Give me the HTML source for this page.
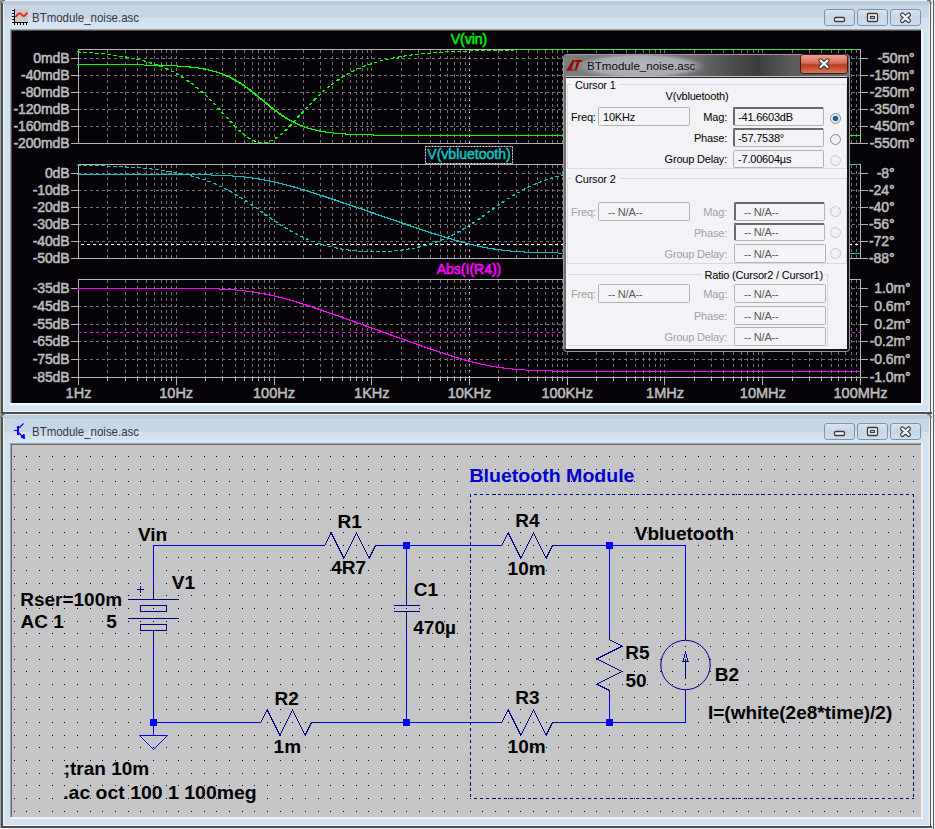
<!DOCTYPE html><html><head><meta charset="utf-8"><style>html,body{margin:0;padding:0;background:#dcdcdc;overflow:hidden}svg{display:block}text{font-family:"Liberation Sans", sans-serif}</style></head><body>
<svg width="935" height="829" viewBox="0 0 935 829">
<defs><linearGradient id="tb" x1="0" y1="0" x2="0" y2="1"><stop offset="0" stop-color="#c3d4e6"/><stop offset="0.62" stop-color="#cbdbeb"/><stop offset="0.66" stop-color="#d9e4ee"/><stop offset="0.8" stop-color="#d4e3f2"/><stop offset="1" stop-color="#d4e3f2"/></linearGradient><linearGradient id="btn" x1="0" y1="0" x2="0" y2="1"><stop offset="0" stop-color="#d8e4f0"/><stop offset="0.5" stop-color="#c6d6e6"/><stop offset="1" stop-color="#d0dff0"/></linearGradient><linearGradient id="redbtn" x1="0" y1="0" x2="0" y2="1"><stop offset="0" stop-color="#e9a898"/><stop offset="0.45" stop-color="#d86c58"/><stop offset="0.55" stop-color="#c0381c"/><stop offset="1" stop-color="#d77d65"/></linearGradient><linearGradient id="dlgtb" x1="0" y1="0" x2="0" y2="1"><stop offset="0" stop-color="#8a8a8a"/><stop offset="1" stop-color="#6e6e6e"/></linearGradient><radialGradient id="glow" cx="0.5" cy="0.5" r="0.5"><stop offset="0" stop-color="#a8a8a8"/><stop offset="0.7" stop-color="#9a9a9a"/><stop offset="1" stop-color="#7a7a7a" stop-opacity="0"/></radialGradient><pattern id="dots" x="14" y="456" width="38" height="38" patternUnits="userSpaceOnUse"><rect x="0" y="0" width="1" height="1" fill="#000"/><rect x="12" y="0" width="1" height="1" fill="#000"/><rect x="25" y="0" width="1" height="1" fill="#000"/><rect x="0" y="13" width="1" height="1" fill="#000"/><rect x="12" y="13" width="1" height="1" fill="#000"/><rect x="25" y="13" width="1" height="1" fill="#000"/><rect x="0" y="25" width="1" height="1" fill="#000"/><rect x="12" y="25" width="1" height="1" fill="#000"/><rect x="25" y="25" width="1" height="1" fill="#000"/></pattern></defs>
<rect x="0" y="0" width="935" height="829" fill="#f0eef2"/>
<rect x="933" y="0" width="1" height="829" fill="#5e5e5e"/>
<rect x="934" y="0" width="1" height="829" fill="#e4e8ee"/>
<rect x="0" y="0" width="931" height="414" fill="#d4e3f1"/>
<rect x="0" y="0" width="931" height="1" fill="#eceaee"/>
<rect x="0" y="1" width="931" height="4" fill="#bacddc"/>
<rect x="0" y="5" width="931" height="13" fill="#c7d6e4"/>
<rect x="0" y="18" width="931" height="4" fill="#d5dfe9"/>
<rect x="0" y="0" width="1" height="414" fill="#a2a2a2"/>
<rect x="1" y="3" width="2" height="411" fill="#4e4e4e"/>
<rect x="3" y="4" width="1" height="408" fill="#eef3f8"/>
<rect x="929" y="4" width="1" height="408" fill="#e8f0f8"/>
<rect x="930" y="3" width="1" height="411" fill="#5a5a5a"/>
<rect x="4" y="411" width="925" height="1" fill="#f2f6fa"/>
<rect x="1" y="412" width="931" height="2" fill="#4e4e4e"/>
<path d="M1,4 Q1,0 5,0" stroke="#6a6a6a" stroke-width="1.5" fill="none"/>
<path d="M927,0 Q931,0 931,4" stroke="#6a6a6a" stroke-width="1.5" fill="none"/>
<rect x="10" y="29" width="913" height="376" fill="#f4f8fc"/>
<rect x="10" y="29" width="911" height="374" fill="#a0a0a0"/>
<rect x="11" y="30" width="910" height="373" fill="#505050"/>
<rect x="12" y="31" width="909" height="372" fill="#050307"/>
<path d="M107.5,50V143 M125.5,50V143 M137.5,50V143 M146.5,50V143 M154.5,50V143 M161.5,50V143 M166.5,50V143 M171.5,50V143 M176.5,50V143 M205.5,50V143 M222.5,50V143 M235.5,50V143 M244.5,50V143 M252.5,50V143 M258.5,50V143 M264.5,50V143 M269.5,50V143 M274.5,50V143 M303.5,50V143 M320.5,50V143 M332.5,50V143 M342.5,50V143 M350.5,50V143 M356.5,50V143 M362.5,50V143 M367.5,50V143 M371.5,50V143 M401.5,50V143 M418.5,50V143 M430.5,50V143 M440.5,50V143 M447.5,50V143 M454.5,50V143 M460.5,50V143 M465.5,50V143 M469.5,50V143 M498.5,50V143 M516.5,50V143 M528.5,50V143 M537.5,50V143 M545.5,50V143 M552.5,50V143 M557.5,50V143 M562.5,50V143 M567.5,50V143 M596.5,50V143 M613.5,50V143 M626.5,50V143 M635.5,50V143 M643.5,50V143 M649.5,50V143 M655.5,50V143 M660.5,50V143 M664.5,50V143 M694.5,50V143 M711.5,50V143 M723.5,50V143 M733.5,50V143 M741.5,50V143 M747.5,50V143 M753.5,50V143 M758.5,50V143 M762.5,50V143 M792.5,50V143 M809.5,50V143 M821.5,50V143 M831.5,50V143 M838.5,50V143 M845.5,50V143 M851.5,50V143 M856.5,50V143 M78,58.5H860 M78,75.5H860 M78,92.5H860 M78,109.5H860 M78,126.5H860 M107.5,165V258 M125.5,165V258 M137.5,165V258 M146.5,165V258 M154.5,165V258 M161.5,165V258 M166.5,165V258 M171.5,165V258 M176.5,165V258 M205.5,165V258 M222.5,165V258 M235.5,165V258 M244.5,165V258 M252.5,165V258 M258.5,165V258 M264.5,165V258 M269.5,165V258 M274.5,165V258 M303.5,165V258 M320.5,165V258 M332.5,165V258 M342.5,165V258 M350.5,165V258 M356.5,165V258 M362.5,165V258 M367.5,165V258 M371.5,165V258 M401.5,165V258 M418.5,165V258 M430.5,165V258 M440.5,165V258 M447.5,165V258 M454.5,165V258 M460.5,165V258 M465.5,165V258 M469.5,165V258 M498.5,165V258 M516.5,165V258 M528.5,165V258 M537.5,165V258 M545.5,165V258 M552.5,165V258 M557.5,165V258 M562.5,165V258 M567.5,165V258 M596.5,165V258 M613.5,165V258 M626.5,165V258 M635.5,165V258 M643.5,165V258 M649.5,165V258 M655.5,165V258 M660.5,165V258 M664.5,165V258 M694.5,165V258 M711.5,165V258 M723.5,165V258 M733.5,165V258 M741.5,165V258 M747.5,165V258 M753.5,165V258 M758.5,165V258 M762.5,165V258 M792.5,165V258 M809.5,165V258 M821.5,165V258 M831.5,165V258 M838.5,165V258 M845.5,165V258 M851.5,165V258 M856.5,165V258 M78,173.5H860 M78,190.5H860 M78,207.5H860 M78,224.5H860 M78,241.5H860 M107.5,280V377 M125.5,280V377 M137.5,280V377 M146.5,280V377 M154.5,280V377 M161.5,280V377 M166.5,280V377 M171.5,280V377 M176.5,280V377 M205.5,280V377 M222.5,280V377 M235.5,280V377 M244.5,280V377 M252.5,280V377 M258.5,280V377 M264.5,280V377 M269.5,280V377 M274.5,280V377 M303.5,280V377 M320.5,280V377 M332.5,280V377 M342.5,280V377 M350.5,280V377 M356.5,280V377 M362.5,280V377 M367.5,280V377 M371.5,280V377 M401.5,280V377 M418.5,280V377 M430.5,280V377 M440.5,280V377 M447.5,280V377 M454.5,280V377 M460.5,280V377 M465.5,280V377 M469.5,280V377 M498.5,280V377 M516.5,280V377 M528.5,280V377 M537.5,280V377 M545.5,280V377 M552.5,280V377 M557.5,280V377 M562.5,280V377 M567.5,280V377 M596.5,280V377 M613.5,280V377 M626.5,280V377 M635.5,280V377 M643.5,280V377 M649.5,280V377 M655.5,280V377 M660.5,280V377 M664.5,280V377 M694.5,280V377 M711.5,280V377 M723.5,280V377 M733.5,280V377 M741.5,280V377 M747.5,280V377 M753.5,280V377 M758.5,280V377 M762.5,280V377 M792.5,280V377 M809.5,280V377 M821.5,280V377 M831.5,280V377 M838.5,280V377 M845.5,280V377 M851.5,280V377 M856.5,280V377 M78,288.5H860 M78,306.5H860 M78,324.5H860 M78,341.5H860 M78,359.5H860" stroke="#727272" stroke-width="1" stroke-dasharray="3,3" fill="none" shape-rendering="crispEdges"/>
<path d="M78.5,49.5H860.5V143.5H78.5Z M71,58.5H78 M861,58.5H868 M71,75.5H78 M861,75.5H868 M71,92.5H78 M861,92.5H868 M71,109.5H78 M861,109.5H868 M71,126.5H78 M861,126.5H868 M71,143.5H78 M861,143.5H868 M78.5,164.5H860.5V258.5H78.5Z M71,173.5H78 M861,173.5H868 M71,190.5H78 M861,190.5H868 M71,207.5H78 M861,207.5H868 M71,224.5H78 M861,224.5H868 M71,241.5H78 M861,241.5H868 M71,258.5H78 M861,258.5H868 M78.5,279.5H860.5V377.5H78.5Z M71,288.5H78 M861,288.5H868 M71,306.5H78 M861,306.5H868 M71,324.5H78 M861,324.5H868 M71,341.5H78 M861,341.5H868 M71,359.5H78 M861,359.5H868 M71,377.5H78 M861,377.5H868" stroke="#b4b4b4" stroke-width="1" fill="none" shape-rendering="crispEdges"/>
<path d="M78.5,377V385 M107.5,377V381 M125.5,377V381 M137.5,377V381 M146.5,377V381 M154.5,377V381 M161.5,377V381 M166.5,377V381 M171.5,377V381 M176.5,377V385 M205.5,377V381 M222.5,377V381 M235.5,377V381 M244.5,377V381 M252.5,377V381 M258.5,377V381 M264.5,377V381 M269.5,377V381 M274.5,377V385 M303.5,377V381 M320.5,377V381 M332.5,377V381 M342.5,377V381 M350.5,377V381 M356.5,377V381 M362.5,377V381 M367.5,377V381 M371.5,377V385 M401.5,377V381 M418.5,377V381 M430.5,377V381 M440.5,377V381 M447.5,377V381 M454.5,377V381 M460.5,377V381 M465.5,377V381 M469.5,377V385 M498.5,377V381 M516.5,377V381 M528.5,377V381 M537.5,377V381 M545.5,377V381 M552.5,377V381 M557.5,377V381 M562.5,377V381 M567.5,377V385 M596.5,377V381 M613.5,377V381 M626.5,377V381 M635.5,377V381 M643.5,377V381 M649.5,377V381 M655.5,377V381 M660.5,377V381 M664.5,377V385 M694.5,377V381 M711.5,377V381 M723.5,377V381 M733.5,377V381 M741.5,377V381 M747.5,377V381 M753.5,377V381 M758.5,377V381 M762.5,377V385 M792.5,377V381 M809.5,377V381 M821.5,377V381 M831.5,377V381 M838.5,377V381 M845.5,377V381 M851.5,377V381 M856.5,377V381 M860.5,377V385" stroke="#b4b4b4" stroke-width="1" fill="none" shape-rendering="crispEdges"/>
<g font-size="14" font-weight="normal" fill="#bcbcbc" stroke="#bcbcbc" stroke-width="0.55"><text x="69.5" y="63" text-anchor="end" style="letter-spacing:-0.1px">0mdB</text><text x="914.5" y="63" text-anchor="end" style="letter-spacing:-0.1px">-50m°</text><text x="69.5" y="80" text-anchor="end" style="letter-spacing:-0.1px">-40mdB</text><text x="914.5" y="80" text-anchor="end" style="letter-spacing:-0.1px">-150m°</text><text x="69.5" y="97" text-anchor="end" style="letter-spacing:-0.1px">-80mdB</text><text x="914.5" y="97" text-anchor="end" style="letter-spacing:-0.1px">-250m°</text><text x="69.5" y="114" text-anchor="end" style="letter-spacing:-0.1px">-120mdB</text><text x="914.5" y="114" text-anchor="end" style="letter-spacing:-0.1px">-350m°</text><text x="69.5" y="131" text-anchor="end" style="letter-spacing:-0.1px">-160mdB</text><text x="914.5" y="131" text-anchor="end" style="letter-spacing:-0.1px">-450m°</text><text x="69.5" y="148" text-anchor="end" style="letter-spacing:-0.1px">-200mdB</text><text x="914.5" y="148" text-anchor="end" style="letter-spacing:-0.1px">-550m°</text><text x="69.5" y="178" text-anchor="end" style="letter-spacing:-0.1px">0dB</text><text x="894.5" y="178" text-anchor="end" style="letter-spacing:-0.1px">-8°</text><text x="69.5" y="195" text-anchor="end" style="letter-spacing:-0.1px">-10dB</text><text x="894.5" y="195" text-anchor="end" style="letter-spacing:-0.1px">-24°</text><text x="69.5" y="212" text-anchor="end" style="letter-spacing:-0.1px">-20dB</text><text x="894.5" y="212" text-anchor="end" style="letter-spacing:-0.1px">-40°</text><text x="69.5" y="229" text-anchor="end" style="letter-spacing:-0.1px">-30dB</text><text x="894.5" y="229" text-anchor="end" style="letter-spacing:-0.1px">-56°</text><text x="69.5" y="246" text-anchor="end" style="letter-spacing:-0.1px">-40dB</text><text x="894.5" y="246" text-anchor="end" style="letter-spacing:-0.1px">-72°</text><text x="69.5" y="263" text-anchor="end" style="letter-spacing:-0.1px">-50dB</text><text x="894.5" y="263" text-anchor="end" style="letter-spacing:-0.1px">-88°</text><text x="69.5" y="293" text-anchor="end" style="letter-spacing:-0.1px">-35dB</text><text x="910.5" y="293" text-anchor="end" style="letter-spacing:-0.1px">1.0m°</text><text x="69.5" y="311" text-anchor="end" style="letter-spacing:-0.1px">-45dB</text><text x="910.5" y="311" text-anchor="end" style="letter-spacing:-0.1px">0.6m°</text><text x="69.5" y="329" text-anchor="end" style="letter-spacing:-0.1px">-55dB</text><text x="910.5" y="329" text-anchor="end" style="letter-spacing:-0.1px">0.2m°</text><text x="69.5" y="346" text-anchor="end" style="letter-spacing:-0.1px">-65dB</text><text x="910.5" y="346" text-anchor="end" style="letter-spacing:-0.1px">-0.2m°</text><text x="69.5" y="364" text-anchor="end" style="letter-spacing:-0.1px">-75dB</text><text x="910.5" y="364" text-anchor="end" style="letter-spacing:-0.1px">-0.6m°</text><text x="69.5" y="382" text-anchor="end" style="letter-spacing:-0.1px">-85dB</text><text x="910.5" y="382" text-anchor="end" style="letter-spacing:-0.1px">-1.0m°</text><text x="78.5" y="398" text-anchor="middle" font-size="14.5">1Hz</text><text x="176.2" y="398" text-anchor="middle" font-size="14.5">10Hz</text><text x="274.0" y="398" text-anchor="middle" font-size="14.5">100Hz</text><text x="371.8" y="398" text-anchor="middle" font-size="14.5">1KHz</text><text x="469.5" y="398" text-anchor="middle" font-size="14.5">10KHz</text><text x="567.2" y="398" text-anchor="middle" font-size="14.5">100KHz</text><text x="665.0" y="398" text-anchor="middle" font-size="14.5">1MHz</text><text x="762.8" y="398" text-anchor="middle" font-size="14.5">10MHz</text><text x="860.5" y="398" text-anchor="middle" font-size="14.5">100MHz</text></g>
<text x="469" y="44" text-anchor="middle" font-size="14" fill="#00ee00" stroke="#00ee00" stroke-width="0.55">V(vin)</text>
<rect x="425.5" y="146.5" width="87" height="17" fill="#050307" stroke="#e0e0e0" stroke-width="1" stroke-dasharray="2,1"/>
<text x="469" y="159" text-anchor="middle" font-size="14" fill="#10c0c0" stroke="#10c0c0" stroke-width="0.55">V(vbluetooth)</text>
<text x="469" y="274" text-anchor="middle" font-size="14" fill="#ff00ff" stroke="#ff00ff" stroke-width="0.55">Abs(I(R4))</text>
<path d="M469.5,52V143 M469.5,166V258 M469.5,280V377" stroke="#ffffff" stroke-width="1" stroke-dasharray="1,5" fill="none" shape-rendering="crispEdges"/>
<path d="M81,244.5H860" stroke="#ffffff" stroke-width="1" stroke-dasharray="3,3" fill="none" shape-rendering="crispEdges"/>
<path d="M78.00,64.75 78.65,64.75 79.30,64.75 79.96,64.75 80.61,64.75 81.26,64.75 81.91,64.75 82.57,64.75 83.22,64.75 83.87,64.76 84.52,64.76 85.17,64.76 85.83,64.76 86.48,64.76 87.13,64.76 87.78,64.76 88.44,64.76 89.09,64.76 89.74,64.76 90.39,64.76 91.04,64.76 91.70,64.76 92.35,64.76 93.00,64.76 93.65,64.76 94.31,64.77 94.96,64.77 95.61,64.77 96.26,64.77 96.91,64.77 97.57,64.77 98.22,64.77 98.87,64.77 99.52,64.77 100.18,64.77 100.83,64.77 101.48,64.78 102.13,64.78 102.78,64.78 103.44,64.78 104.09,64.78 104.74,64.78 105.39,64.78 106.05,64.78 106.70,64.79 107.35,64.79 108.00,64.79 108.65,64.79 109.31,64.79 109.96,64.79 110.61,64.79 111.26,64.80 111.91,64.80 112.57,64.80 113.22,64.80 113.87,64.80 114.52,64.81 115.18,64.81 115.83,64.81 116.48,64.81 117.13,64.81 117.78,64.82 118.44,64.82 119.09,64.82 119.74,64.82 120.39,64.83 121.05,64.83 121.70,64.83 122.35,64.83 123.00,64.84 123.65,64.84 124.31,64.84 124.96,64.85 125.61,64.85 126.26,64.85 126.92,64.86 127.57,64.86 128.22,64.86 128.87,64.87 129.52,64.87 130.18,64.88 130.83,64.88 131.48,64.88 132.13,64.89 132.79,64.89 133.44,64.90 134.09,64.90 134.74,64.91 135.39,64.91 136.05,64.92 136.70,64.93 137.35,64.93 138.00,64.94 138.66,64.94 139.31,64.95 139.96,64.96 140.61,64.96 141.26,64.97 141.92,64.98 142.57,64.98 143.22,64.99 143.87,65.00 144.53,65.01 145.18,65.02 145.83,65.02 146.48,65.03 147.13,65.04 147.79,65.05 148.44,65.06 149.09,65.07 149.74,65.08 150.40,65.09 151.05,65.10 151.70,65.11 152.35,65.13 153.00,65.14 153.66,65.15 154.31,65.16 154.96,65.18 155.61,65.19 156.27,65.20 156.92,65.22 157.57,65.23 158.22,65.25 158.87,65.26 159.53,65.28 160.18,65.30 160.83,65.31 161.48,65.33 162.14,65.35 162.79,65.37 163.44,65.39 164.09,65.41 164.74,65.43 165.40,65.45 166.05,65.47 166.70,65.50 167.35,65.52 168.01,65.54 168.66,65.57 169.31,65.59 169.96,65.62 170.61,65.65 171.27,65.67 171.92,65.70 172.57,65.73 173.22,65.76 173.87,65.80 174.53,65.83 175.18,65.86 175.83,65.90 176.48,65.93 177.14,65.97 177.79,66.01 178.44,66.04 179.09,66.08 179.74,66.12 180.40,66.17 181.05,66.21 181.70,66.26 182.35,66.30 183.01,66.35 183.66,66.40 184.31,66.45 184.96,66.50 185.61,66.55 186.27,66.61 186.92,66.67 187.57,66.73 188.22,66.79 188.88,66.85 189.53,66.91 190.18,66.98 190.83,67.04 191.48,67.11 192.14,67.18 192.79,67.26 193.44,67.33 194.09,67.41 194.75,67.49 195.40,67.57 196.05,67.66 196.70,67.75 197.35,67.84 198.01,67.93 198.66,68.02 199.31,68.12 199.96,68.22 200.62,68.32 201.27,68.43 201.92,68.54 202.57,68.65 203.22,68.77 203.88,68.88 204.53,69.01 205.18,69.13 205.83,69.26 206.49,69.39 207.14,69.53 207.79,69.67 208.44,69.81 209.09,69.95 209.75,70.11 210.40,70.26 211.05,70.42 211.70,70.58 212.36,70.75 213.01,70.92 213.66,71.09 214.31,71.27 214.96,71.46 215.62,71.65 216.27,71.84 216.92,72.04 217.57,72.24 218.23,72.45 218.88,72.67 219.53,72.88 220.18,73.11 220.83,73.34 221.49,73.57 222.14,73.81 222.79,74.06 223.44,74.31 224.10,74.57 224.75,74.83 225.40,75.10 226.05,75.37 226.70,75.65 227.36,75.94 228.01,76.23 228.66,76.53 229.31,76.84 229.96,77.15 230.62,77.46 231.27,77.79 231.92,78.12 232.57,78.45 233.23,78.80 233.88,79.15 234.53,79.50 235.18,79.86 235.83,80.23 236.49,80.61 237.14,80.99 237.79,81.38 238.44,81.77 239.10,82.17 239.75,82.58 240.40,82.99 241.05,83.41 241.70,83.83 242.36,84.27 243.01,84.70 243.66,85.15 244.31,85.59 244.97,86.05 245.62,86.51 246.27,86.97 246.92,87.44 247.57,87.92 248.23,88.40 248.88,88.89 249.53,89.38 250.18,89.87 250.84,90.37 251.49,90.88 252.14,91.38 252.79,91.90 253.44,92.41 254.10,92.93 254.75,93.45 255.40,93.98 256.05,94.51 256.71,95.04 257.36,95.57 258.01,96.10 258.66,96.64 259.31,97.18 259.97,97.72 260.62,98.26 261.27,98.80 261.92,99.34 262.58,99.89 263.23,100.43 263.88,100.97 264.53,101.51 265.18,102.05 265.84,102.59 266.49,103.13 267.14,103.67 267.79,104.21 268.45,104.74 269.10,105.27 269.75,105.80 270.40,106.33 271.05,106.85 271.71,107.37 272.36,107.89 273.01,108.41 273.66,108.92 274.32,109.42 274.97,109.92 275.62,110.42 276.27,110.92 276.92,111.41 277.58,111.89 278.23,112.37 278.88,112.84 279.53,113.31 280.19,113.78 280.84,114.23 281.49,114.69 282.14,115.13 282.79,115.57 283.45,116.01 284.10,116.44 284.75,116.86 285.40,117.28 286.06,117.69 286.71,118.09 287.36,118.49 288.01,118.88 288.66,119.27 289.32,119.65 289.97,120.02 290.62,120.38 291.27,120.74 291.92,121.10 292.58,121.44 293.23,121.78 293.88,122.12 294.53,122.45 295.19,122.77 295.84,123.08 296.49,123.39 297.14,123.69 297.79,123.99 298.45,124.28 299.10,124.57 299.75,124.84 300.40,125.12 301.06,125.38 301.71,125.64 302.36,125.90 303.01,126.15 303.66,126.39 304.32,126.63 304.97,126.86 305.62,127.09 306.27,127.31 306.93,127.53 307.58,127.74 308.23,127.95 308.88,128.15 309.53,128.35 310.19,128.54 310.84,128.73 311.49,128.91 312.14,129.09 312.80,129.26 313.45,129.43 314.10,129.60 314.75,129.76 315.40,129.91 316.06,130.07 316.71,130.22 317.36,130.36 318.01,130.50 318.67,130.64 319.32,130.77 319.97,130.90 320.62,131.03 321.27,131.15 321.93,131.27 322.58,131.39 323.23,131.51 323.88,131.62 324.54,131.72 325.19,131.83 325.84,131.93 326.49,132.03 327.14,132.13 327.80,132.22 328.45,132.31 329.10,132.40 329.75,132.49 330.41,132.57 331.06,132.65 331.71,132.73 332.36,132.81 333.01,132.88 333.67,132.96 334.32,133.03 334.97,133.10 335.62,133.16 336.28,133.23 336.93,133.29 337.58,133.35 338.23,133.41 338.88,133.47 339.54,133.53 340.19,133.58 340.84,133.63 341.49,133.69 342.15,133.74 342.80,133.78 343.45,133.83 344.10,133.88 344.75,133.92 345.41,133.96 346.06,134.01 346.71,134.05 347.36,134.09 348.02,134.13 348.67,134.16 349.32,134.20 349.97,134.23 350.62,134.27 351.28,134.30 351.93,134.33 352.58,134.36 353.23,134.39 353.88,134.42 354.54,134.45 355.19,134.48 355.84,134.51 356.49,134.53 357.15,134.56 357.80,134.58 358.45,134.61 359.10,134.63 359.75,134.65 360.41,134.67 361.06,134.69 361.71,134.71 362.36,134.73 363.02,134.75 363.67,134.77 364.32,134.79 364.97,134.81 365.62,134.83 366.28,134.84 366.93,134.86 367.58,134.87 368.23,134.89 368.89,134.90 369.54,134.92 370.19,134.93 370.84,134.94 371.49,134.96 372.15,134.97 372.80,134.98 373.45,134.99 374.10,135.01 374.76,135.02 375.41,135.03 376.06,135.04 376.71,135.05 377.36,135.06 378.02,135.07 378.67,135.08 379.32,135.09 379.97,135.10 380.63,135.10 381.28,135.11 381.93,135.12 382.58,135.13 383.23,135.14 383.89,135.14 384.54,135.15 385.19,135.16 385.84,135.16 386.50,135.17 387.15,135.18 387.80,135.18 388.45,135.19 389.10,135.19 389.76,135.20 390.41,135.20 391.06,135.21 391.71,135.21 392.37,135.22 393.02,135.22 393.67,135.23 394.32,135.23 394.97,135.24 395.63,135.24 396.28,135.25 396.93,135.25 397.58,135.25 398.24,135.26 398.89,135.26 399.54,135.26 400.19,135.27 400.84,135.27 401.50,135.27 402.15,135.28 402.80,135.28 403.45,135.28 404.11,135.29 404.76,135.29 405.41,135.29 406.06,135.29 406.71,135.30 407.37,135.30 408.02,135.30 408.67,135.30 409.32,135.31 409.97,135.31 410.63,135.31 411.28,135.31 411.93,135.31 412.58,135.32 413.24,135.32 413.89,135.32 414.54,135.32 415.19,135.32 415.84,135.32 416.50,135.33 417.15,135.33 417.80,135.33 418.45,135.33 419.11,135.33 419.76,135.33 420.41,135.33 421.06,135.34 421.71,135.34 422.37,135.34 423.02,135.34 423.67,135.34 424.32,135.34 424.98,135.34 425.63,135.34 426.28,135.34 426.93,135.35 427.58,135.35 428.24,135.35 428.89,135.35 429.54,135.35 430.19,135.35 430.85,135.35 431.50,135.35 432.15,135.35 432.80,135.35 433.45,135.35 434.11,135.35 434.76,135.36 435.41,135.36 436.06,135.36 436.72,135.36 437.37,135.36 438.02,135.36 438.67,135.36 439.32,135.36 439.98,135.36 440.63,135.36 441.28,135.36 441.93,135.36 442.59,135.36 443.24,135.36 443.89,135.36 444.54,135.36 445.19,135.36 445.85,135.36 446.50,135.36 447.15,135.36 447.80,135.37 448.46,135.37 449.11,135.37 449.76,135.37 450.41,135.37 451.06,135.37 451.72,135.37 452.37,135.37 453.02,135.37 453.67,135.37 454.33,135.37 454.98,135.37 455.63,135.37 456.28,135.37 456.93,135.37 457.59,135.37 458.24,135.37 458.89,135.37 459.54,135.37 460.20,135.37 460.85,135.37 461.50,135.37 462.15,135.37 462.80,135.37 463.46,135.37 464.11,135.37 464.76,135.37 465.41,135.37 466.07,135.37 466.72,135.37 467.37,135.37 468.02,135.37 468.67,135.37 469.33,135.37 469.98,135.37 470.63,135.37 471.28,135.37 471.93,135.37 472.59,135.37 473.24,135.37 473.89,135.37 474.54,135.37 475.20,135.37 475.85,135.37 476.50,135.37 477.15,135.37 477.80,135.37 478.46,135.37 479.11,135.37 479.76,135.37 480.41,135.37 481.07,135.37 481.72,135.37 482.37,135.37 483.02,135.37 483.67,135.37 484.33,135.37 484.98,135.37 485.63,135.37 486.28,135.37 486.94,135.37 487.59,135.37 488.24,135.38 488.89,135.38 489.54,135.38 490.20,135.38 490.85,135.38 491.50,135.38 492.15,135.38 492.81,135.38 493.46,135.38 494.11,135.38 494.76,135.38 495.41,135.38 496.07,135.38 496.72,135.38 497.37,135.38 498.02,135.38 498.68,135.38 499.33,135.38 499.98,135.38 500.63,135.38 501.28,135.38 501.94,135.38 502.59,135.38 503.24,135.38 503.89,135.38 504.55,135.38 505.20,135.38 505.85,135.38 506.50,135.38 507.15,135.38 507.81,135.38 508.46,135.38 509.11,135.38 509.76,135.38 510.42,135.38 511.07,135.38 511.72,135.38 512.37,135.38 513.02,135.38 513.68,135.38 514.33,135.38 514.98,135.38 515.63,135.38 516.29,135.38 516.94,135.38 517.59,135.38 518.24,135.38 518.89,135.38 519.55,135.38 520.20,135.38 520.85,135.38 521.50,135.38 522.16,135.38 522.81,135.38 523.46,135.38 524.11,135.38 524.76,135.38 525.42,135.38 526.07,135.38 526.72,135.38 527.37,135.38 528.03,135.38 528.68,135.38 529.33,135.38 529.98,135.38 530.63,135.38 531.29,135.38 531.94,135.38 532.59,135.38 533.24,135.38 533.89,135.38 534.55,135.38 535.20,135.38 535.85,135.38 536.50,135.38 537.16,135.38 537.81,135.38 538.46,135.38 539.11,135.38 539.76,135.38 540.42,135.38 541.07,135.38 541.72,135.38 542.37,135.38 543.03,135.38 543.68,135.38 544.33,135.38 544.98,135.38 545.63,135.38 546.29,135.38 546.94,135.38 547.59,135.38 548.24,135.38 548.90,135.38 549.55,135.38 550.20,135.38 550.85,135.38 551.50,135.38 552.16,135.38 552.81,135.38 553.46,135.38 554.11,135.38 554.77,135.38 555.42,135.38 556.07,135.38 556.72,135.38 557.37,135.38 558.03,135.38 558.68,135.38 559.33,135.38 559.98,135.38 560.64,135.38 561.29,135.38 561.94,135.38 562.59,135.38 563.24,135.38 563.90,135.38 564.55,135.38 565.20,135.38 565.85,135.38 566.51,135.38 567.16,135.38 567.81,135.38 568.46,135.38 569.11,135.38 569.77,135.38 570.42,135.38 571.07,135.38 571.72,135.38 572.38,135.38 573.03,135.38 573.68,135.38 574.33,135.38 574.98,135.38 575.64,135.38 576.29,135.38 576.94,135.38 577.59,135.38 578.25,135.38 578.90,135.38 579.55,135.38 580.20,135.38 580.85,135.38 581.51,135.38 582.16,135.38 582.81,135.38 583.46,135.38 584.12,135.38 584.77,135.38 585.42,135.38 586.07,135.38 586.72,135.38 587.38,135.38 588.03,135.38 588.68,135.38 589.33,135.38 589.98,135.38 590.64,135.38 591.29,135.38 591.94,135.38 592.59,135.38 593.25,135.38 593.90,135.38 594.55,135.38 595.20,135.38 595.85,135.38 596.51,135.38 597.16,135.38 597.81,135.38 598.46,135.38 599.12,135.38 599.77,135.38 600.42,135.38 601.07,135.38 601.72,135.38 602.38,135.38 603.03,135.38 603.68,135.38 604.33,135.38 604.99,135.38 605.64,135.38 606.29,135.38 606.94,135.38 607.59,135.38 608.25,135.38 608.90,135.38 609.55,135.38 610.20,135.38 610.86,135.38 611.51,135.38 612.16,135.38 612.81,135.38 613.46,135.38 614.12,135.38 614.77,135.38 615.42,135.38 616.07,135.38 616.73,135.38 617.38,135.38 618.03,135.38 618.68,135.38 619.33,135.38 619.99,135.38 620.64,135.38 621.29,135.38 621.94,135.38 622.60,135.38 623.25,135.38 623.90,135.38 624.55,135.38 625.20,135.38 625.86,135.38 626.51,135.38 627.16,135.38 627.81,135.38 628.47,135.38 629.12,135.38 629.77,135.38 630.42,135.38 631.07,135.38 631.73,135.38 632.38,135.38 633.03,135.38 633.68,135.38 634.34,135.38 634.99,135.38 635.64,135.38 636.29,135.38 636.94,135.38 637.60,135.38 638.25,135.38 638.90,135.38 639.55,135.38 640.21,135.38 640.86,135.38 641.51,135.38 642.16,135.38 642.81,135.38 643.47,135.38 644.12,135.38 644.77,135.38 645.42,135.38 646.08,135.38 646.73,135.38 647.38,135.38 648.03,135.38 648.68,135.38 649.34,135.38 649.99,135.38 650.64,135.38 651.29,135.38 651.94,135.38 652.60,135.38 653.25,135.38 653.90,135.38 654.55,135.38 655.21,135.38 655.86,135.38 656.51,135.38 657.16,135.38 657.81,135.38 658.47,135.38 659.12,135.38 659.77,135.38 660.42,135.38 661.08,135.38 661.73,135.38 662.38,135.38 663.03,135.38 663.68,135.38 664.34,135.38 664.99,135.38 665.64,135.38 666.29,135.38 666.95,135.38 667.60,135.38 668.25,135.38 668.90,135.38 669.55,135.38 670.21,135.38 670.86,135.38 671.51,135.38 672.16,135.38 672.82,135.38 673.47,135.38 674.12,135.38 674.77,135.38 675.42,135.38 676.08,135.38 676.73,135.38 677.38,135.38 678.03,135.38 678.69,135.38 679.34,135.38 679.99,135.38 680.64,135.38 681.29,135.38 681.95,135.38 682.60,135.38 683.25,135.38 683.90,135.38 684.56,135.38 685.21,135.38 685.86,135.38 686.51,135.38 687.16,135.38 687.82,135.38 688.47,135.38 689.12,135.38 689.77,135.38 690.43,135.38 691.08,135.38 691.73,135.38 692.38,135.38 693.03,135.38 693.69,135.38 694.34,135.38 694.99,135.38 695.64,135.38 696.30,135.38 696.95,135.38 697.60,135.38 698.25,135.38 698.90,135.38 699.56,135.38 700.21,135.38 700.86,135.38 701.51,135.38 702.17,135.38 702.82,135.38 703.47,135.38 704.12,135.38 704.77,135.38 705.43,135.38 706.08,135.38 706.73,135.38 707.38,135.38 708.04,135.38 708.69,135.38 709.34,135.38 709.99,135.38 710.64,135.38 711.30,135.38 711.95,135.38 712.60,135.38 713.25,135.38 713.90,135.38 714.56,135.38 715.21,135.38 715.86,135.38 716.51,135.38 717.17,135.38 717.82,135.38 718.47,135.38 719.12,135.38 719.77,135.38 720.43,135.38 721.08,135.38 721.73,135.38 722.38,135.38 723.04,135.38 723.69,135.38 724.34,135.38 724.99,135.38 725.64,135.38 726.30,135.38 726.95,135.38 727.60,135.38 728.25,135.38 728.91,135.38 729.56,135.38 730.21,135.38 730.86,135.38 731.51,135.38 732.17,135.38 732.82,135.38 733.47,135.38 734.12,135.38 734.78,135.38 735.43,135.38 736.08,135.38 736.73,135.38 737.38,135.38 738.04,135.38 738.69,135.38 739.34,135.38 739.99,135.38 740.65,135.38 741.30,135.38 741.95,135.38 742.60,135.38 743.25,135.38 743.91,135.38 744.56,135.38 745.21,135.38 745.86,135.38 746.52,135.38 747.17,135.38 747.82,135.38 748.47,135.38 749.12,135.38 749.78,135.38 750.43,135.38 751.08,135.38 751.73,135.38 752.39,135.38 753.04,135.38 753.69,135.38 754.34,135.38 754.99,135.38 755.65,135.38 756.30,135.38 756.95,135.38 757.60,135.38 758.26,135.38 758.91,135.38 759.56,135.38 760.21,135.38 760.86,135.38 761.52,135.38 762.17,135.38 762.82,135.38 763.47,135.38 764.13,135.38 764.78,135.38 765.43,135.38 766.08,135.38 766.73,135.38 767.39,135.38 768.04,135.38 768.69,135.38 769.34,135.38 769.99,135.38 770.65,135.38 771.30,135.38 771.95,135.38 772.60,135.38 773.26,135.38 773.91,135.38 774.56,135.38 775.21,135.38 775.86,135.38 776.52,135.38 777.17,135.38 777.82,135.38 778.47,135.38 779.13,135.38 779.78,135.38 780.43,135.38 781.08,135.38 781.73,135.38 782.39,135.38 783.04,135.38 783.69,135.38 784.34,135.38 785.00,135.38 785.65,135.38 786.30,135.38 786.95,135.38 787.60,135.38 788.26,135.38 788.91,135.38 789.56,135.38 790.21,135.38 790.87,135.38 791.52,135.38 792.17,135.38 792.82,135.38 793.47,135.38 794.13,135.38 794.78,135.38 795.43,135.38 796.08,135.38 796.74,135.38 797.39,135.38 798.04,135.38 798.69,135.38 799.34,135.38 800.00,135.38 800.65,135.38 801.30,135.38 801.95,135.38 802.61,135.38 803.26,135.38 803.91,135.38 804.56,135.38 805.21,135.38 805.87,135.38 806.52,135.38 807.17,135.38 807.82,135.38 808.48,135.38 809.13,135.38 809.78,135.38 810.43,135.38 811.08,135.38 811.74,135.38 812.39,135.38 813.04,135.38 813.69,135.38 814.35,135.38 815.00,135.38 815.65,135.38 816.30,135.38 816.95,135.38 817.61,135.38 818.26,135.38 818.91,135.38 819.56,135.38 820.22,135.38 820.87,135.38 821.52,135.38 822.17,135.38 822.82,135.38 823.48,135.38 824.13,135.38 824.78,135.38 825.43,135.38 826.09,135.38 826.74,135.38 827.39,135.38 828.04,135.38 828.69,135.38 829.35,135.38 830.00,135.38 830.65,135.38 831.30,135.38 831.95,135.38 832.61,135.38 833.26,135.38 833.91,135.38 834.56,135.38 835.22,135.38 835.87,135.38 836.52,135.38 837.17,135.38 837.82,135.38 838.48,135.38 839.13,135.38 839.78,135.38 840.43,135.38 841.09,135.38 841.74,135.38 842.39,135.38 843.04,135.38 843.69,135.38 844.35,135.38 845.00,135.38 845.65,135.38 846.30,135.38 846.96,135.38 847.61,135.38 848.26,135.38 848.91,135.38 849.56,135.38 850.22,135.38 850.87,135.38 851.52,135.38 852.17,135.38 852.83,135.38 853.48,135.38 854.13,135.38 854.78,135.38 855.43,135.38 856.09,135.38 856.74,135.38 857.39,135.38 858.04,135.38 858.70,135.38 859.35,135.38 860.00,135.38" stroke="#00ff00" stroke-width="1" fill="none" shape-rendering="crispEdges"/>
<path d="M78.00,64.75 78.65,64.75 79.30,64.75 79.96,64.75 80.61,64.75 81.26,64.75 81.91,64.75 82.57,64.75 83.22,64.75 83.87,64.76 84.52,64.76 85.17,64.76 85.83,64.76 86.48,64.76 87.13,64.76 87.78,64.76 88.44,64.76 89.09,64.76 89.74,64.76 90.39,64.76 91.04,64.76 91.70,64.76 92.35,64.76 93.00,64.76 93.65,64.76 94.31,64.77 94.96,64.77 95.61,64.77 96.26,64.77 96.91,64.77 97.57,64.77 98.22,64.77 98.87,64.77 99.52,64.77 100.18,64.77 100.83,64.77 101.48,64.78 102.13,64.78 102.78,64.78 103.44,64.78 104.09,64.78 104.74,64.78 105.39,64.78 106.05,64.78 106.70,64.79 107.35,64.79 108.00,64.79 108.65,64.79 109.31,64.79 109.96,64.79 110.61,64.79 111.26,64.80 111.91,64.80 112.57,64.80 113.22,64.80 113.87,64.80 114.52,64.81 115.18,64.81 115.83,64.81 116.48,64.81 117.13,64.81 117.78,64.82 118.44,64.82 119.09,64.82 119.74,64.82 120.39,64.83 121.05,64.83 121.70,64.83 122.35,64.83 123.00,64.84 123.65,64.84 124.31,64.84 124.96,64.85 125.61,64.85 126.26,64.85 126.92,64.86 127.57,64.86 128.22,64.86 128.87,64.87 129.52,64.87 130.18,64.88 130.83,64.88 131.48,64.88 132.13,64.89 132.79,64.89 133.44,64.90 134.09,64.90 134.74,64.91 135.39,64.91 136.05,64.92 136.70,64.93 137.35,64.93 138.00,64.94 138.66,64.94 139.31,64.95 139.96,64.96 140.61,64.96 141.26,64.97 141.92,64.98 142.57,64.98 143.22,64.99 143.87,65.00 144.53,65.01 145.18,65.02 145.83,65.02 146.48,65.03 147.13,65.04 147.79,65.05 148.44,65.06 149.09,65.07 149.74,65.08 150.40,65.09 151.05,65.10 151.70,65.11 152.35,65.13 153.00,65.14 153.66,65.15 154.31,65.16 154.96,65.18 155.61,65.19 156.27,65.20 156.92,65.22 157.57,65.23 158.22,65.25 158.87,65.26 159.53,65.28 160.18,65.30 160.83,65.31 161.48,65.33 162.14,65.35 162.79,65.37 163.44,65.39 164.09,65.41 164.74,65.43 165.40,65.45 166.05,65.47 166.70,65.50 167.35,65.52 168.01,65.54 168.66,65.57 169.31,65.59 169.96,65.62 170.61,65.65 171.27,65.67 171.92,65.70 172.57,65.73 173.22,65.76 173.87,65.80 174.53,65.83 175.18,65.86 175.83,65.90 176.48,65.93 177.14,65.97 177.79,66.01 178.44,66.04 179.09,66.08 179.74,66.12 180.40,66.17 181.05,66.21 181.70,66.26 182.35,66.30 183.01,66.35 183.66,66.40 184.31,66.45 184.96,66.50 185.61,66.55 186.27,66.61 186.92,66.67 187.57,66.73 188.22,66.79 188.88,66.85 189.53,66.91 190.18,66.98 190.83,67.04 191.48,67.11 192.14,67.18 192.79,67.26 193.44,67.33 194.09,67.41 194.75,67.49 195.40,67.57 196.05,67.66 196.70,67.75 197.35,67.84 198.01,67.93 198.66,68.02 199.31,68.12 199.96,68.22 200.62,68.32 201.27,68.43 201.92,68.54 202.57,68.65 203.22,68.77 203.88,68.88 204.53,69.01 205.18,69.13 205.83,69.26 206.49,69.39 207.14,69.53 207.79,69.67 208.44,69.81 209.09,69.95 209.75,70.11 210.40,70.26 211.05,70.42 211.70,70.58 212.36,70.75 213.01,70.92 213.66,71.09 214.31,71.27 214.96,71.46 215.62,71.65 216.27,71.84 216.92,72.04 217.57,72.24 218.23,72.45 218.88,72.67 219.53,72.88 220.18,73.11 220.83,73.34 221.49,73.57 222.14,73.81 222.79,74.06 223.44,74.31 224.10,74.57 224.75,74.83 225.40,75.10 226.05,75.37 226.70,75.65 227.36,75.94 228.01,76.23 228.66,76.53 229.31,76.84 229.96,77.15 230.62,77.46 231.27,77.79 231.92,78.12 232.57,78.45 233.23,78.80 233.88,79.15 234.53,79.50 235.18,79.86 235.83,80.23 236.49,80.61 237.14,80.99 237.79,81.38 238.44,81.77 239.10,82.17 239.75,82.58 240.40,82.99 241.05,83.41 241.70,83.83 242.36,84.27 243.01,84.70 243.66,85.15 244.31,85.59 244.97,86.05 245.62,86.51 246.27,86.97 246.92,87.44 247.57,87.92 248.23,88.40 248.88,88.89 249.53,89.38 250.18,89.87 250.84,90.37 251.49,90.88 252.14,91.38 252.79,91.90 253.44,92.41 254.10,92.93 254.75,93.45 255.40,93.98 256.05,94.51 256.71,95.04 257.36,95.57 258.01,96.10 258.66,96.64 259.31,97.18 259.97,97.72 260.62,98.26 261.27,98.80 261.92,99.34 262.58,99.89 263.23,100.43 263.88,100.97 264.53,101.51 265.18,102.05 265.84,102.59 266.49,103.13 267.14,103.67 267.79,104.21 268.45,104.74 269.10,105.27 269.75,105.80 270.40,106.33 271.05,106.85 271.71,107.37 272.36,107.89 273.01,108.41 273.66,108.92 274.32,109.42 274.97,109.92 275.62,110.42 276.27,110.92 276.92,111.41 277.58,111.89 278.23,112.37 278.88,112.84 279.53,113.31 280.19,113.78 280.84,114.23 281.49,114.69 282.14,115.13 282.79,115.57 283.45,116.01 284.10,116.44 284.75,116.86 285.40,117.28 286.06,117.69 286.71,118.09 287.36,118.49 288.01,118.88 288.66,119.27 289.32,119.65 289.97,120.02 290.62,120.38 291.27,120.74 291.92,121.10 292.58,121.44 293.23,121.78 293.88,122.12 294.53,122.45 295.19,122.77 295.84,123.08 296.49,123.39 297.14,123.69 297.79,123.99 298.45,124.28 299.10,124.57 299.75,124.84 300.40,125.12 301.06,125.38 301.71,125.64 302.36,125.90 303.01,126.15 303.66,126.39 304.32,126.63 304.97,126.86 305.62,127.09 306.27,127.31 306.93,127.53 307.58,127.74 308.23,127.95 308.88,128.15 309.53,128.35 310.19,128.54 310.84,128.73 311.49,128.91 312.14,129.09 312.80,129.26 313.45,129.43 314.10,129.60 314.75,129.76 315.40,129.91 316.06,130.07 316.71,130.22 317.36,130.36 318.01,130.50 318.67,130.64 319.32,130.77 319.97,130.90 320.62,131.03 321.27,131.15 321.93,131.27 322.58,131.39 323.23,131.51 323.88,131.62 324.54,131.72 325.19,131.83 325.84,131.93 326.49,132.03 327.14,132.13 327.80,132.22 328.45,132.31 329.10,132.40 329.75,132.49 330.41,132.57 331.06,132.65 331.71,132.73 332.36,132.81 333.01,132.88 333.67,132.96 334.32,133.03 334.97,133.10 335.62,133.16 336.28,133.23 336.93,133.29 337.58,133.35 338.23,133.41 338.88,133.47 339.54,133.53 340.19,133.58 340.84,133.63 341.49,133.69 342.15,133.74 342.80,133.78 343.45,133.83 344.10,133.88 344.75,133.92 345.41,133.96 346.06,134.01 346.71,134.05 347.36,134.09 348.02,134.13 348.67,134.16 349.32,134.20 349.97,134.23 350.62,134.27 351.28,134.30 351.93,134.33 352.58,134.36 353.23,134.39 353.88,134.42 354.54,134.45 355.19,134.48 355.84,134.51 356.49,134.53 357.15,134.56 357.80,134.58 358.45,134.61 359.10,134.63 359.75,134.65 360.41,134.67 361.06,134.69 361.71,134.71 362.36,134.73 363.02,134.75 363.67,134.77 364.32,134.79 364.97,134.81 365.62,134.83 366.28,134.84 366.93,134.86 367.58,134.87 368.23,134.89 368.89,134.90 369.54,134.92 370.19,134.93 370.84,134.94 371.49,134.96 372.15,134.97 372.80,134.98 373.45,134.99 374.10,135.01 374.76,135.02 375.41,135.03 376.06,135.04 376.71,135.05 377.36,135.06 378.02,135.07 378.67,135.08 379.32,135.09 379.97,135.10 380.63,135.10 381.28,135.11 381.93,135.12 382.58,135.13 383.23,135.14 383.89,135.14 384.54,135.15 385.19,135.16 385.84,135.16 386.50,135.17 387.15,135.18 387.80,135.18 388.45,135.19 389.10,135.19 389.76,135.20 390.41,135.20 391.06,135.21 391.71,135.21 392.37,135.22 393.02,135.22 393.67,135.23 394.32,135.23 394.97,135.24 395.63,135.24 396.28,135.25 396.93,135.25 397.58,135.25 398.24,135.26 398.89,135.26 399.54,135.26 400.19,135.27 400.84,135.27 401.50,135.27 402.15,135.28 402.80,135.28 403.45,135.28 404.11,135.29 404.76,135.29 405.41,135.29 406.06,135.29 406.71,135.30 407.37,135.30 408.02,135.30 408.67,135.30 409.32,135.31 409.97,135.31 410.63,135.31 411.28,135.31 411.93,135.31 412.58,135.32 413.24,135.32 413.89,135.32 414.54,135.32 415.19,135.32 415.84,135.32 416.50,135.33 417.15,135.33 417.80,135.33 418.45,135.33 419.11,135.33 419.76,135.33 420.41,135.33 421.06,135.34 421.71,135.34 422.37,135.34 423.02,135.34 423.67,135.34 424.32,135.34 424.98,135.34 425.63,135.34 426.28,135.34 426.93,135.35 427.58,135.35 428.24,135.35 428.89,135.35 429.54,135.35 430.19,135.35 430.85,135.35 431.50,135.35 432.15,135.35 432.80,135.35 433.45,135.35 434.11,135.35 434.76,135.36 435.41,135.36 436.06,135.36 436.72,135.36 437.37,135.36 438.02,135.36 438.67,135.36 439.32,135.36 439.98,135.36 440.63,135.36 441.28,135.36 441.93,135.36 442.59,135.36 443.24,135.36 443.89,135.36 444.54,135.36 445.19,135.36 445.85,135.36 446.50,135.36 447.15,135.36 447.80,135.37 448.46,135.37 449.11,135.37 449.76,135.37 450.41,135.37 451.06,135.37 451.72,135.37 452.37,135.37 453.02,135.37 453.67,135.37 454.33,135.37 454.98,135.37 455.63,135.37 456.28,135.37 456.93,135.37 457.59,135.37 458.24,135.37 458.89,135.37 459.54,135.37 460.20,135.37 460.85,135.37 461.50,135.37 462.15,135.37 462.80,135.37 463.46,135.37 464.11,135.37 464.76,135.37 465.41,135.37 466.07,135.37 466.72,135.37 467.37,135.37 468.02,135.37 468.67,135.37 469.33,135.37 469.98,135.37 470.63,135.37 471.28,135.37 471.93,135.37 472.59,135.37 473.24,135.37 473.89,135.37 474.54,135.37 475.20,135.37 475.85,135.37 476.50,135.37 477.15,135.37 477.80,135.37 478.46,135.37 479.11,135.37 479.76,135.37 480.41,135.37 481.07,135.37 481.72,135.37 482.37,135.37 483.02,135.37 483.67,135.37 484.33,135.37 484.98,135.37 485.63,135.37 486.28,135.37 486.94,135.37 487.59,135.37 488.24,135.38 488.89,135.38 489.54,135.38 490.20,135.38 490.85,135.38 491.50,135.38 492.15,135.38 492.81,135.38 493.46,135.38 494.11,135.38 494.76,135.38 495.41,135.38 496.07,135.38 496.72,135.38 497.37,135.38 498.02,135.38 498.68,135.38 499.33,135.38 499.98,135.38 500.63,135.38 501.28,135.38 501.94,135.38 502.59,135.38 503.24,135.38 503.89,135.38 504.55,135.38 505.20,135.38 505.85,135.38 506.50,135.38 507.15,135.38 507.81,135.38 508.46,135.38 509.11,135.38 509.76,135.38 510.42,135.38 511.07,135.38 511.72,135.38 512.37,135.38 513.02,135.38 513.68,135.38 514.33,135.38 514.98,135.38 515.63,135.38 516.29,135.38 516.94,135.38 517.59,135.38 518.24,135.38 518.89,135.38 519.55,135.38 520.20,135.38 520.85,135.38 521.50,135.38 522.16,135.38 522.81,135.38 523.46,135.38 524.11,135.38 524.76,135.38 525.42,135.38 526.07,135.38 526.72,135.38 527.37,135.38 528.03,135.38 528.68,135.38 529.33,135.38 529.98,135.38 530.63,135.38 531.29,135.38 531.94,135.38 532.59,135.38 533.24,135.38 533.89,135.38 534.55,135.38 535.20,135.38 535.85,135.38 536.50,135.38 537.16,135.38 537.81,135.38 538.46,135.38 539.11,135.38 539.76,135.38 540.42,135.38 541.07,135.38 541.72,135.38 542.37,135.38 543.03,135.38 543.68,135.38 544.33,135.38 544.98,135.38 545.63,135.38 546.29,135.38 546.94,135.38 547.59,135.38 548.24,135.38 548.90,135.38 549.55,135.38 550.20,135.38 550.85,135.38 551.50,135.38 552.16,135.38 552.81,135.38 553.46,135.38 554.11,135.38 554.77,135.38 555.42,135.38 556.07,135.38 556.72,135.38 557.37,135.38 558.03,135.38 558.68,135.38 559.33,135.38 559.98,135.38 560.64,135.38 561.29,135.38 561.94,135.38 562.59,135.38 563.24,135.38 563.90,135.38 564.55,135.38 565.20,135.38 565.85,135.38 566.51,135.38 567.16,135.38 567.81,135.38 568.46,135.38 569.11,135.38 569.77,135.38 570.42,135.38 571.07,135.38 571.72,135.38 572.38,135.38 573.03,135.38 573.68,135.38 574.33,135.38 574.98,135.38 575.64,135.38 576.29,135.38 576.94,135.38 577.59,135.38 578.25,135.38 578.90,135.38 579.55,135.38 580.20,135.38 580.85,135.38 581.51,135.38 582.16,135.38 582.81,135.38 583.46,135.38 584.12,135.38 584.77,135.38 585.42,135.38 586.07,135.38 586.72,135.38 587.38,135.38 588.03,135.38 588.68,135.38 589.33,135.38 589.98,135.38 590.64,135.38 591.29,135.38 591.94,135.38 592.59,135.38 593.25,135.38 593.90,135.38 594.55,135.38 595.20,135.38 595.85,135.38 596.51,135.38 597.16,135.38 597.81,135.38 598.46,135.38 599.12,135.38 599.77,135.38 600.42,135.38 601.07,135.38 601.72,135.38 602.38,135.38 603.03,135.38 603.68,135.38 604.33,135.38 604.99,135.38 605.64,135.38 606.29,135.38 606.94,135.38 607.59,135.38 608.25,135.38 608.90,135.38 609.55,135.38 610.20,135.38 610.86,135.38 611.51,135.38 612.16,135.38 612.81,135.38 613.46,135.38 614.12,135.38 614.77,135.38 615.42,135.38 616.07,135.38 616.73,135.38 617.38,135.38 618.03,135.38 618.68,135.38 619.33,135.38 619.99,135.38 620.64,135.38 621.29,135.38 621.94,135.38 622.60,135.38 623.25,135.38 623.90,135.38 624.55,135.38 625.20,135.38 625.86,135.38 626.51,135.38 627.16,135.38 627.81,135.38 628.47,135.38 629.12,135.38 629.77,135.38 630.42,135.38 631.07,135.38 631.73,135.38 632.38,135.38 633.03,135.38 633.68,135.38 634.34,135.38 634.99,135.38 635.64,135.38 636.29,135.38 636.94,135.38 637.60,135.38 638.25,135.38 638.90,135.38 639.55,135.38 640.21,135.38 640.86,135.38 641.51,135.38 642.16,135.38 642.81,135.38 643.47,135.38 644.12,135.38 644.77,135.38 645.42,135.38 646.08,135.38 646.73,135.38 647.38,135.38 648.03,135.38 648.68,135.38 649.34,135.38 649.99,135.38 650.64,135.38 651.29,135.38 651.94,135.38 652.60,135.38 653.25,135.38 653.90,135.38 654.55,135.38 655.21,135.38 655.86,135.38 656.51,135.38 657.16,135.38 657.81,135.38 658.47,135.38 659.12,135.38 659.77,135.38 660.42,135.38 661.08,135.38 661.73,135.38 662.38,135.38 663.03,135.38 663.68,135.38 664.34,135.38 664.99,135.38 665.64,135.38 666.29,135.38 666.95,135.38 667.60,135.38 668.25,135.38 668.90,135.38 669.55,135.38 670.21,135.38 670.86,135.38 671.51,135.38 672.16,135.38 672.82,135.38 673.47,135.38 674.12,135.38 674.77,135.38 675.42,135.38 676.08,135.38 676.73,135.38 677.38,135.38 678.03,135.38 678.69,135.38 679.34,135.38 679.99,135.38 680.64,135.38 681.29,135.38 681.95,135.38 682.60,135.38 683.25,135.38 683.90,135.38 684.56,135.38 685.21,135.38 685.86,135.38 686.51,135.38 687.16,135.38 687.82,135.38 688.47,135.38 689.12,135.38 689.77,135.38 690.43,135.38 691.08,135.38 691.73,135.38 692.38,135.38 693.03,135.38 693.69,135.38 694.34,135.38 694.99,135.38 695.64,135.38 696.30,135.38 696.95,135.38 697.60,135.38 698.25,135.38 698.90,135.38 699.56,135.38 700.21,135.38 700.86,135.38 701.51,135.38 702.17,135.38 702.82,135.38 703.47,135.38 704.12,135.38 704.77,135.38 705.43,135.38 706.08,135.38 706.73,135.38 707.38,135.38 708.04,135.38 708.69,135.38 709.34,135.38 709.99,135.38 710.64,135.38 711.30,135.38 711.95,135.38 712.60,135.38 713.25,135.38 713.90,135.38 714.56,135.38 715.21,135.38 715.86,135.38 716.51,135.38 717.17,135.38 717.82,135.38 718.47,135.38 719.12,135.38 719.77,135.38 720.43,135.38 721.08,135.38 721.73,135.38 722.38,135.38 723.04,135.38 723.69,135.38 724.34,135.38 724.99,135.38 725.64,135.38 726.30,135.38 726.95,135.38 727.60,135.38 728.25,135.38 728.91,135.38 729.56,135.38 730.21,135.38 730.86,135.38 731.51,135.38 732.17,135.38 732.82,135.38 733.47,135.38 734.12,135.38 734.78,135.38 735.43,135.38 736.08,135.38 736.73,135.38 737.38,135.38 738.04,135.38 738.69,135.38 739.34,135.38 739.99,135.38 740.65,135.38 741.30,135.38 741.95,135.38 742.60,135.38 743.25,135.38 743.91,135.38 744.56,135.38 745.21,135.38 745.86,135.38 746.52,135.38 747.17,135.38 747.82,135.38 748.47,135.38 749.12,135.38 749.78,135.38 750.43,135.38 751.08,135.38 751.73,135.38 752.39,135.38 753.04,135.38 753.69,135.38 754.34,135.38 754.99,135.38 755.65,135.38 756.30,135.38 756.95,135.38 757.60,135.38 758.26,135.38 758.91,135.38 759.56,135.38 760.21,135.38 760.86,135.38 761.52,135.38 762.17,135.38 762.82,135.38 763.47,135.38 764.13,135.38 764.78,135.38 765.43,135.38 766.08,135.38 766.73,135.38 767.39,135.38 768.04,135.38 768.69,135.38 769.34,135.38 769.99,135.38 770.65,135.38 771.30,135.38 771.95,135.38 772.60,135.38 773.26,135.38 773.91,135.38 774.56,135.38 775.21,135.38 775.86,135.38 776.52,135.38 777.17,135.38 777.82,135.38 778.47,135.38 779.13,135.38 779.78,135.38 780.43,135.38 781.08,135.38 781.73,135.38 782.39,135.38 783.04,135.38 783.69,135.38 784.34,135.38 785.00,135.38 785.65,135.38 786.30,135.38 786.95,135.38 787.60,135.38 788.26,135.38 788.91,135.38 789.56,135.38 790.21,135.38 790.87,135.38 791.52,135.38 792.17,135.38 792.82,135.38 793.47,135.38 794.13,135.38 794.78,135.38 795.43,135.38 796.08,135.38 796.74,135.38 797.39,135.38 798.04,135.38 798.69,135.38 799.34,135.38 800.00,135.38 800.65,135.38 801.30,135.38 801.95,135.38 802.61,135.38 803.26,135.38 803.91,135.38 804.56,135.38 805.21,135.38 805.87,135.38 806.52,135.38 807.17,135.38 807.82,135.38 808.48,135.38 809.13,135.38 809.78,135.38 810.43,135.38 811.08,135.38 811.74,135.38 812.39,135.38 813.04,135.38 813.69,135.38 814.35,135.38 815.00,135.38 815.65,135.38 816.30,135.38 816.95,135.38 817.61,135.38 818.26,135.38 818.91,135.38 819.56,135.38 820.22,135.38 820.87,135.38 821.52,135.38 822.17,135.38 822.82,135.38 823.48,135.38 824.13,135.38 824.78,135.38 825.43,135.38 826.09,135.38 826.74,135.38 827.39,135.38 828.04,135.38 828.69,135.38 829.35,135.38 830.00,135.38 830.65,135.38 831.30,135.38 831.95,135.38 832.61,135.38 833.26,135.38 833.91,135.38 834.56,135.38 835.22,135.38 835.87,135.38 836.52,135.38 837.17,135.38 837.82,135.38 838.48,135.38 839.13,135.38 839.78,135.38 840.43,135.38 841.09,135.38 841.74,135.38 842.39,135.38 843.04,135.38 843.69,135.38 844.35,135.38 845.00,135.38 845.65,135.38 846.30,135.38 846.96,135.38 847.61,135.38 848.26,135.38 848.91,135.38 849.56,135.38 850.22,135.38 850.87,135.38 851.52,135.38 852.17,135.38 852.83,135.38 853.48,135.38 854.13,135.38 854.78,135.38 855.43,135.38 856.09,135.38 856.74,135.38 857.39,135.38 858.04,135.38 858.70,135.38 859.35,135.38 860.00,135.38" stroke="#00ff00" stroke-width="1" fill="none" shape-rendering="crispEdges" transform="translate(-1,0)"/>
<path d="M78.00,51.90 78.65,51.94 79.30,51.97 79.96,52.01 80.61,52.05 81.26,52.09 81.91,52.13 82.57,52.17 83.22,52.21 83.87,52.25 84.52,52.30 85.17,52.34 85.83,52.38 86.48,52.43 87.13,52.47 87.78,52.52 88.44,52.57 89.09,52.61 89.74,52.66 90.39,52.71 91.04,52.76 91.70,52.81 92.35,52.86 93.00,52.91 93.65,52.97 94.31,53.02 94.96,53.08 95.61,53.13 96.26,53.19 96.91,53.24 97.57,53.30 98.22,53.36 98.87,53.42 99.52,53.48 100.18,53.54 100.83,53.61 101.48,53.67 102.13,53.73 102.78,53.80 103.44,53.87 104.09,53.93 104.74,54.00 105.39,54.07 106.05,54.14 106.70,54.21 107.35,54.29 108.00,54.36 108.65,54.44 109.31,54.51 109.96,54.59 110.61,54.67 111.26,54.75 111.91,54.83 112.57,54.91 113.22,54.99 113.87,55.08 114.52,55.17 115.18,55.25 115.83,55.34 116.48,55.43 117.13,55.52 117.78,55.62 118.44,55.71 119.09,55.81 119.74,55.91 120.39,56.00 121.05,56.10 121.70,56.21 122.35,56.31 123.00,56.42 123.65,56.52 124.31,56.63 124.96,56.74 125.61,56.85 126.26,56.97 126.92,57.08 127.57,57.20 128.22,57.32 128.87,57.44 129.52,57.56 130.18,57.68 130.83,57.81 131.48,57.94 132.13,58.07 132.79,58.20 133.44,58.33 134.09,58.47 134.74,58.61 135.39,58.75 136.05,58.89 136.70,59.04 137.35,59.18 138.00,59.33 138.66,59.48 139.31,59.64 139.96,59.79 140.61,59.95 141.26,60.11 141.92,60.28 142.57,60.44 143.22,60.61 143.87,60.78 144.53,60.95 145.18,61.13 145.83,61.31 146.48,61.49 147.13,61.67 147.79,61.86 148.44,62.05 149.09,62.24 149.74,62.44 150.40,62.64 151.05,62.84 151.70,63.04 152.35,63.25 153.00,63.46 153.66,63.67 154.31,63.89 154.96,64.11 155.61,64.33 156.27,64.56 156.92,64.79 157.57,65.02 158.22,65.26 158.87,65.50 159.53,65.75 160.18,65.99 160.83,66.24 161.48,66.50 162.14,66.76 162.79,67.02 163.44,67.29 164.09,67.56 164.74,67.83 165.40,68.11 166.05,68.39 166.70,68.68 167.35,68.97 168.01,69.26 168.66,69.56 169.31,69.86 169.96,70.17 170.61,70.48 171.27,70.80 171.92,71.12 172.57,71.45 173.22,71.78 173.87,72.11 174.53,72.45 175.18,72.79 175.83,73.14 176.48,73.50 177.14,73.86 177.79,74.22 178.44,74.59 179.09,74.96 179.74,75.34 180.40,75.72 181.05,76.11 181.70,76.51 182.35,76.91 183.01,77.31 183.66,77.72 184.31,78.14 184.96,78.56 185.61,78.99 186.27,79.42 186.92,79.86 187.57,80.30 188.22,80.75 188.88,81.21 189.53,81.67 190.18,82.14 190.83,82.61 191.48,83.09 192.14,83.57 192.79,84.06 193.44,84.56 194.09,85.06 194.75,85.57 195.40,86.08 196.05,86.60 196.70,87.13 197.35,87.66 198.01,88.20 198.66,88.74 199.31,89.29 199.96,89.84 200.62,90.41 201.27,90.97 201.92,91.55 202.57,92.13 203.22,92.71 203.88,93.30 204.53,93.90 205.18,94.50 205.83,95.11 206.49,95.73 207.14,96.34 207.79,96.97 208.44,97.60 209.09,98.24 209.75,98.88 210.40,99.52 211.05,100.17 211.70,100.83 212.36,101.49 213.01,102.15 213.66,102.82 214.31,103.50 214.96,104.18 215.62,104.86 216.27,105.54 216.92,106.23 217.57,106.93 218.23,107.62 218.88,108.32 219.53,109.03 220.18,109.73 220.83,110.44 221.49,111.15 222.14,111.86 222.79,112.57 223.44,113.28 224.10,114.00 224.75,114.71 225.40,115.43 226.05,116.15 226.70,116.86 227.36,117.58 228.01,118.29 228.66,119.00 229.31,119.71 229.96,120.42 230.62,121.13 231.27,121.83 231.92,122.53 232.57,123.22 233.23,123.91 233.88,124.60 234.53,125.28 235.18,125.95 235.83,126.62 236.49,127.28 237.14,127.94 237.79,128.58 238.44,129.22 239.10,129.85 239.75,130.47 240.40,131.08 241.05,131.68 241.70,132.27 242.36,132.85 243.01,133.42 243.66,133.97 244.31,134.51 244.97,135.04 245.62,135.56 246.27,136.06 246.92,136.54 247.57,137.01 248.23,137.47 248.88,137.90 249.53,138.33 250.18,138.73 250.84,139.12 251.49,139.48 252.14,139.83 252.79,140.17 253.44,140.48 254.10,140.77 254.75,141.04 255.40,141.30 256.05,141.53 256.71,141.74 257.36,141.93 258.01,142.10 258.66,142.25 259.31,142.38 259.97,142.48 260.62,142.57 261.27,142.63 261.92,142.67 262.58,142.69 263.23,142.68 263.88,142.66 264.53,142.61 265.18,142.54 265.84,142.45 266.49,142.33 267.14,142.20 267.79,142.04 268.45,141.87 269.10,141.67 269.75,141.45 270.40,141.21 271.05,140.95 271.71,140.67 272.36,140.37 273.01,140.05 273.66,139.71 274.32,139.35 274.97,138.98 275.62,138.59 276.27,138.18 276.92,137.75 277.58,137.30 278.23,136.84 278.88,136.37 279.53,135.88 280.19,135.37 280.84,134.85 281.49,134.32 282.14,133.77 282.79,133.22 283.45,132.64 284.10,132.06 284.75,131.47 285.40,130.86 286.06,130.25 286.71,129.63 287.36,128.99 288.01,128.35 288.66,127.70 289.32,127.04 289.97,126.38 290.62,125.71 291.27,125.03 291.92,124.35 292.58,123.66 293.23,122.97 293.88,122.27 294.53,121.57 295.19,120.87 295.84,120.16 296.49,119.46 297.14,118.74 297.79,118.03 298.45,117.32 299.10,116.60 299.75,115.89 300.40,115.17 301.06,114.46 301.71,113.74 302.36,113.03 303.01,112.31 303.66,111.60 304.32,110.89 304.97,110.18 305.62,109.48 306.27,108.77 306.93,108.07 307.58,107.37 308.23,106.68 308.88,105.98 309.53,105.30 310.19,104.61 310.84,103.93 311.49,103.25 312.14,102.58 312.80,101.91 313.45,101.25 314.10,100.59 314.75,99.94 315.40,99.29 316.06,98.64 316.71,98.01 317.36,97.37 318.01,96.74 318.67,96.12 319.32,95.50 319.97,94.89 320.62,94.28 321.27,93.68 321.93,93.09 322.58,92.50 323.23,91.92 323.88,91.34 324.54,90.77 325.19,90.20 325.84,89.64 326.49,89.09 327.14,88.54 327.80,88.00 328.45,87.46 329.10,86.94 329.75,86.41 330.41,85.89 331.06,85.38 331.71,84.88 332.36,84.38 333.01,83.88 333.67,83.39 334.32,82.91 334.97,82.44 335.62,81.97 336.28,81.50 336.93,81.04 337.58,80.59 338.23,80.14 338.88,79.70 339.54,79.26 340.19,78.83 340.84,78.41 341.49,77.99 342.15,77.57 342.80,77.17 343.45,76.76 344.10,76.37 344.75,75.97 345.41,75.59 346.06,75.20 346.71,74.83 347.36,74.45 348.02,74.09 348.67,73.73 349.32,73.37 349.97,73.02 350.62,72.67 351.28,72.33 351.93,71.99 352.58,71.66 353.23,71.33 353.88,71.00 354.54,70.69 355.19,70.37 355.84,70.06 356.49,69.75 357.15,69.45 357.80,69.16 358.45,68.86 359.10,68.57 359.75,68.29 360.41,68.01 361.06,67.73 361.71,67.46 362.36,67.19 363.02,66.92 363.67,66.66 364.32,66.41 364.97,66.15 365.62,65.90 366.28,65.66 366.93,65.41 367.58,65.17 368.23,64.94 368.89,64.71 369.54,64.48 370.19,64.25 370.84,64.03 371.49,63.81 372.15,63.60 372.80,63.38 373.45,63.17 374.10,62.97 374.76,62.76 375.41,62.56 376.06,62.37 376.71,62.17 377.36,61.98 378.02,61.79 378.67,61.61 379.32,61.42 379.97,61.24 380.63,61.07 381.28,60.89 381.93,60.72 382.58,60.55 383.23,60.38 383.89,60.22 384.54,60.05 385.19,59.89 385.84,59.74 386.50,59.58 387.15,59.43 387.80,59.28 388.45,59.13 389.10,58.98 389.76,58.84 390.41,58.70 391.06,58.56 391.71,58.42 392.37,58.29 393.02,58.15 393.67,58.02 394.32,57.89 394.97,57.76 395.63,57.64 396.28,57.52 396.93,57.39 397.58,57.27 398.24,57.16 398.89,57.04 399.54,56.92 400.19,56.81 400.84,56.70 401.50,56.59 402.15,56.48 402.80,56.38 403.45,56.27 404.11,56.17 404.76,56.07 405.41,55.97 406.06,55.87 406.71,55.77 407.37,55.68 408.02,55.58 408.67,55.49 409.32,55.40 409.97,55.31 410.63,55.22 411.28,55.13 411.93,55.05 412.58,54.96 413.24,54.88 413.89,54.80 414.54,54.72 415.19,54.64 415.84,54.56 416.50,54.48 417.15,54.41 417.80,54.33 418.45,54.26 419.11,54.19 419.76,54.12 420.41,54.05 421.06,53.98 421.71,53.91 422.37,53.84 423.02,53.78 423.67,53.71 424.32,53.65 424.98,53.58 425.63,53.52 426.28,53.46 426.93,53.40 427.58,53.34 428.24,53.28 428.89,53.22 429.54,53.17 430.19,53.11 430.85,53.06 431.50,53.00 432.15,52.95 432.80,52.90 433.45,52.84 434.11,52.79 434.76,52.74 435.41,52.69 436.06,52.64 436.72,52.60 437.37,52.55 438.02,52.50 438.67,52.46 439.32,52.41 439.98,52.37 440.63,52.32 441.28,52.28 441.93,52.24 442.59,52.20 443.24,52.16 443.89,52.12 444.54,52.08 445.19,52.04 445.85,52.00 446.50,51.96 447.15,51.92 447.80,51.89 448.46,51.85 449.11,51.81 449.76,51.78 450.41,51.74 451.06,51.71 451.72,51.68 452.37,51.64 453.02,51.61 453.67,51.58 454.33,51.55 454.98,51.51 455.63,51.48 456.28,51.45 456.93,51.42 457.59,51.39 458.24,51.37 458.89,51.34 459.54,51.31 460.20,51.28 460.85,51.25 461.50,51.23 462.15,51.20 462.80,51.18 463.46,51.15 464.11,51.12 464.76,51.10 465.41,51.08 466.07,51.05 466.72,51.03 467.37,51.00 468.02,50.98 468.67,50.96 469.33,50.94 469.98,50.91 470.63,50.89 471.28,50.87 471.93,50.85 472.59,50.83 473.24,50.81 473.89,50.79 474.54,50.77 475.20,50.75 475.85,50.73 476.50,50.71 477.15,50.69 477.80,50.68 478.46,50.66 479.11,50.64 479.76,50.62 480.41,50.61 481.07,50.59 481.72,50.57 482.37,50.56 483.02,50.54 483.67,50.52 484.33,50.51 484.98,50.49 485.63,50.48 486.28,50.46 486.94,50.45 487.59,50.43 488.24,50.42 488.89,50.41 489.54,50.39 490.20,50.38 490.85,50.37 491.50,50.35 492.15,50.34 492.81,50.33 493.46,50.31 494.11,50.30 494.76,50.29 495.41,50.28 496.07,50.27 496.72,50.25 497.37,50.24 498.02,50.23 498.68,50.22 499.33,50.21 499.98,50.20 500.63,50.19 501.28,50.18 501.94,50.17 502.59,50.16 503.24,50.15 503.89,50.14 504.55,50.13 505.20,50.12 505.85,50.11 506.50,50.10 507.15,50.09 507.81,50.08 508.46,50.07 509.11,50.06 509.76,50.05 510.42,50.05 511.07,50.04 511.72,50.03 512.37,50.02 513.02,50.01 513.68,50.01 514.33,50.00 514.98,49.99 515.63,49.98 516.29,49.98 516.94,49.97 517.59,49.96 518.24,49.95 518.89,49.95 519.55,49.94 520.20,49.93 520.85,49.93 521.50,49.92 522.16,49.91 522.81,49.91 523.46,49.90 524.11,49.90 524.76,49.89 525.42,49.88 526.07,49.88 526.72,49.87 527.37,49.87 528.03,49.86 528.68,49.86 529.33,49.85 529.98,49.84 530.63,49.84 531.29,49.83 531.94,49.83 532.59,49.82 533.24,49.82 533.89,49.81 534.55,49.81 535.20,49.80 535.85,49.80 536.50,49.80 537.16,49.79 537.81,49.79 538.46,49.78 539.11,49.78 539.76,49.77 540.42,49.77 541.07,49.77 541.72,49.76 542.37,49.76 543.03,49.75 543.68,49.75 544.33,49.75 544.98,49.74 545.63,49.74 546.29,49.73 546.94,49.73 547.59,49.73 548.24,49.72 548.90,49.72 549.55,49.72 550.20,49.71 550.85,49.71 551.50,49.71 552.16,49.70 552.81,49.70 553.46,49.70 554.11,49.70 554.77,49.69 555.42,49.69 556.07,49.69 556.72,49.68 557.37,49.68 558.03,49.68 558.68,49.68 559.33,49.67 559.98,49.67 560.64,49.67 561.29,49.66 561.94,49.66 562.59,49.66 563.24,49.66 563.90,49.65 564.55,49.65 565.20,49.65 565.85,49.65 566.51,49.65 567.16,49.64 567.81,49.64 568.46,49.64 569.11,49.64 569.77,49.63 570.42,49.63 571.07,49.63 571.72,49.63 572.38,49.63 573.03,49.62 573.68,49.62 574.33,49.62 574.98,49.62 575.64,49.62 576.29,49.62 576.94,49.61 577.59,49.61 578.25,49.61 578.90,49.61 579.55,49.61 580.20,49.61 580.85,49.60 581.51,49.60 582.16,49.60 582.81,49.60 583.46,49.60 584.12,49.60 584.77,49.59 585.42,49.59 586.07,49.59 586.72,49.59 587.38,49.59 588.03,49.59 588.68,49.59 589.33,49.59 589.98,49.58 590.64,49.58 591.29,49.58 591.94,49.58 592.59,49.58 593.25,49.58 593.90,49.58 594.55,49.58 595.20,49.57 595.85,49.57 596.51,49.57 597.16,49.57 597.81,49.57 598.46,49.57 599.12,49.57 599.77,49.57 600.42,49.57 601.07,49.56 601.72,49.56 602.38,49.56 603.03,49.56 603.68,49.56 604.33,49.56 604.99,49.56 605.64,49.56 606.29,49.56 606.94,49.56 607.59,49.56 608.25,49.55 608.90,49.55 609.55,49.55 610.20,49.55 610.86,49.55 611.51,49.55 612.16,49.55 612.81,49.55 613.46,49.55 614.12,49.55 614.77,49.55 615.42,49.55 616.07,49.55 616.73,49.54 617.38,49.54 618.03,49.54 618.68,49.54 619.33,49.54 619.99,49.54 620.64,49.54 621.29,49.54 621.94,49.54 622.60,49.54 623.25,49.54 623.90,49.54 624.55,49.54 625.20,49.54 625.86,49.54 626.51,49.54 627.16,49.53 627.81,49.53 628.47,49.53 629.12,49.53 629.77,49.53 630.42,49.53 631.07,49.53 631.73,49.53 632.38,49.53 633.03,49.53 633.68,49.53 634.34,49.53 634.99,49.53 635.64,49.53 636.29,49.53 636.94,49.53 637.60,49.53 638.25,49.53 638.90,49.53 639.55,49.53 640.21,49.53 640.86,49.53 641.51,49.52 642.16,49.52 642.81,49.52 643.47,49.52 644.12,49.52 644.77,49.52 645.42,49.52 646.08,49.52 646.73,49.52 647.38,49.52 648.03,49.52 648.68,49.52 649.34,49.52 649.99,49.52 650.64,49.52 651.29,49.52 651.94,49.52 652.60,49.52 653.25,49.52 653.90,49.52 654.55,49.52 655.21,49.52 655.86,49.52 656.51,49.52 657.16,49.52 657.81,49.52 658.47,49.52 659.12,49.52 659.77,49.52 660.42,49.52 661.08,49.52 661.73,49.52 662.38,49.52 663.03,49.51 663.68,49.51 664.34,49.51 664.99,49.51 665.64,49.51 666.29,49.51 666.95,49.51 667.60,49.51 668.25,49.51 668.90,49.51 669.55,49.51 670.21,49.51 670.86,49.51 671.51,49.51 672.16,49.51 672.82,49.51 673.47,49.51 674.12,49.51 674.77,49.51 675.42,49.51 676.08,49.51 676.73,49.51 677.38,49.51 678.03,49.51 678.69,49.51 679.34,49.51 679.99,49.51 680.64,49.51 681.29,49.51 681.95,49.51 682.60,49.51 683.25,49.51 683.90,49.51 684.56,49.51 685.21,49.51 685.86,49.51 686.51,49.51 687.16,49.51 687.82,49.51 688.47,49.51 689.12,49.51 689.77,49.51 690.43,49.51 691.08,49.51 691.73,49.51 692.38,49.51 693.03,49.51 693.69,49.51 694.34,49.51 694.99,49.51 695.64,49.51 696.30,49.51 696.95,49.51 697.60,49.51 698.25,49.51 698.90,49.51 699.56,49.51 700.21,49.51 700.86,49.51 701.51,49.51 702.17,49.51 702.82,49.51 703.47,49.51 704.12,49.51 704.77,49.51 705.43,49.51 706.08,49.51 706.73,49.51 707.38,49.51 708.04,49.51 708.69,49.51 709.34,49.51 709.99,49.50 710.64,49.50 711.30,49.50 711.95,49.50 712.60,49.50 713.25,49.50 713.90,49.50 714.56,49.50 715.21,49.50 715.86,49.50 716.51,49.50 717.17,49.50 717.82,49.50 718.47,49.50 719.12,49.50 719.77,49.50 720.43,49.50 721.08,49.50 721.73,49.50 722.38,49.50 723.04,49.50 723.69,49.50 724.34,49.50 724.99,49.50 725.64,49.50 726.30,49.50 726.95,49.50 727.60,49.50 728.25,49.50 728.91,49.50 729.56,49.50 730.21,49.50 730.86,49.50 731.51,49.50 732.17,49.50 732.82,49.50 733.47,49.50 734.12,49.50 734.78,49.50 735.43,49.50 736.08,49.50 736.73,49.50 737.38,49.50 738.04,49.50 738.69,49.50 739.34,49.50 739.99,49.50 740.65,49.50 741.30,49.50 741.95,49.50 742.60,49.50 743.25,49.50 743.91,49.50 744.56,49.50 745.21,49.50 745.86,49.50 746.52,49.50 747.17,49.50 747.82,49.50 748.47,49.50 749.12,49.50 749.78,49.50 750.43,49.50 751.08,49.50 751.73,49.50 752.39,49.50 753.04,49.50 753.69,49.50 754.34,49.50 754.99,49.50 755.65,49.50 756.30,49.50 756.95,49.50 757.60,49.50 758.26,49.50 758.91,49.50 759.56,49.50 760.21,49.50 760.86,49.50 761.52,49.50 762.17,49.50 762.82,49.50 763.47,49.50 764.13,49.50 764.78,49.50 765.43,49.50 766.08,49.50 766.73,49.50 767.39,49.50 768.04,49.50 768.69,49.50 769.34,49.50 769.99,49.50 770.65,49.50 771.30,49.50 771.95,49.50 772.60,49.50 773.26,49.50 773.91,49.50 774.56,49.50 775.21,49.50 775.86,49.50 776.52,49.50 777.17,49.50 777.82,49.50 778.47,49.50 779.13,49.50 779.78,49.50 780.43,49.50 781.08,49.50 781.73,49.50 782.39,49.50 783.04,49.50 783.69,49.50 784.34,49.50 785.00,49.50 785.65,49.50 786.30,49.50 786.95,49.50 787.60,49.50 788.26,49.50 788.91,49.50 789.56,49.50 790.21,49.50 790.87,49.50 791.52,49.50 792.17,49.50 792.82,49.50 793.47,49.50 794.13,49.50 794.78,49.50 795.43,49.50 796.08,49.50 796.74,49.50 797.39,49.50 798.04,49.50 798.69,49.50 799.34,49.50 800.00,49.50 800.65,49.50 801.30,49.50 801.95,49.50 802.61,49.50 803.26,49.50 803.91,49.50 804.56,49.50 805.21,49.50 805.87,49.50 806.52,49.50 807.17,49.50 807.82,49.50 808.48,49.50 809.13,49.50 809.78,49.50 810.43,49.50 811.08,49.50 811.74,49.50 812.39,49.50 813.04,49.50 813.69,49.50 814.35,49.50 815.00,49.50 815.65,49.50 816.30,49.50 816.95,49.50 817.61,49.50 818.26,49.50 818.91,49.50 819.56,49.50 820.22,49.50 820.87,49.50 821.52,49.50 822.17,49.50 822.82,49.50 823.48,49.50 824.13,49.50 824.78,49.50 825.43,49.50 826.09,49.50 826.74,49.50 827.39,49.50 828.04,49.50 828.69,49.50 829.35,49.50 830.00,49.50 830.65,49.50 831.30,49.50 831.95,49.50 832.61,49.50 833.26,49.50 833.91,49.50 834.56,49.50 835.22,49.50 835.87,49.50 836.52,49.50 837.17,49.50 837.82,49.50 838.48,49.50 839.13,49.50 839.78,49.50 840.43,49.50 841.09,49.50 841.74,49.50 842.39,49.50 843.04,49.50 843.69,49.50 844.35,49.50 845.00,49.50 845.65,49.50 846.30,49.50 846.96,49.50 847.61,49.50 848.26,49.50 848.91,49.50 849.56,49.50 850.22,49.50 850.87,49.50 851.52,49.50 852.17,49.50 852.83,49.50 853.48,49.50 854.13,49.50 854.78,49.50 855.43,49.50 856.09,49.50 856.74,49.50 857.39,49.50 858.04,49.50 858.70,49.50 859.35,49.50 860.00,49.50" stroke="#00ff00" stroke-width="1" fill="none" stroke-dasharray="3,3" shape-rendering="crispEdges"/>
<path d="M78.00,51.90 78.65,51.94 79.30,51.97 79.96,52.01 80.61,52.05 81.26,52.09 81.91,52.13 82.57,52.17 83.22,52.21 83.87,52.25 84.52,52.30 85.17,52.34 85.83,52.38 86.48,52.43 87.13,52.47 87.78,52.52 88.44,52.57 89.09,52.61 89.74,52.66 90.39,52.71 91.04,52.76 91.70,52.81 92.35,52.86 93.00,52.91 93.65,52.97 94.31,53.02 94.96,53.08 95.61,53.13 96.26,53.19 96.91,53.24 97.57,53.30 98.22,53.36 98.87,53.42 99.52,53.48 100.18,53.54 100.83,53.61 101.48,53.67 102.13,53.73 102.78,53.80 103.44,53.87 104.09,53.93 104.74,54.00 105.39,54.07 106.05,54.14 106.70,54.21 107.35,54.29 108.00,54.36 108.65,54.44 109.31,54.51 109.96,54.59 110.61,54.67 111.26,54.75 111.91,54.83 112.57,54.91 113.22,54.99 113.87,55.08 114.52,55.17 115.18,55.25 115.83,55.34 116.48,55.43 117.13,55.52 117.78,55.62 118.44,55.71 119.09,55.81 119.74,55.91 120.39,56.00 121.05,56.10 121.70,56.21 122.35,56.31 123.00,56.42 123.65,56.52 124.31,56.63 124.96,56.74 125.61,56.85 126.26,56.97 126.92,57.08 127.57,57.20 128.22,57.32 128.87,57.44 129.52,57.56 130.18,57.68 130.83,57.81 131.48,57.94 132.13,58.07 132.79,58.20 133.44,58.33 134.09,58.47 134.74,58.61 135.39,58.75 136.05,58.89 136.70,59.04 137.35,59.18 138.00,59.33 138.66,59.48 139.31,59.64 139.96,59.79 140.61,59.95 141.26,60.11 141.92,60.28 142.57,60.44 143.22,60.61 143.87,60.78 144.53,60.95 145.18,61.13 145.83,61.31 146.48,61.49 147.13,61.67 147.79,61.86 148.44,62.05 149.09,62.24 149.74,62.44 150.40,62.64 151.05,62.84 151.70,63.04 152.35,63.25 153.00,63.46 153.66,63.67 154.31,63.89 154.96,64.11 155.61,64.33 156.27,64.56 156.92,64.79 157.57,65.02 158.22,65.26 158.87,65.50 159.53,65.75 160.18,65.99 160.83,66.24 161.48,66.50 162.14,66.76 162.79,67.02 163.44,67.29 164.09,67.56 164.74,67.83 165.40,68.11 166.05,68.39 166.70,68.68 167.35,68.97 168.01,69.26 168.66,69.56 169.31,69.86 169.96,70.17 170.61,70.48 171.27,70.80 171.92,71.12 172.57,71.45 173.22,71.78 173.87,72.11 174.53,72.45 175.18,72.79 175.83,73.14 176.48,73.50 177.14,73.86 177.79,74.22 178.44,74.59 179.09,74.96 179.74,75.34 180.40,75.72 181.05,76.11 181.70,76.51 182.35,76.91 183.01,77.31 183.66,77.72 184.31,78.14 184.96,78.56 185.61,78.99 186.27,79.42 186.92,79.86 187.57,80.30 188.22,80.75 188.88,81.21 189.53,81.67 190.18,82.14 190.83,82.61 191.48,83.09 192.14,83.57 192.79,84.06 193.44,84.56 194.09,85.06 194.75,85.57 195.40,86.08 196.05,86.60 196.70,87.13 197.35,87.66 198.01,88.20 198.66,88.74 199.31,89.29 199.96,89.84 200.62,90.41 201.27,90.97 201.92,91.55 202.57,92.13 203.22,92.71 203.88,93.30 204.53,93.90 205.18,94.50 205.83,95.11 206.49,95.73 207.14,96.34 207.79,96.97 208.44,97.60 209.09,98.24 209.75,98.88 210.40,99.52 211.05,100.17 211.70,100.83 212.36,101.49 213.01,102.15 213.66,102.82 214.31,103.50 214.96,104.18 215.62,104.86 216.27,105.54 216.92,106.23 217.57,106.93 218.23,107.62 218.88,108.32 219.53,109.03 220.18,109.73 220.83,110.44 221.49,111.15 222.14,111.86 222.79,112.57 223.44,113.28 224.10,114.00 224.75,114.71 225.40,115.43 226.05,116.15 226.70,116.86 227.36,117.58 228.01,118.29 228.66,119.00 229.31,119.71 229.96,120.42 230.62,121.13 231.27,121.83 231.92,122.53 232.57,123.22 233.23,123.91 233.88,124.60 234.53,125.28 235.18,125.95 235.83,126.62 236.49,127.28 237.14,127.94 237.79,128.58 238.44,129.22 239.10,129.85 239.75,130.47 240.40,131.08 241.05,131.68 241.70,132.27 242.36,132.85 243.01,133.42 243.66,133.97 244.31,134.51 244.97,135.04 245.62,135.56 246.27,136.06 246.92,136.54 247.57,137.01 248.23,137.47 248.88,137.90 249.53,138.33 250.18,138.73 250.84,139.12 251.49,139.48 252.14,139.83 252.79,140.17 253.44,140.48 254.10,140.77 254.75,141.04 255.40,141.30 256.05,141.53 256.71,141.74 257.36,141.93 258.01,142.10 258.66,142.25 259.31,142.38 259.97,142.48 260.62,142.57 261.27,142.63 261.92,142.67 262.58,142.69 263.23,142.68 263.88,142.66 264.53,142.61 265.18,142.54 265.84,142.45 266.49,142.33 267.14,142.20 267.79,142.04 268.45,141.87 269.10,141.67 269.75,141.45 270.40,141.21 271.05,140.95 271.71,140.67 272.36,140.37 273.01,140.05 273.66,139.71 274.32,139.35 274.97,138.98 275.62,138.59 276.27,138.18 276.92,137.75 277.58,137.30 278.23,136.84 278.88,136.37 279.53,135.88 280.19,135.37 280.84,134.85 281.49,134.32 282.14,133.77 282.79,133.22 283.45,132.64 284.10,132.06 284.75,131.47 285.40,130.86 286.06,130.25 286.71,129.63 287.36,128.99 288.01,128.35 288.66,127.70 289.32,127.04 289.97,126.38 290.62,125.71 291.27,125.03 291.92,124.35 292.58,123.66 293.23,122.97 293.88,122.27 294.53,121.57 295.19,120.87 295.84,120.16 296.49,119.46 297.14,118.74 297.79,118.03 298.45,117.32 299.10,116.60 299.75,115.89 300.40,115.17 301.06,114.46 301.71,113.74 302.36,113.03 303.01,112.31 303.66,111.60 304.32,110.89 304.97,110.18 305.62,109.48 306.27,108.77 306.93,108.07 307.58,107.37 308.23,106.68 308.88,105.98 309.53,105.30 310.19,104.61 310.84,103.93 311.49,103.25 312.14,102.58 312.80,101.91 313.45,101.25 314.10,100.59 314.75,99.94 315.40,99.29 316.06,98.64 316.71,98.01 317.36,97.37 318.01,96.74 318.67,96.12 319.32,95.50 319.97,94.89 320.62,94.28 321.27,93.68 321.93,93.09 322.58,92.50 323.23,91.92 323.88,91.34 324.54,90.77 325.19,90.20 325.84,89.64 326.49,89.09 327.14,88.54 327.80,88.00 328.45,87.46 329.10,86.94 329.75,86.41 330.41,85.89 331.06,85.38 331.71,84.88 332.36,84.38 333.01,83.88 333.67,83.39 334.32,82.91 334.97,82.44 335.62,81.97 336.28,81.50 336.93,81.04 337.58,80.59 338.23,80.14 338.88,79.70 339.54,79.26 340.19,78.83 340.84,78.41 341.49,77.99 342.15,77.57 342.80,77.17 343.45,76.76 344.10,76.37 344.75,75.97 345.41,75.59 346.06,75.20 346.71,74.83 347.36,74.45 348.02,74.09 348.67,73.73 349.32,73.37 349.97,73.02 350.62,72.67 351.28,72.33 351.93,71.99 352.58,71.66 353.23,71.33 353.88,71.00 354.54,70.69 355.19,70.37 355.84,70.06 356.49,69.75 357.15,69.45 357.80,69.16 358.45,68.86 359.10,68.57 359.75,68.29 360.41,68.01 361.06,67.73 361.71,67.46 362.36,67.19 363.02,66.92 363.67,66.66 364.32,66.41 364.97,66.15 365.62,65.90 366.28,65.66 366.93,65.41 367.58,65.17 368.23,64.94 368.89,64.71 369.54,64.48 370.19,64.25 370.84,64.03 371.49,63.81 372.15,63.60 372.80,63.38 373.45,63.17 374.10,62.97 374.76,62.76 375.41,62.56 376.06,62.37 376.71,62.17 377.36,61.98 378.02,61.79 378.67,61.61 379.32,61.42 379.97,61.24 380.63,61.07 381.28,60.89 381.93,60.72 382.58,60.55 383.23,60.38 383.89,60.22 384.54,60.05 385.19,59.89 385.84,59.74 386.50,59.58 387.15,59.43 387.80,59.28 388.45,59.13 389.10,58.98 389.76,58.84 390.41,58.70 391.06,58.56 391.71,58.42 392.37,58.29 393.02,58.15 393.67,58.02 394.32,57.89 394.97,57.76 395.63,57.64 396.28,57.52 396.93,57.39 397.58,57.27 398.24,57.16 398.89,57.04 399.54,56.92 400.19,56.81 400.84,56.70 401.50,56.59 402.15,56.48 402.80,56.38 403.45,56.27 404.11,56.17 404.76,56.07 405.41,55.97 406.06,55.87 406.71,55.77 407.37,55.68 408.02,55.58 408.67,55.49 409.32,55.40 409.97,55.31 410.63,55.22 411.28,55.13 411.93,55.05 412.58,54.96 413.24,54.88 413.89,54.80 414.54,54.72 415.19,54.64 415.84,54.56 416.50,54.48 417.15,54.41 417.80,54.33 418.45,54.26 419.11,54.19 419.76,54.12 420.41,54.05 421.06,53.98 421.71,53.91 422.37,53.84 423.02,53.78 423.67,53.71 424.32,53.65 424.98,53.58 425.63,53.52 426.28,53.46 426.93,53.40 427.58,53.34 428.24,53.28 428.89,53.22 429.54,53.17 430.19,53.11 430.85,53.06 431.50,53.00 432.15,52.95 432.80,52.90 433.45,52.84 434.11,52.79 434.76,52.74 435.41,52.69 436.06,52.64 436.72,52.60 437.37,52.55 438.02,52.50 438.67,52.46 439.32,52.41 439.98,52.37 440.63,52.32 441.28,52.28 441.93,52.24 442.59,52.20 443.24,52.16 443.89,52.12 444.54,52.08 445.19,52.04 445.85,52.00 446.50,51.96 447.15,51.92 447.80,51.89 448.46,51.85 449.11,51.81 449.76,51.78 450.41,51.74 451.06,51.71 451.72,51.68 452.37,51.64 453.02,51.61 453.67,51.58 454.33,51.55 454.98,51.51 455.63,51.48 456.28,51.45 456.93,51.42 457.59,51.39 458.24,51.37 458.89,51.34 459.54,51.31 460.20,51.28 460.85,51.25 461.50,51.23 462.15,51.20 462.80,51.18 463.46,51.15 464.11,51.12 464.76,51.10 465.41,51.08 466.07,51.05 466.72,51.03 467.37,51.00 468.02,50.98 468.67,50.96 469.33,50.94 469.98,50.91 470.63,50.89 471.28,50.87 471.93,50.85 472.59,50.83 473.24,50.81 473.89,50.79 474.54,50.77 475.20,50.75 475.85,50.73 476.50,50.71 477.15,50.69 477.80,50.68 478.46,50.66 479.11,50.64 479.76,50.62 480.41,50.61 481.07,50.59 481.72,50.57 482.37,50.56 483.02,50.54 483.67,50.52 484.33,50.51 484.98,50.49 485.63,50.48 486.28,50.46 486.94,50.45 487.59,50.43 488.24,50.42 488.89,50.41 489.54,50.39 490.20,50.38 490.85,50.37 491.50,50.35 492.15,50.34 492.81,50.33 493.46,50.31 494.11,50.30 494.76,50.29 495.41,50.28 496.07,50.27 496.72,50.25 497.37,50.24 498.02,50.23 498.68,50.22 499.33,50.21 499.98,50.20 500.63,50.19 501.28,50.18 501.94,50.17 502.59,50.16 503.24,50.15 503.89,50.14 504.55,50.13 505.20,50.12 505.85,50.11 506.50,50.10 507.15,50.09 507.81,50.08 508.46,50.07 509.11,50.06 509.76,50.05 510.42,50.05 511.07,50.04 511.72,50.03 512.37,50.02 513.02,50.01 513.68,50.01 514.33,50.00 514.98,49.99 515.63,49.98 516.29,49.98 516.94,49.97 517.59,49.96 518.24,49.95 518.89,49.95 519.55,49.94 520.20,49.93 520.85,49.93 521.50,49.92 522.16,49.91 522.81,49.91 523.46,49.90 524.11,49.90 524.76,49.89 525.42,49.88 526.07,49.88 526.72,49.87 527.37,49.87 528.03,49.86 528.68,49.86 529.33,49.85 529.98,49.84 530.63,49.84 531.29,49.83 531.94,49.83 532.59,49.82 533.24,49.82 533.89,49.81 534.55,49.81 535.20,49.80 535.85,49.80 536.50,49.80 537.16,49.79 537.81,49.79 538.46,49.78 539.11,49.78 539.76,49.77 540.42,49.77 541.07,49.77 541.72,49.76 542.37,49.76 543.03,49.75 543.68,49.75 544.33,49.75 544.98,49.74 545.63,49.74 546.29,49.73 546.94,49.73 547.59,49.73 548.24,49.72 548.90,49.72 549.55,49.72 550.20,49.71 550.85,49.71 551.50,49.71 552.16,49.70 552.81,49.70 553.46,49.70 554.11,49.70 554.77,49.69 555.42,49.69 556.07,49.69 556.72,49.68 557.37,49.68 558.03,49.68 558.68,49.68 559.33,49.67 559.98,49.67 560.64,49.67 561.29,49.66 561.94,49.66 562.59,49.66 563.24,49.66 563.90,49.65 564.55,49.65 565.20,49.65 565.85,49.65 566.51,49.65 567.16,49.64 567.81,49.64 568.46,49.64 569.11,49.64 569.77,49.63 570.42,49.63 571.07,49.63 571.72,49.63 572.38,49.63 573.03,49.62 573.68,49.62 574.33,49.62 574.98,49.62 575.64,49.62 576.29,49.62 576.94,49.61 577.59,49.61 578.25,49.61 578.90,49.61 579.55,49.61 580.20,49.61 580.85,49.60 581.51,49.60 582.16,49.60 582.81,49.60 583.46,49.60 584.12,49.60 584.77,49.59 585.42,49.59 586.07,49.59 586.72,49.59 587.38,49.59 588.03,49.59 588.68,49.59 589.33,49.59 589.98,49.58 590.64,49.58 591.29,49.58 591.94,49.58 592.59,49.58 593.25,49.58 593.90,49.58 594.55,49.58 595.20,49.57 595.85,49.57 596.51,49.57 597.16,49.57 597.81,49.57 598.46,49.57 599.12,49.57 599.77,49.57 600.42,49.57 601.07,49.56 601.72,49.56 602.38,49.56 603.03,49.56 603.68,49.56 604.33,49.56 604.99,49.56 605.64,49.56 606.29,49.56 606.94,49.56 607.59,49.56 608.25,49.55 608.90,49.55 609.55,49.55 610.20,49.55 610.86,49.55 611.51,49.55 612.16,49.55 612.81,49.55 613.46,49.55 614.12,49.55 614.77,49.55 615.42,49.55 616.07,49.55 616.73,49.54 617.38,49.54 618.03,49.54 618.68,49.54 619.33,49.54 619.99,49.54 620.64,49.54 621.29,49.54 621.94,49.54 622.60,49.54 623.25,49.54 623.90,49.54 624.55,49.54 625.20,49.54 625.86,49.54 626.51,49.54 627.16,49.53 627.81,49.53 628.47,49.53 629.12,49.53 629.77,49.53 630.42,49.53 631.07,49.53 631.73,49.53 632.38,49.53 633.03,49.53 633.68,49.53 634.34,49.53 634.99,49.53 635.64,49.53 636.29,49.53 636.94,49.53 637.60,49.53 638.25,49.53 638.90,49.53 639.55,49.53 640.21,49.53 640.86,49.53 641.51,49.52 642.16,49.52 642.81,49.52 643.47,49.52 644.12,49.52 644.77,49.52 645.42,49.52 646.08,49.52 646.73,49.52 647.38,49.52 648.03,49.52 648.68,49.52 649.34,49.52 649.99,49.52 650.64,49.52 651.29,49.52 651.94,49.52 652.60,49.52 653.25,49.52 653.90,49.52 654.55,49.52 655.21,49.52 655.86,49.52 656.51,49.52 657.16,49.52 657.81,49.52 658.47,49.52 659.12,49.52 659.77,49.52 660.42,49.52 661.08,49.52 661.73,49.52 662.38,49.52 663.03,49.51 663.68,49.51 664.34,49.51 664.99,49.51 665.64,49.51 666.29,49.51 666.95,49.51 667.60,49.51 668.25,49.51 668.90,49.51 669.55,49.51 670.21,49.51 670.86,49.51 671.51,49.51 672.16,49.51 672.82,49.51 673.47,49.51 674.12,49.51 674.77,49.51 675.42,49.51 676.08,49.51 676.73,49.51 677.38,49.51 678.03,49.51 678.69,49.51 679.34,49.51 679.99,49.51 680.64,49.51 681.29,49.51 681.95,49.51 682.60,49.51 683.25,49.51 683.90,49.51 684.56,49.51 685.21,49.51 685.86,49.51 686.51,49.51 687.16,49.51 687.82,49.51 688.47,49.51 689.12,49.51 689.77,49.51 690.43,49.51 691.08,49.51 691.73,49.51 692.38,49.51 693.03,49.51 693.69,49.51 694.34,49.51 694.99,49.51 695.64,49.51 696.30,49.51 696.95,49.51 697.60,49.51 698.25,49.51 698.90,49.51 699.56,49.51 700.21,49.51 700.86,49.51 701.51,49.51 702.17,49.51 702.82,49.51 703.47,49.51 704.12,49.51 704.77,49.51 705.43,49.51 706.08,49.51 706.73,49.51 707.38,49.51 708.04,49.51 708.69,49.51 709.34,49.51 709.99,49.50 710.64,49.50 711.30,49.50 711.95,49.50 712.60,49.50 713.25,49.50 713.90,49.50 714.56,49.50 715.21,49.50 715.86,49.50 716.51,49.50 717.17,49.50 717.82,49.50 718.47,49.50 719.12,49.50 719.77,49.50 720.43,49.50 721.08,49.50 721.73,49.50 722.38,49.50 723.04,49.50 723.69,49.50 724.34,49.50 724.99,49.50 725.64,49.50 726.30,49.50 726.95,49.50 727.60,49.50 728.25,49.50 728.91,49.50 729.56,49.50 730.21,49.50 730.86,49.50 731.51,49.50 732.17,49.50 732.82,49.50 733.47,49.50 734.12,49.50 734.78,49.50 735.43,49.50 736.08,49.50 736.73,49.50 737.38,49.50 738.04,49.50 738.69,49.50 739.34,49.50 739.99,49.50 740.65,49.50 741.30,49.50 741.95,49.50 742.60,49.50 743.25,49.50 743.91,49.50 744.56,49.50 745.21,49.50 745.86,49.50 746.52,49.50 747.17,49.50 747.82,49.50 748.47,49.50 749.12,49.50 749.78,49.50 750.43,49.50 751.08,49.50 751.73,49.50 752.39,49.50 753.04,49.50 753.69,49.50 754.34,49.50 754.99,49.50 755.65,49.50 756.30,49.50 756.95,49.50 757.60,49.50 758.26,49.50 758.91,49.50 759.56,49.50 760.21,49.50 760.86,49.50 761.52,49.50 762.17,49.50 762.82,49.50 763.47,49.50 764.13,49.50 764.78,49.50 765.43,49.50 766.08,49.50 766.73,49.50 767.39,49.50 768.04,49.50 768.69,49.50 769.34,49.50 769.99,49.50 770.65,49.50 771.30,49.50 771.95,49.50 772.60,49.50 773.26,49.50 773.91,49.50 774.56,49.50 775.21,49.50 775.86,49.50 776.52,49.50 777.17,49.50 777.82,49.50 778.47,49.50 779.13,49.50 779.78,49.50 780.43,49.50 781.08,49.50 781.73,49.50 782.39,49.50 783.04,49.50 783.69,49.50 784.34,49.50 785.00,49.50 785.65,49.50 786.30,49.50 786.95,49.50 787.60,49.50 788.26,49.50 788.91,49.50 789.56,49.50 790.21,49.50 790.87,49.50 791.52,49.50 792.17,49.50 792.82,49.50 793.47,49.50 794.13,49.50 794.78,49.50 795.43,49.50 796.08,49.50 796.74,49.50 797.39,49.50 798.04,49.50 798.69,49.50 799.34,49.50 800.00,49.50 800.65,49.50 801.30,49.50 801.95,49.50 802.61,49.50 803.26,49.50 803.91,49.50 804.56,49.50 805.21,49.50 805.87,49.50 806.52,49.50 807.17,49.50 807.82,49.50 808.48,49.50 809.13,49.50 809.78,49.50 810.43,49.50 811.08,49.50 811.74,49.50 812.39,49.50 813.04,49.50 813.69,49.50 814.35,49.50 815.00,49.50 815.65,49.50 816.30,49.50 816.95,49.50 817.61,49.50 818.26,49.50 818.91,49.50 819.56,49.50 820.22,49.50 820.87,49.50 821.52,49.50 822.17,49.50 822.82,49.50 823.48,49.50 824.13,49.50 824.78,49.50 825.43,49.50 826.09,49.50 826.74,49.50 827.39,49.50 828.04,49.50 828.69,49.50 829.35,49.50 830.00,49.50 830.65,49.50 831.30,49.50 831.95,49.50 832.61,49.50 833.26,49.50 833.91,49.50 834.56,49.50 835.22,49.50 835.87,49.50 836.52,49.50 837.17,49.50 837.82,49.50 838.48,49.50 839.13,49.50 839.78,49.50 840.43,49.50 841.09,49.50 841.74,49.50 842.39,49.50 843.04,49.50 843.69,49.50 844.35,49.50 845.00,49.50 845.65,49.50 846.30,49.50 846.96,49.50 847.61,49.50 848.26,49.50 848.91,49.50 849.56,49.50 850.22,49.50 850.87,49.50 851.52,49.50 852.17,49.50 852.83,49.50 853.48,49.50 854.13,49.50 854.78,49.50 855.43,49.50 856.09,49.50 856.74,49.50 857.39,49.50 858.04,49.50 858.70,49.50 859.35,49.50 860.00,49.50" stroke="#00ff00" stroke-width="1" fill="none" stroke-dasharray="3,3" shape-rendering="crispEdges" transform="translate(-1,0)"/>
<path d="M78.00,174.36 78.65,174.36 79.30,174.36 79.96,174.36 80.61,174.36 81.26,174.36 81.91,174.36 82.57,174.36 83.22,174.36 83.87,174.36 84.52,174.36 85.17,174.36 85.83,174.36 86.48,174.36 87.13,174.36 87.78,174.36 88.44,174.36 89.09,174.36 89.74,174.36 90.39,174.36 91.04,174.36 91.70,174.36 92.35,174.36 93.00,174.36 93.65,174.36 94.31,174.36 94.96,174.36 95.61,174.36 96.26,174.36 96.91,174.36 97.57,174.36 98.22,174.36 98.87,174.36 99.52,174.36 100.18,174.36 100.83,174.36 101.48,174.36 102.13,174.36 102.78,174.36 103.44,174.36 104.09,174.36 104.74,174.36 105.39,174.36 106.05,174.36 106.70,174.36 107.35,174.36 108.00,174.36 108.65,174.36 109.31,174.36 109.96,174.36 110.61,174.36 111.26,174.36 111.91,174.36 112.57,174.36 113.22,174.36 113.87,174.36 114.52,174.36 115.18,174.36 115.83,174.36 116.48,174.36 117.13,174.36 117.78,174.36 118.44,174.36 119.09,174.36 119.74,174.36 120.39,174.37 121.05,174.37 121.70,174.37 122.35,174.37 123.00,174.37 123.65,174.37 124.31,174.37 124.96,174.37 125.61,174.37 126.26,174.37 126.92,174.37 127.57,174.37 128.22,174.37 128.87,174.37 129.52,174.37 130.18,174.37 130.83,174.37 131.48,174.37 132.13,174.37 132.79,174.37 133.44,174.37 134.09,174.37 134.74,174.37 135.39,174.37 136.05,174.38 136.70,174.38 137.35,174.38 138.00,174.38 138.66,174.38 139.31,174.38 139.96,174.38 140.61,174.38 141.26,174.38 141.92,174.38 142.57,174.38 143.22,174.38 143.87,174.38 144.53,174.38 145.18,174.39 145.83,174.39 146.48,174.39 147.13,174.39 147.79,174.39 148.44,174.39 149.09,174.39 149.74,174.39 150.40,174.39 151.05,174.39 151.70,174.40 152.35,174.40 153.00,174.40 153.66,174.40 154.31,174.40 154.96,174.40 155.61,174.40 156.27,174.41 156.92,174.41 157.57,174.41 158.22,174.41 158.87,174.41 159.53,174.41 160.18,174.42 160.83,174.42 161.48,174.42 162.14,174.42 162.79,174.42 163.44,174.43 164.09,174.43 164.74,174.43 165.40,174.43 166.05,174.43 166.70,174.44 167.35,174.44 168.01,174.44 168.66,174.44 169.31,174.45 169.96,174.45 170.61,174.45 171.27,174.46 171.92,174.46 172.57,174.46 173.22,174.47 173.87,174.47 174.53,174.47 175.18,174.48 175.83,174.48 176.48,174.48 177.14,174.49 177.79,174.49 178.44,174.50 179.09,174.50 179.74,174.50 180.40,174.51 181.05,174.51 181.70,174.52 182.35,174.52 183.01,174.53 183.66,174.53 184.31,174.54 184.96,174.55 185.61,174.55 186.27,174.56 186.92,174.56 187.57,174.57 188.22,174.58 188.88,174.58 189.53,174.59 190.18,174.60 190.83,174.61 191.48,174.61 192.14,174.62 192.79,174.63 193.44,174.64 194.09,174.65 194.75,174.65 195.40,174.66 196.05,174.67 196.70,174.68 197.35,174.69 198.01,174.70 198.66,174.71 199.31,174.72 199.96,174.74 200.62,174.75 201.27,174.76 201.92,174.77 202.57,174.78 203.22,174.80 203.88,174.81 204.53,174.82 205.18,174.84 205.83,174.85 206.49,174.87 207.14,174.88 207.79,174.90 208.44,174.92 209.09,174.93 209.75,174.95 210.40,174.97 211.05,174.99 211.70,175.00 212.36,175.02 213.01,175.04 213.66,175.06 214.31,175.09 214.96,175.11 215.62,175.13 216.27,175.15 216.92,175.18 217.57,175.20 218.23,175.23 218.88,175.25 219.53,175.28 220.18,175.30 220.83,175.33 221.49,175.36 222.14,175.39 222.79,175.42 223.44,175.45 224.10,175.48 224.75,175.51 225.40,175.55 226.05,175.58 226.70,175.62 227.36,175.65 228.01,175.69 228.66,175.73 229.31,175.77 229.96,175.81 230.62,175.85 231.27,175.89 231.92,175.93 232.57,175.98 233.23,176.02 233.88,176.07 234.53,176.12 235.18,176.17 235.83,176.22 236.49,176.27 237.14,176.32 237.79,176.37 238.44,176.43 239.10,176.48 239.75,176.54 240.40,176.60 241.05,176.66 241.70,176.72 242.36,176.78 243.01,176.85 243.66,176.91 244.31,176.98 244.97,177.05 245.62,177.12 246.27,177.19 246.92,177.26 247.57,177.34 248.23,177.42 248.88,177.49 249.53,177.57 250.18,177.65 250.84,177.74 251.49,177.82 252.14,177.91 252.79,177.99 253.44,178.08 254.10,178.17 254.75,178.27 255.40,178.36 256.05,178.46 256.71,178.55 257.36,178.65 258.01,178.75 258.66,178.86 259.31,178.96 259.97,179.07 260.62,179.17 261.27,179.28 261.92,179.39 262.58,179.51 263.23,179.62 263.88,179.74 264.53,179.86 265.18,179.98 265.84,180.10 266.49,180.22 267.14,180.35 267.79,180.48 268.45,180.60 269.10,180.73 269.75,180.87 270.40,181.00 271.05,181.14 271.71,181.27 272.36,181.41 273.01,181.55 273.66,181.69 274.32,181.84 274.97,181.98 275.62,182.13 276.27,182.28 276.92,182.43 277.58,182.58 278.23,182.73 278.88,182.89 279.53,183.04 280.19,183.20 280.84,183.36 281.49,183.52 282.14,183.68 282.79,183.85 283.45,184.01 284.10,184.18 284.75,184.35 285.40,184.51 286.06,184.68 286.71,184.86 287.36,185.03 288.01,185.20 288.66,185.38 289.32,185.55 289.97,185.73 290.62,185.91 291.27,186.09 291.92,186.27 292.58,186.45 293.23,186.64 293.88,186.82 294.53,187.01 295.19,187.19 295.84,187.38 296.49,187.57 297.14,187.76 297.79,187.95 298.45,188.14 299.10,188.33 299.75,188.53 300.40,188.72 301.06,188.91 301.71,189.11 302.36,189.31 303.01,189.50 303.66,189.70 304.32,189.90 304.97,190.10 305.62,190.30 306.27,190.50 306.93,190.70 307.58,190.91 308.23,191.11 308.88,191.31 309.53,191.52 310.19,191.72 310.84,191.93 311.49,192.13 312.14,192.34 312.80,192.55 313.45,192.76 314.10,192.96 314.75,193.17 315.40,193.38 316.06,193.59 316.71,193.80 317.36,194.01 318.01,194.22 318.67,194.44 319.32,194.65 319.97,194.86 320.62,195.07 321.27,195.29 321.93,195.50 322.58,195.71 323.23,195.93 323.88,196.14 324.54,196.36 325.19,196.57 325.84,196.79 326.49,197.00 327.14,197.22 327.80,197.44 328.45,197.65 329.10,197.87 329.75,198.09 330.41,198.31 331.06,198.53 331.71,198.74 332.36,198.96 333.01,199.18 333.67,199.40 334.32,199.62 334.97,199.84 335.62,200.06 336.28,200.28 336.93,200.50 337.58,200.72 338.23,200.94 338.88,201.16 339.54,201.38 340.19,201.60 340.84,201.82 341.49,202.04 342.15,202.26 342.80,202.49 343.45,202.71 344.10,202.93 344.75,203.15 345.41,203.37 346.06,203.60 346.71,203.82 347.36,204.04 348.02,204.26 348.67,204.49 349.32,204.71 349.97,204.93 350.62,205.15 351.28,205.38 351.93,205.60 352.58,205.82 353.23,206.05 353.88,206.27 354.54,206.49 355.19,206.72 355.84,206.94 356.49,207.16 357.15,207.39 357.80,207.61 358.45,207.84 359.10,208.06 359.75,208.28 360.41,208.51 361.06,208.73 361.71,208.96 362.36,209.18 363.02,209.41 363.67,209.63 364.32,209.85 364.97,210.08 365.62,210.30 366.28,210.53 366.93,210.75 367.58,210.98 368.23,211.20 368.89,211.43 369.54,211.65 370.19,211.87 370.84,212.10 371.49,212.32 372.15,212.55 372.80,212.77 373.45,213.00 374.10,213.22 374.76,213.45 375.41,213.67 376.06,213.90 376.71,214.12 377.36,214.35 378.02,214.57 378.67,214.80 379.32,215.02 379.97,215.25 380.63,215.47 381.28,215.69 381.93,215.92 382.58,216.14 383.23,216.37 383.89,216.59 384.54,216.82 385.19,217.04 385.84,217.27 386.50,217.49 387.15,217.72 387.80,217.94 388.45,218.16 389.10,218.39 389.76,218.61 390.41,218.84 391.06,219.06 391.71,219.28 392.37,219.51 393.02,219.73 393.67,219.96 394.32,220.18 394.97,220.40 395.63,220.63 396.28,220.85 396.93,221.08 397.58,221.30 398.24,221.52 398.89,221.75 399.54,221.97 400.19,222.19 400.84,222.42 401.50,222.64 402.15,222.86 402.80,223.08 403.45,223.31 404.11,223.53 404.76,223.75 405.41,223.97 406.06,224.20 406.71,224.42 407.37,224.64 408.02,224.86 408.67,225.08 409.32,225.31 409.97,225.53 410.63,225.75 411.28,225.97 411.93,226.19 412.58,226.41 413.24,226.63 413.89,226.85 414.54,227.07 415.19,227.29 415.84,227.51 416.50,227.73 417.15,227.95 417.80,228.17 418.45,228.39 419.11,228.61 419.76,228.83 420.41,229.05 421.06,229.26 421.71,229.48 422.37,229.70 423.02,229.92 423.67,230.13 424.32,230.35 424.98,230.57 425.63,230.78 426.28,231.00 426.93,231.21 427.58,231.43 428.24,231.64 428.89,231.86 429.54,232.07 430.19,232.29 430.85,232.50 431.50,232.71 432.15,232.93 432.80,233.14 433.45,233.35 434.11,233.56 434.76,233.77 435.41,233.98 436.06,234.19 436.72,234.40 437.37,234.61 438.02,234.82 438.67,235.03 439.32,235.23 439.98,235.44 440.63,235.65 441.28,235.85 441.93,236.06 442.59,236.26 443.24,236.47 443.89,236.67 444.54,236.87 445.19,237.07 445.85,237.28 446.50,237.48 447.15,237.68 447.80,237.87 448.46,238.07 449.11,238.27 449.76,238.47 450.41,238.66 451.06,238.86 451.72,239.05 452.37,239.25 453.02,239.44 453.67,239.63 454.33,239.82 454.98,240.01 455.63,240.20 456.28,240.39 456.93,240.57 457.59,240.76 458.24,240.94 458.89,241.13 459.54,241.31 460.20,241.49 460.85,241.67 461.50,241.85 462.15,242.03 462.80,242.21 463.46,242.38 464.11,242.56 464.76,242.73 465.41,242.90 466.07,243.07 466.72,243.24 467.37,243.41 468.02,243.58 468.67,243.74 469.33,243.90 469.98,244.07 470.63,244.23 471.28,244.39 471.93,244.55 472.59,244.70 473.24,244.86 473.89,245.01 474.54,245.16 475.20,245.31 475.85,245.46 476.50,245.61 477.15,245.76 477.80,245.90 478.46,246.04 479.11,246.18 479.76,246.32 480.41,246.46 481.07,246.60 481.72,246.73 482.37,246.86 483.02,246.99 483.67,247.12 484.33,247.25 484.98,247.38 485.63,247.50 486.28,247.62 486.94,247.74 487.59,247.86 488.24,247.98 488.89,248.09 489.54,248.21 490.20,248.32 490.85,248.43 491.50,248.54 492.15,248.64 492.81,248.75 493.46,248.85 494.11,248.95 494.76,249.05 495.41,249.15 496.07,249.25 496.72,249.34 497.37,249.44 498.02,249.53 498.68,249.62 499.33,249.70 499.98,249.79 500.63,249.88 501.28,249.96 501.94,250.04 502.59,250.12 503.24,250.20 503.89,250.27 504.55,250.35 505.20,250.42 505.85,250.49 506.50,250.57 507.15,250.63 507.81,250.70 508.46,250.77 509.11,250.83 509.76,250.90 510.42,250.96 511.07,251.02 511.72,251.08 512.37,251.14 513.02,251.19 513.68,251.25 514.33,251.30 514.98,251.35 515.63,251.41 516.29,251.46 516.94,251.50 517.59,251.55 518.24,251.60 518.89,251.65 519.55,251.69 520.20,251.73 520.85,251.78 521.50,251.82 522.16,251.86 522.81,251.90 523.46,251.93 524.11,251.97 524.76,252.01 525.42,252.04 526.07,252.08 526.72,252.11 527.37,252.14 528.03,252.18 528.68,252.21 529.33,252.24 529.98,252.27 530.63,252.30 531.29,252.32 531.94,252.35 532.59,252.38 533.24,252.40 533.89,252.43 534.55,252.45 535.20,252.48 535.85,252.50 536.50,252.52 537.16,252.54 537.81,252.56 538.46,252.59 539.11,252.61 539.76,252.63 540.42,252.64 541.07,252.66 541.72,252.68 542.37,252.70 543.03,252.71 543.68,252.73 544.33,252.75 544.98,252.76 545.63,252.78 546.29,252.79 546.94,252.81 547.59,252.82 548.24,252.83 548.90,252.85 549.55,252.86 550.20,252.87 550.85,252.88 551.50,252.90 552.16,252.91 552.81,252.92 553.46,252.93 554.11,252.94 554.77,252.95 555.42,252.96 556.07,252.97 556.72,252.98 557.37,252.99 558.03,253.00 558.68,253.00 559.33,253.01 559.98,253.02 560.64,253.03 561.29,253.04 561.94,253.04 562.59,253.05 563.24,253.06 563.90,253.06 564.55,253.07 565.20,253.08 565.85,253.08 566.51,253.09 567.16,253.09 567.81,253.10 568.46,253.10 569.11,253.11 569.77,253.11 570.42,253.12 571.07,253.12 571.72,253.13 572.38,253.13 573.03,253.14 573.68,253.14 574.33,253.15 574.98,253.15 575.64,253.15 576.29,253.16 576.94,253.16 577.59,253.17 578.25,253.17 578.90,253.17 579.55,253.18 580.20,253.18 580.85,253.18 581.51,253.18 582.16,253.19 582.81,253.19 583.46,253.19 584.12,253.20 584.77,253.20 585.42,253.20 586.07,253.20 586.72,253.21 587.38,253.21 588.03,253.21 588.68,253.21 589.33,253.21 589.98,253.22 590.64,253.22 591.29,253.22 591.94,253.22 592.59,253.22 593.25,253.22 593.90,253.23 594.55,253.23 595.20,253.23 595.85,253.23 596.51,253.23 597.16,253.23 597.81,253.24 598.46,253.24 599.12,253.24 599.77,253.24 600.42,253.24 601.07,253.24 601.72,253.24 602.38,253.24 603.03,253.24 603.68,253.25 604.33,253.25 604.99,253.25 605.64,253.25 606.29,253.25 606.94,253.25 607.59,253.25 608.25,253.25 608.90,253.25 609.55,253.25 610.20,253.25 610.86,253.26 611.51,253.26 612.16,253.26 612.81,253.26 613.46,253.26 614.12,253.26 614.77,253.26 615.42,253.26 616.07,253.26 616.73,253.26 617.38,253.26 618.03,253.26 618.68,253.26 619.33,253.26 619.99,253.26 620.64,253.26 621.29,253.26 621.94,253.27 622.60,253.27 623.25,253.27 623.90,253.27 624.55,253.27 625.20,253.27 625.86,253.27 626.51,253.27 627.16,253.27 627.81,253.27 628.47,253.27 629.12,253.27 629.77,253.27 630.42,253.27 631.07,253.27 631.73,253.27 632.38,253.27 633.03,253.27 633.68,253.27 634.34,253.27 634.99,253.27 635.64,253.27 636.29,253.27 636.94,253.27 637.60,253.27 638.25,253.27 638.90,253.27 639.55,253.27 640.21,253.27 640.86,253.27 641.51,253.27 642.16,253.27 642.81,253.27 643.47,253.27 644.12,253.27 644.77,253.27 645.42,253.27 646.08,253.28 646.73,253.28 647.38,253.28 648.03,253.28 648.68,253.28 649.34,253.28 649.99,253.28 650.64,253.28 651.29,253.28 651.94,253.28 652.60,253.28 653.25,253.28 653.90,253.28 654.55,253.28 655.21,253.28 655.86,253.28 656.51,253.28 657.16,253.28 657.81,253.28 658.47,253.28 659.12,253.28 659.77,253.28 660.42,253.28 661.08,253.28 661.73,253.28 662.38,253.28 663.03,253.28 663.68,253.28 664.34,253.28 664.99,253.28 665.64,253.28 666.29,253.28 666.95,253.28 667.60,253.28 668.25,253.28 668.90,253.28 669.55,253.28 670.21,253.28 670.86,253.28 671.51,253.28 672.16,253.28 672.82,253.28 673.47,253.28 674.12,253.28 674.77,253.28 675.42,253.28 676.08,253.28 676.73,253.28 677.38,253.28 678.03,253.28 678.69,253.28 679.34,253.28 679.99,253.28 680.64,253.28 681.29,253.28 681.95,253.28 682.60,253.28 683.25,253.28 683.90,253.28 684.56,253.28 685.21,253.28 685.86,253.28 686.51,253.28 687.16,253.28 687.82,253.28 688.47,253.28 689.12,253.28 689.77,253.28 690.43,253.28 691.08,253.28 691.73,253.28 692.38,253.28 693.03,253.28 693.69,253.28 694.34,253.28 694.99,253.28 695.64,253.28 696.30,253.28 696.95,253.28 697.60,253.28 698.25,253.28 698.90,253.28 699.56,253.28 700.21,253.28 700.86,253.28 701.51,253.28 702.17,253.28 702.82,253.28 703.47,253.28 704.12,253.28 704.77,253.28 705.43,253.28 706.08,253.28 706.73,253.28 707.38,253.28 708.04,253.28 708.69,253.28 709.34,253.28 709.99,253.28 710.64,253.28 711.30,253.28 711.95,253.28 712.60,253.28 713.25,253.28 713.90,253.28 714.56,253.28 715.21,253.28 715.86,253.28 716.51,253.28 717.17,253.28 717.82,253.28 718.47,253.28 719.12,253.28 719.77,253.28 720.43,253.28 721.08,253.28 721.73,253.28 722.38,253.28 723.04,253.28 723.69,253.28 724.34,253.28 724.99,253.28 725.64,253.28 726.30,253.28 726.95,253.28 727.60,253.28 728.25,253.28 728.91,253.28 729.56,253.28 730.21,253.28 730.86,253.28 731.51,253.28 732.17,253.28 732.82,253.28 733.47,253.28 734.12,253.28 734.78,253.28 735.43,253.28 736.08,253.28 736.73,253.28 737.38,253.28 738.04,253.28 738.69,253.28 739.34,253.28 739.99,253.28 740.65,253.28 741.30,253.28 741.95,253.28 742.60,253.28 743.25,253.28 743.91,253.28 744.56,253.28 745.21,253.28 745.86,253.28 746.52,253.28 747.17,253.28 747.82,253.28 748.47,253.28 749.12,253.28 749.78,253.28 750.43,253.28 751.08,253.28 751.73,253.28 752.39,253.28 753.04,253.28 753.69,253.28 754.34,253.28 754.99,253.28 755.65,253.28 756.30,253.28 756.95,253.28 757.60,253.28 758.26,253.28 758.91,253.28 759.56,253.28 760.21,253.28 760.86,253.28 761.52,253.28 762.17,253.28 762.82,253.28 763.47,253.28 764.13,253.28 764.78,253.28 765.43,253.28 766.08,253.28 766.73,253.28 767.39,253.28 768.04,253.28 768.69,253.28 769.34,253.28 769.99,253.28 770.65,253.28 771.30,253.28 771.95,253.28 772.60,253.28 773.26,253.28 773.91,253.28 774.56,253.28 775.21,253.28 775.86,253.28 776.52,253.28 777.17,253.28 777.82,253.28 778.47,253.28 779.13,253.28 779.78,253.28 780.43,253.28 781.08,253.28 781.73,253.28 782.39,253.28 783.04,253.28 783.69,253.28 784.34,253.28 785.00,253.28 785.65,253.28 786.30,253.28 786.95,253.28 787.60,253.28 788.26,253.28 788.91,253.28 789.56,253.28 790.21,253.28 790.87,253.28 791.52,253.28 792.17,253.28 792.82,253.28 793.47,253.28 794.13,253.28 794.78,253.28 795.43,253.28 796.08,253.28 796.74,253.28 797.39,253.28 798.04,253.28 798.69,253.28 799.34,253.28 800.00,253.28 800.65,253.28 801.30,253.28 801.95,253.28 802.61,253.28 803.26,253.28 803.91,253.28 804.56,253.28 805.21,253.28 805.87,253.28 806.52,253.28 807.17,253.28 807.82,253.28 808.48,253.28 809.13,253.28 809.78,253.28 810.43,253.28 811.08,253.28 811.74,253.28 812.39,253.28 813.04,253.28 813.69,253.28 814.35,253.28 815.00,253.28 815.65,253.28 816.30,253.28 816.95,253.28 817.61,253.28 818.26,253.28 818.91,253.28 819.56,253.28 820.22,253.28 820.87,253.28 821.52,253.28 822.17,253.28 822.82,253.28 823.48,253.28 824.13,253.28 824.78,253.28 825.43,253.28 826.09,253.28 826.74,253.28 827.39,253.28 828.04,253.28 828.69,253.28 829.35,253.28 830.00,253.28 830.65,253.28 831.30,253.28 831.95,253.28 832.61,253.28 833.26,253.28 833.91,253.28 834.56,253.28 835.22,253.28 835.87,253.28 836.52,253.28 837.17,253.28 837.82,253.28 838.48,253.28 839.13,253.28 839.78,253.28 840.43,253.28 841.09,253.28 841.74,253.28 842.39,253.28 843.04,253.28 843.69,253.28 844.35,253.28 845.00,253.28 845.65,253.28 846.30,253.28 846.96,253.28 847.61,253.28 848.26,253.28 848.91,253.28 849.56,253.28 850.22,253.28 850.87,253.28 851.52,253.28 852.17,253.28 852.83,253.28 853.48,253.28 854.13,253.28 854.78,253.28 855.43,253.28 856.09,253.28 856.74,253.28 857.39,253.28 858.04,253.28 858.70,253.28 859.35,253.28 860.00,253.28" stroke="#10c0c0" stroke-width="1" fill="none" shape-rendering="crispEdges"/>
<path d="M78.00,174.36 78.65,174.36 79.30,174.36 79.96,174.36 80.61,174.36 81.26,174.36 81.91,174.36 82.57,174.36 83.22,174.36 83.87,174.36 84.52,174.36 85.17,174.36 85.83,174.36 86.48,174.36 87.13,174.36 87.78,174.36 88.44,174.36 89.09,174.36 89.74,174.36 90.39,174.36 91.04,174.36 91.70,174.36 92.35,174.36 93.00,174.36 93.65,174.36 94.31,174.36 94.96,174.36 95.61,174.36 96.26,174.36 96.91,174.36 97.57,174.36 98.22,174.36 98.87,174.36 99.52,174.36 100.18,174.36 100.83,174.36 101.48,174.36 102.13,174.36 102.78,174.36 103.44,174.36 104.09,174.36 104.74,174.36 105.39,174.36 106.05,174.36 106.70,174.36 107.35,174.36 108.00,174.36 108.65,174.36 109.31,174.36 109.96,174.36 110.61,174.36 111.26,174.36 111.91,174.36 112.57,174.36 113.22,174.36 113.87,174.36 114.52,174.36 115.18,174.36 115.83,174.36 116.48,174.36 117.13,174.36 117.78,174.36 118.44,174.36 119.09,174.36 119.74,174.36 120.39,174.37 121.05,174.37 121.70,174.37 122.35,174.37 123.00,174.37 123.65,174.37 124.31,174.37 124.96,174.37 125.61,174.37 126.26,174.37 126.92,174.37 127.57,174.37 128.22,174.37 128.87,174.37 129.52,174.37 130.18,174.37 130.83,174.37 131.48,174.37 132.13,174.37 132.79,174.37 133.44,174.37 134.09,174.37 134.74,174.37 135.39,174.37 136.05,174.38 136.70,174.38 137.35,174.38 138.00,174.38 138.66,174.38 139.31,174.38 139.96,174.38 140.61,174.38 141.26,174.38 141.92,174.38 142.57,174.38 143.22,174.38 143.87,174.38 144.53,174.38 145.18,174.39 145.83,174.39 146.48,174.39 147.13,174.39 147.79,174.39 148.44,174.39 149.09,174.39 149.74,174.39 150.40,174.39 151.05,174.39 151.70,174.40 152.35,174.40 153.00,174.40 153.66,174.40 154.31,174.40 154.96,174.40 155.61,174.40 156.27,174.41 156.92,174.41 157.57,174.41 158.22,174.41 158.87,174.41 159.53,174.41 160.18,174.42 160.83,174.42 161.48,174.42 162.14,174.42 162.79,174.42 163.44,174.43 164.09,174.43 164.74,174.43 165.40,174.43 166.05,174.43 166.70,174.44 167.35,174.44 168.01,174.44 168.66,174.44 169.31,174.45 169.96,174.45 170.61,174.45 171.27,174.46 171.92,174.46 172.57,174.46 173.22,174.47 173.87,174.47 174.53,174.47 175.18,174.48 175.83,174.48 176.48,174.48 177.14,174.49 177.79,174.49 178.44,174.50 179.09,174.50 179.74,174.50 180.40,174.51 181.05,174.51 181.70,174.52 182.35,174.52 183.01,174.53 183.66,174.53 184.31,174.54 184.96,174.55 185.61,174.55 186.27,174.56 186.92,174.56 187.57,174.57 188.22,174.58 188.88,174.58 189.53,174.59 190.18,174.60 190.83,174.61 191.48,174.61 192.14,174.62 192.79,174.63 193.44,174.64 194.09,174.65 194.75,174.65 195.40,174.66 196.05,174.67 196.70,174.68 197.35,174.69 198.01,174.70 198.66,174.71 199.31,174.72 199.96,174.74 200.62,174.75 201.27,174.76 201.92,174.77 202.57,174.78 203.22,174.80 203.88,174.81 204.53,174.82 205.18,174.84 205.83,174.85 206.49,174.87 207.14,174.88 207.79,174.90 208.44,174.92 209.09,174.93 209.75,174.95 210.40,174.97 211.05,174.99 211.70,175.00 212.36,175.02 213.01,175.04 213.66,175.06 214.31,175.09 214.96,175.11 215.62,175.13 216.27,175.15 216.92,175.18 217.57,175.20 218.23,175.23 218.88,175.25 219.53,175.28 220.18,175.30 220.83,175.33 221.49,175.36 222.14,175.39 222.79,175.42 223.44,175.45 224.10,175.48 224.75,175.51 225.40,175.55 226.05,175.58 226.70,175.62 227.36,175.65 228.01,175.69 228.66,175.73 229.31,175.77 229.96,175.81 230.62,175.85 231.27,175.89 231.92,175.93 232.57,175.98 233.23,176.02 233.88,176.07 234.53,176.12 235.18,176.17 235.83,176.22 236.49,176.27 237.14,176.32 237.79,176.37 238.44,176.43 239.10,176.48 239.75,176.54 240.40,176.60 241.05,176.66 241.70,176.72 242.36,176.78 243.01,176.85 243.66,176.91 244.31,176.98 244.97,177.05 245.62,177.12 246.27,177.19 246.92,177.26 247.57,177.34 248.23,177.42 248.88,177.49 249.53,177.57 250.18,177.65 250.84,177.74 251.49,177.82 252.14,177.91 252.79,177.99 253.44,178.08 254.10,178.17 254.75,178.27 255.40,178.36 256.05,178.46 256.71,178.55 257.36,178.65 258.01,178.75 258.66,178.86 259.31,178.96 259.97,179.07 260.62,179.17 261.27,179.28 261.92,179.39 262.58,179.51 263.23,179.62 263.88,179.74 264.53,179.86 265.18,179.98 265.84,180.10 266.49,180.22 267.14,180.35 267.79,180.48 268.45,180.60 269.10,180.73 269.75,180.87 270.40,181.00 271.05,181.14 271.71,181.27 272.36,181.41 273.01,181.55 273.66,181.69 274.32,181.84 274.97,181.98 275.62,182.13 276.27,182.28 276.92,182.43 277.58,182.58 278.23,182.73 278.88,182.89 279.53,183.04 280.19,183.20 280.84,183.36 281.49,183.52 282.14,183.68 282.79,183.85 283.45,184.01 284.10,184.18 284.75,184.35 285.40,184.51 286.06,184.68 286.71,184.86 287.36,185.03 288.01,185.20 288.66,185.38 289.32,185.55 289.97,185.73 290.62,185.91 291.27,186.09 291.92,186.27 292.58,186.45 293.23,186.64 293.88,186.82 294.53,187.01 295.19,187.19 295.84,187.38 296.49,187.57 297.14,187.76 297.79,187.95 298.45,188.14 299.10,188.33 299.75,188.53 300.40,188.72 301.06,188.91 301.71,189.11 302.36,189.31 303.01,189.50 303.66,189.70 304.32,189.90 304.97,190.10 305.62,190.30 306.27,190.50 306.93,190.70 307.58,190.91 308.23,191.11 308.88,191.31 309.53,191.52 310.19,191.72 310.84,191.93 311.49,192.13 312.14,192.34 312.80,192.55 313.45,192.76 314.10,192.96 314.75,193.17 315.40,193.38 316.06,193.59 316.71,193.80 317.36,194.01 318.01,194.22 318.67,194.44 319.32,194.65 319.97,194.86 320.62,195.07 321.27,195.29 321.93,195.50 322.58,195.71 323.23,195.93 323.88,196.14 324.54,196.36 325.19,196.57 325.84,196.79 326.49,197.00 327.14,197.22 327.80,197.44 328.45,197.65 329.10,197.87 329.75,198.09 330.41,198.31 331.06,198.53 331.71,198.74 332.36,198.96 333.01,199.18 333.67,199.40 334.32,199.62 334.97,199.84 335.62,200.06 336.28,200.28 336.93,200.50 337.58,200.72 338.23,200.94 338.88,201.16 339.54,201.38 340.19,201.60 340.84,201.82 341.49,202.04 342.15,202.26 342.80,202.49 343.45,202.71 344.10,202.93 344.75,203.15 345.41,203.37 346.06,203.60 346.71,203.82 347.36,204.04 348.02,204.26 348.67,204.49 349.32,204.71 349.97,204.93 350.62,205.15 351.28,205.38 351.93,205.60 352.58,205.82 353.23,206.05 353.88,206.27 354.54,206.49 355.19,206.72 355.84,206.94 356.49,207.16 357.15,207.39 357.80,207.61 358.45,207.84 359.10,208.06 359.75,208.28 360.41,208.51 361.06,208.73 361.71,208.96 362.36,209.18 363.02,209.41 363.67,209.63 364.32,209.85 364.97,210.08 365.62,210.30 366.28,210.53 366.93,210.75 367.58,210.98 368.23,211.20 368.89,211.43 369.54,211.65 370.19,211.87 370.84,212.10 371.49,212.32 372.15,212.55 372.80,212.77 373.45,213.00 374.10,213.22 374.76,213.45 375.41,213.67 376.06,213.90 376.71,214.12 377.36,214.35 378.02,214.57 378.67,214.80 379.32,215.02 379.97,215.25 380.63,215.47 381.28,215.69 381.93,215.92 382.58,216.14 383.23,216.37 383.89,216.59 384.54,216.82 385.19,217.04 385.84,217.27 386.50,217.49 387.15,217.72 387.80,217.94 388.45,218.16 389.10,218.39 389.76,218.61 390.41,218.84 391.06,219.06 391.71,219.28 392.37,219.51 393.02,219.73 393.67,219.96 394.32,220.18 394.97,220.40 395.63,220.63 396.28,220.85 396.93,221.08 397.58,221.30 398.24,221.52 398.89,221.75 399.54,221.97 400.19,222.19 400.84,222.42 401.50,222.64 402.15,222.86 402.80,223.08 403.45,223.31 404.11,223.53 404.76,223.75 405.41,223.97 406.06,224.20 406.71,224.42 407.37,224.64 408.02,224.86 408.67,225.08 409.32,225.31 409.97,225.53 410.63,225.75 411.28,225.97 411.93,226.19 412.58,226.41 413.24,226.63 413.89,226.85 414.54,227.07 415.19,227.29 415.84,227.51 416.50,227.73 417.15,227.95 417.80,228.17 418.45,228.39 419.11,228.61 419.76,228.83 420.41,229.05 421.06,229.26 421.71,229.48 422.37,229.70 423.02,229.92 423.67,230.13 424.32,230.35 424.98,230.57 425.63,230.78 426.28,231.00 426.93,231.21 427.58,231.43 428.24,231.64 428.89,231.86 429.54,232.07 430.19,232.29 430.85,232.50 431.50,232.71 432.15,232.93 432.80,233.14 433.45,233.35 434.11,233.56 434.76,233.77 435.41,233.98 436.06,234.19 436.72,234.40 437.37,234.61 438.02,234.82 438.67,235.03 439.32,235.23 439.98,235.44 440.63,235.65 441.28,235.85 441.93,236.06 442.59,236.26 443.24,236.47 443.89,236.67 444.54,236.87 445.19,237.07 445.85,237.28 446.50,237.48 447.15,237.68 447.80,237.87 448.46,238.07 449.11,238.27 449.76,238.47 450.41,238.66 451.06,238.86 451.72,239.05 452.37,239.25 453.02,239.44 453.67,239.63 454.33,239.82 454.98,240.01 455.63,240.20 456.28,240.39 456.93,240.57 457.59,240.76 458.24,240.94 458.89,241.13 459.54,241.31 460.20,241.49 460.85,241.67 461.50,241.85 462.15,242.03 462.80,242.21 463.46,242.38 464.11,242.56 464.76,242.73 465.41,242.90 466.07,243.07 466.72,243.24 467.37,243.41 468.02,243.58 468.67,243.74 469.33,243.90 469.98,244.07 470.63,244.23 471.28,244.39 471.93,244.55 472.59,244.70 473.24,244.86 473.89,245.01 474.54,245.16 475.20,245.31 475.85,245.46 476.50,245.61 477.15,245.76 477.80,245.90 478.46,246.04 479.11,246.18 479.76,246.32 480.41,246.46 481.07,246.60 481.72,246.73 482.37,246.86 483.02,246.99 483.67,247.12 484.33,247.25 484.98,247.38 485.63,247.50 486.28,247.62 486.94,247.74 487.59,247.86 488.24,247.98 488.89,248.09 489.54,248.21 490.20,248.32 490.85,248.43 491.50,248.54 492.15,248.64 492.81,248.75 493.46,248.85 494.11,248.95 494.76,249.05 495.41,249.15 496.07,249.25 496.72,249.34 497.37,249.44 498.02,249.53 498.68,249.62 499.33,249.70 499.98,249.79 500.63,249.88 501.28,249.96 501.94,250.04 502.59,250.12 503.24,250.20 503.89,250.27 504.55,250.35 505.20,250.42 505.85,250.49 506.50,250.57 507.15,250.63 507.81,250.70 508.46,250.77 509.11,250.83 509.76,250.90 510.42,250.96 511.07,251.02 511.72,251.08 512.37,251.14 513.02,251.19 513.68,251.25 514.33,251.30 514.98,251.35 515.63,251.41 516.29,251.46 516.94,251.50 517.59,251.55 518.24,251.60 518.89,251.65 519.55,251.69 520.20,251.73 520.85,251.78 521.50,251.82 522.16,251.86 522.81,251.90 523.46,251.93 524.11,251.97 524.76,252.01 525.42,252.04 526.07,252.08 526.72,252.11 527.37,252.14 528.03,252.18 528.68,252.21 529.33,252.24 529.98,252.27 530.63,252.30 531.29,252.32 531.94,252.35 532.59,252.38 533.24,252.40 533.89,252.43 534.55,252.45 535.20,252.48 535.85,252.50 536.50,252.52 537.16,252.54 537.81,252.56 538.46,252.59 539.11,252.61 539.76,252.63 540.42,252.64 541.07,252.66 541.72,252.68 542.37,252.70 543.03,252.71 543.68,252.73 544.33,252.75 544.98,252.76 545.63,252.78 546.29,252.79 546.94,252.81 547.59,252.82 548.24,252.83 548.90,252.85 549.55,252.86 550.20,252.87 550.85,252.88 551.50,252.90 552.16,252.91 552.81,252.92 553.46,252.93 554.11,252.94 554.77,252.95 555.42,252.96 556.07,252.97 556.72,252.98 557.37,252.99 558.03,253.00 558.68,253.00 559.33,253.01 559.98,253.02 560.64,253.03 561.29,253.04 561.94,253.04 562.59,253.05 563.24,253.06 563.90,253.06 564.55,253.07 565.20,253.08 565.85,253.08 566.51,253.09 567.16,253.09 567.81,253.10 568.46,253.10 569.11,253.11 569.77,253.11 570.42,253.12 571.07,253.12 571.72,253.13 572.38,253.13 573.03,253.14 573.68,253.14 574.33,253.15 574.98,253.15 575.64,253.15 576.29,253.16 576.94,253.16 577.59,253.17 578.25,253.17 578.90,253.17 579.55,253.18 580.20,253.18 580.85,253.18 581.51,253.18 582.16,253.19 582.81,253.19 583.46,253.19 584.12,253.20 584.77,253.20 585.42,253.20 586.07,253.20 586.72,253.21 587.38,253.21 588.03,253.21 588.68,253.21 589.33,253.21 589.98,253.22 590.64,253.22 591.29,253.22 591.94,253.22 592.59,253.22 593.25,253.22 593.90,253.23 594.55,253.23 595.20,253.23 595.85,253.23 596.51,253.23 597.16,253.23 597.81,253.24 598.46,253.24 599.12,253.24 599.77,253.24 600.42,253.24 601.07,253.24 601.72,253.24 602.38,253.24 603.03,253.24 603.68,253.25 604.33,253.25 604.99,253.25 605.64,253.25 606.29,253.25 606.94,253.25 607.59,253.25 608.25,253.25 608.90,253.25 609.55,253.25 610.20,253.25 610.86,253.26 611.51,253.26 612.16,253.26 612.81,253.26 613.46,253.26 614.12,253.26 614.77,253.26 615.42,253.26 616.07,253.26 616.73,253.26 617.38,253.26 618.03,253.26 618.68,253.26 619.33,253.26 619.99,253.26 620.64,253.26 621.29,253.26 621.94,253.27 622.60,253.27 623.25,253.27 623.90,253.27 624.55,253.27 625.20,253.27 625.86,253.27 626.51,253.27 627.16,253.27 627.81,253.27 628.47,253.27 629.12,253.27 629.77,253.27 630.42,253.27 631.07,253.27 631.73,253.27 632.38,253.27 633.03,253.27 633.68,253.27 634.34,253.27 634.99,253.27 635.64,253.27 636.29,253.27 636.94,253.27 637.60,253.27 638.25,253.27 638.90,253.27 639.55,253.27 640.21,253.27 640.86,253.27 641.51,253.27 642.16,253.27 642.81,253.27 643.47,253.27 644.12,253.27 644.77,253.27 645.42,253.27 646.08,253.28 646.73,253.28 647.38,253.28 648.03,253.28 648.68,253.28 649.34,253.28 649.99,253.28 650.64,253.28 651.29,253.28 651.94,253.28 652.60,253.28 653.25,253.28 653.90,253.28 654.55,253.28 655.21,253.28 655.86,253.28 656.51,253.28 657.16,253.28 657.81,253.28 658.47,253.28 659.12,253.28 659.77,253.28 660.42,253.28 661.08,253.28 661.73,253.28 662.38,253.28 663.03,253.28 663.68,253.28 664.34,253.28 664.99,253.28 665.64,253.28 666.29,253.28 666.95,253.28 667.60,253.28 668.25,253.28 668.90,253.28 669.55,253.28 670.21,253.28 670.86,253.28 671.51,253.28 672.16,253.28 672.82,253.28 673.47,253.28 674.12,253.28 674.77,253.28 675.42,253.28 676.08,253.28 676.73,253.28 677.38,253.28 678.03,253.28 678.69,253.28 679.34,253.28 679.99,253.28 680.64,253.28 681.29,253.28 681.95,253.28 682.60,253.28 683.25,253.28 683.90,253.28 684.56,253.28 685.21,253.28 685.86,253.28 686.51,253.28 687.16,253.28 687.82,253.28 688.47,253.28 689.12,253.28 689.77,253.28 690.43,253.28 691.08,253.28 691.73,253.28 692.38,253.28 693.03,253.28 693.69,253.28 694.34,253.28 694.99,253.28 695.64,253.28 696.30,253.28 696.95,253.28 697.60,253.28 698.25,253.28 698.90,253.28 699.56,253.28 700.21,253.28 700.86,253.28 701.51,253.28 702.17,253.28 702.82,253.28 703.47,253.28 704.12,253.28 704.77,253.28 705.43,253.28 706.08,253.28 706.73,253.28 707.38,253.28 708.04,253.28 708.69,253.28 709.34,253.28 709.99,253.28 710.64,253.28 711.30,253.28 711.95,253.28 712.60,253.28 713.25,253.28 713.90,253.28 714.56,253.28 715.21,253.28 715.86,253.28 716.51,253.28 717.17,253.28 717.82,253.28 718.47,253.28 719.12,253.28 719.77,253.28 720.43,253.28 721.08,253.28 721.73,253.28 722.38,253.28 723.04,253.28 723.69,253.28 724.34,253.28 724.99,253.28 725.64,253.28 726.30,253.28 726.95,253.28 727.60,253.28 728.25,253.28 728.91,253.28 729.56,253.28 730.21,253.28 730.86,253.28 731.51,253.28 732.17,253.28 732.82,253.28 733.47,253.28 734.12,253.28 734.78,253.28 735.43,253.28 736.08,253.28 736.73,253.28 737.38,253.28 738.04,253.28 738.69,253.28 739.34,253.28 739.99,253.28 740.65,253.28 741.30,253.28 741.95,253.28 742.60,253.28 743.25,253.28 743.91,253.28 744.56,253.28 745.21,253.28 745.86,253.28 746.52,253.28 747.17,253.28 747.82,253.28 748.47,253.28 749.12,253.28 749.78,253.28 750.43,253.28 751.08,253.28 751.73,253.28 752.39,253.28 753.04,253.28 753.69,253.28 754.34,253.28 754.99,253.28 755.65,253.28 756.30,253.28 756.95,253.28 757.60,253.28 758.26,253.28 758.91,253.28 759.56,253.28 760.21,253.28 760.86,253.28 761.52,253.28 762.17,253.28 762.82,253.28 763.47,253.28 764.13,253.28 764.78,253.28 765.43,253.28 766.08,253.28 766.73,253.28 767.39,253.28 768.04,253.28 768.69,253.28 769.34,253.28 769.99,253.28 770.65,253.28 771.30,253.28 771.95,253.28 772.60,253.28 773.26,253.28 773.91,253.28 774.56,253.28 775.21,253.28 775.86,253.28 776.52,253.28 777.17,253.28 777.82,253.28 778.47,253.28 779.13,253.28 779.78,253.28 780.43,253.28 781.08,253.28 781.73,253.28 782.39,253.28 783.04,253.28 783.69,253.28 784.34,253.28 785.00,253.28 785.65,253.28 786.30,253.28 786.95,253.28 787.60,253.28 788.26,253.28 788.91,253.28 789.56,253.28 790.21,253.28 790.87,253.28 791.52,253.28 792.17,253.28 792.82,253.28 793.47,253.28 794.13,253.28 794.78,253.28 795.43,253.28 796.08,253.28 796.74,253.28 797.39,253.28 798.04,253.28 798.69,253.28 799.34,253.28 800.00,253.28 800.65,253.28 801.30,253.28 801.95,253.28 802.61,253.28 803.26,253.28 803.91,253.28 804.56,253.28 805.21,253.28 805.87,253.28 806.52,253.28 807.17,253.28 807.82,253.28 808.48,253.28 809.13,253.28 809.78,253.28 810.43,253.28 811.08,253.28 811.74,253.28 812.39,253.28 813.04,253.28 813.69,253.28 814.35,253.28 815.00,253.28 815.65,253.28 816.30,253.28 816.95,253.28 817.61,253.28 818.26,253.28 818.91,253.28 819.56,253.28 820.22,253.28 820.87,253.28 821.52,253.28 822.17,253.28 822.82,253.28 823.48,253.28 824.13,253.28 824.78,253.28 825.43,253.28 826.09,253.28 826.74,253.28 827.39,253.28 828.04,253.28 828.69,253.28 829.35,253.28 830.00,253.28 830.65,253.28 831.30,253.28 831.95,253.28 832.61,253.28 833.26,253.28 833.91,253.28 834.56,253.28 835.22,253.28 835.87,253.28 836.52,253.28 837.17,253.28 837.82,253.28 838.48,253.28 839.13,253.28 839.78,253.28 840.43,253.28 841.09,253.28 841.74,253.28 842.39,253.28 843.04,253.28 843.69,253.28 844.35,253.28 845.00,253.28 845.65,253.28 846.30,253.28 846.96,253.28 847.61,253.28 848.26,253.28 848.91,253.28 849.56,253.28 850.22,253.28 850.87,253.28 851.52,253.28 852.17,253.28 852.83,253.28 853.48,253.28 854.13,253.28 854.78,253.28 855.43,253.28 856.09,253.28 856.74,253.28 857.39,253.28 858.04,253.28 858.70,253.28 859.35,253.28 860.00,253.28" stroke="#10c0c0" stroke-width="1" fill="none" shape-rendering="crispEdges" transform="translate(-1,0)"/>
<path d="M78.00,165.29 78.65,165.30 79.30,165.31 79.96,165.32 80.61,165.34 81.26,165.35 81.91,165.36 82.57,165.38 83.22,165.39 83.87,165.40 84.52,165.42 85.17,165.43 85.83,165.45 86.48,165.46 87.13,165.48 87.78,165.49 88.44,165.51 89.09,165.52 89.74,165.54 90.39,165.55 91.04,165.57 91.70,165.59 92.35,165.60 93.00,165.62 93.65,165.64 94.31,165.66 94.96,165.67 95.61,165.69 96.26,165.71 96.91,165.73 97.57,165.75 98.22,165.77 98.87,165.79 99.52,165.81 100.18,165.83 100.83,165.85 101.48,165.87 102.13,165.89 102.78,165.91 103.44,165.93 104.09,165.96 104.74,165.98 105.39,166.00 106.05,166.02 106.70,166.05 107.35,166.07 108.00,166.10 108.65,166.12 109.31,166.15 109.96,166.17 110.61,166.20 111.26,166.22 111.91,166.25 112.57,166.28 113.22,166.30 113.87,166.33 114.52,166.36 115.18,166.39 115.83,166.42 116.48,166.45 117.13,166.48 117.78,166.51 118.44,166.54 119.09,166.57 119.74,166.60 120.39,166.64 121.05,166.67 121.70,166.70 122.35,166.74 123.00,166.77 123.65,166.81 124.31,166.84 124.96,166.88 125.61,166.92 126.26,166.95 126.92,166.99 127.57,167.03 128.22,167.07 128.87,167.11 129.52,167.15 130.18,167.19 130.83,167.23 131.48,167.27 132.13,167.32 132.79,167.36 133.44,167.40 134.09,167.45 134.74,167.49 135.39,167.54 136.05,167.59 136.70,167.64 137.35,167.68 138.00,167.73 138.66,167.78 139.31,167.83 139.96,167.89 140.61,167.94 141.26,167.99 141.92,168.04 142.57,168.10 143.22,168.15 143.87,168.21 144.53,168.27 145.18,168.33 145.83,168.39 146.48,168.45 147.13,168.51 147.79,168.57 148.44,168.63 149.09,168.70 149.74,168.76 150.40,168.83 151.05,168.89 151.70,168.96 152.35,169.03 153.00,169.10 153.66,169.17 154.31,169.24 154.96,169.31 155.61,169.39 156.27,169.46 156.92,169.54 157.57,169.62 158.22,169.70 158.87,169.78 159.53,169.86 160.18,169.94 160.83,170.02 161.48,170.11 162.14,170.20 162.79,170.28 163.44,170.37 164.09,170.46 164.74,170.55 165.40,170.65 166.05,170.74 166.70,170.84 167.35,170.94 168.01,171.03 168.66,171.14 169.31,171.24 169.96,171.34 170.61,171.45 171.27,171.55 171.92,171.66 172.57,171.77 173.22,171.88 173.87,171.99 174.53,172.11 175.18,172.23 175.83,172.34 176.48,172.46 177.14,172.59 177.79,172.71 178.44,172.84 179.09,172.96 179.74,173.09 180.40,173.22 181.05,173.36 181.70,173.49 182.35,173.63 183.01,173.77 183.66,173.91 184.31,174.05 184.96,174.20 185.61,174.34 186.27,174.49 186.92,174.65 187.57,174.80 188.22,174.96 188.88,175.12 189.53,175.28 190.18,175.44 190.83,175.61 191.48,175.77 192.14,175.94 192.79,176.12 193.44,176.29 194.09,176.47 194.75,176.65 195.40,176.83 196.05,177.02 196.70,177.21 197.35,177.40 198.01,177.59 198.66,177.79 199.31,177.99 199.96,178.19 200.62,178.39 201.27,178.60 201.92,178.81 202.57,179.02 203.22,179.24 203.88,179.46 204.53,179.68 205.18,179.91 205.83,180.13 206.49,180.37 207.14,180.60 207.79,180.84 208.44,181.08 209.09,181.32 209.75,181.57 210.40,181.82 211.05,182.07 211.70,182.33 212.36,182.59 213.01,182.85 213.66,183.12 214.31,183.39 214.96,183.66 215.62,183.94 216.27,184.22 216.92,184.50 217.57,184.79 218.23,185.08 218.88,185.37 219.53,185.67 220.18,185.97 220.83,186.28 221.49,186.58 222.14,186.90 222.79,187.21 223.44,187.53 224.10,187.85 224.75,188.18 225.40,188.51 226.05,188.84 226.70,189.18 227.36,189.52 228.01,189.86 228.66,190.21 229.31,190.56 229.96,190.91 230.62,191.27 231.27,191.63 231.92,192.00 232.57,192.37 233.23,192.74 233.88,193.11 234.53,193.49 235.18,193.87 235.83,194.26 236.49,194.65 237.14,195.04 237.79,195.43 238.44,195.83 239.10,196.23 239.75,196.63 240.40,197.04 241.05,197.45 241.70,197.86 242.36,198.28 243.01,198.70 243.66,199.12 244.31,199.54 244.97,199.97 245.62,200.40 246.27,200.83 246.92,201.27 247.57,201.70 248.23,202.14 248.88,202.58 249.53,203.02 250.18,203.47 250.84,203.92 251.49,204.36 252.14,204.81 252.79,205.27 253.44,205.72 254.10,206.17 254.75,206.63 255.40,207.09 256.05,207.54 256.71,208.00 257.36,208.46 258.01,208.92 258.66,209.39 259.31,209.85 259.97,210.31 260.62,210.77 261.27,211.24 261.92,211.70 262.58,212.16 263.23,212.63 263.88,213.09 264.53,213.55 265.18,214.01 265.84,214.47 266.49,214.94 267.14,215.40 267.79,215.85 268.45,216.31 269.10,216.77 269.75,217.23 270.40,217.68 271.05,218.13 271.71,218.59 272.36,219.04 273.01,219.48 273.66,219.93 274.32,220.38 274.97,220.82 275.62,221.26 276.27,221.70 276.92,222.13 277.58,222.57 278.23,223.00 278.88,223.43 279.53,223.86 280.19,224.28 280.84,224.70 281.49,225.12 282.14,225.53 282.79,225.95 283.45,226.36 284.10,226.76 284.75,227.17 285.40,227.57 286.06,227.96 286.71,228.36 287.36,228.75 288.01,229.14 288.66,229.52 289.32,229.90 289.97,230.28 290.62,230.65 291.27,231.02 291.92,231.39 292.58,231.75 293.23,232.11 293.88,232.46 294.53,232.82 295.19,233.16 295.84,233.51 296.49,233.85 297.14,234.19 297.79,234.52 298.45,234.85 299.10,235.17 299.75,235.50 300.40,235.81 301.06,236.13 301.71,236.44 302.36,236.75 303.01,237.05 303.66,237.35 304.32,237.65 304.97,237.94 305.62,238.23 306.27,238.51 306.93,238.79 307.58,239.07 308.23,239.34 308.88,239.61 309.53,239.88 310.19,240.14 310.84,240.40 311.49,240.65 312.14,240.91 312.80,241.15 313.45,241.40 314.10,241.64 314.75,241.88 315.40,242.11 316.06,242.34 316.71,242.57 317.36,242.79 318.01,243.01 318.67,243.23 319.32,243.44 319.97,243.65 320.62,243.86 321.27,244.06 321.93,244.26 322.58,244.46 323.23,244.66 323.88,244.85 324.54,245.03 325.19,245.22 325.84,245.40 326.49,245.58 327.14,245.75 327.80,245.92 328.45,246.09 329.10,246.26 329.75,246.42 330.41,246.58 331.06,246.74 331.71,246.90 332.36,247.05 333.01,247.20 333.67,247.34 334.32,247.49 334.97,247.63 335.62,247.76 336.28,247.90 336.93,248.03 337.58,248.16 338.23,248.29 338.88,248.41 339.54,248.53 340.19,248.65 340.84,248.77 341.49,248.88 342.15,249.00 342.80,249.11 343.45,249.21 344.10,249.32 344.75,249.42 345.41,249.52 346.06,249.61 346.71,249.71 347.36,249.80 348.02,249.89 348.67,249.98 349.32,250.06 349.97,250.15 350.62,250.23 351.28,250.31 351.93,250.38 352.58,250.46 353.23,250.53 353.88,250.60 354.54,250.67 355.19,250.73 355.84,250.79 356.49,250.85 357.15,250.91 357.80,250.97 358.45,251.02 359.10,251.08 359.75,251.13 360.41,251.17 361.06,251.22 361.71,251.27 362.36,251.31 363.02,251.35 363.67,251.39 364.32,251.42 364.97,251.45 365.62,251.49 366.28,251.52 366.93,251.54 367.58,251.57 368.23,251.59 368.89,251.62 369.54,251.64 370.19,251.65 370.84,251.67 371.49,251.68 372.15,251.70 372.80,251.71 373.45,251.71 374.10,251.72 374.76,251.72 375.41,251.73 376.06,251.73 376.71,251.73 377.36,251.72 378.02,251.72 378.67,251.71 379.32,251.70 379.97,251.69 380.63,251.67 381.28,251.66 381.93,251.64 382.58,251.62 383.23,251.60 383.89,251.58 384.54,251.55 385.19,251.53 385.84,251.50 386.50,251.46 387.15,251.43 387.80,251.40 388.45,251.36 389.10,251.32 389.76,251.28 390.41,251.23 391.06,251.19 391.71,251.14 392.37,251.09 393.02,251.04 393.67,250.99 394.32,250.93 394.97,250.87 395.63,250.81 396.28,250.75 396.93,250.68 397.58,250.62 398.24,250.55 398.89,250.48 399.54,250.40 400.19,250.33 400.84,250.25 401.50,250.17 402.15,250.09 402.80,250.00 403.45,249.92 404.11,249.83 404.76,249.74 405.41,249.64 406.06,249.55 406.71,249.45 407.37,249.35 408.02,249.24 408.67,249.14 409.32,249.03 409.97,248.92 410.63,248.80 411.28,248.69 411.93,248.57 412.58,248.45 413.24,248.33 413.89,248.20 414.54,248.07 415.19,247.94 415.84,247.80 416.50,247.67 417.15,247.53 417.80,247.39 418.45,247.24 419.11,247.09 419.76,246.94 420.41,246.79 421.06,246.63 421.71,246.47 422.37,246.31 423.02,246.14 423.67,245.98 424.32,245.80 424.98,245.63 425.63,245.45 426.28,245.27 426.93,245.09 427.58,244.90 428.24,244.71 428.89,244.52 429.54,244.32 430.19,244.12 430.85,243.92 431.50,243.71 432.15,243.51 432.80,243.29 433.45,243.08 434.11,242.86 434.76,242.64 435.41,242.41 436.06,242.18 436.72,241.95 437.37,241.71 438.02,241.47 438.67,241.23 439.32,240.98 439.98,240.73 440.63,240.47 441.28,240.22 441.93,239.96 442.59,239.69 443.24,239.42 443.89,239.15 444.54,238.87 445.19,238.59 445.85,238.31 446.50,238.02 447.15,237.73 447.80,237.44 448.46,237.14 449.11,236.84 449.76,236.53 450.41,236.22 451.06,235.91 451.72,235.59 452.37,235.27 453.02,234.95 453.67,234.62 454.33,234.28 454.98,233.95 455.63,233.61 456.28,233.27 456.93,232.92 457.59,232.57 458.24,232.21 458.89,231.86 459.54,231.49 460.20,231.13 460.85,230.76 461.50,230.39 462.15,230.01 462.80,229.63 463.46,229.25 464.11,228.86 464.76,228.47 465.41,228.08 466.07,227.69 466.72,227.29 467.37,226.88 468.02,226.48 468.67,226.07 469.33,225.66 469.98,225.24 470.63,224.82 471.28,224.40 471.93,223.98 472.59,223.56 473.24,223.13 473.89,222.70 474.54,222.26 475.20,221.83 475.85,221.39 476.50,220.95 477.15,220.51 477.80,220.06 478.46,219.62 479.11,219.17 479.76,218.72 480.41,218.27 481.07,217.82 481.72,217.36 482.37,216.91 483.02,216.45 483.67,215.99 484.33,215.53 484.98,215.07 485.63,214.61 486.28,214.15 486.94,213.69 487.59,213.23 488.24,212.76 488.89,212.30 489.54,211.84 490.20,211.37 490.85,210.91 491.50,210.45 492.15,209.98 492.81,209.52 493.46,209.06 494.11,208.60 494.76,208.14 495.41,207.68 496.07,207.22 496.72,206.76 497.37,206.31 498.02,205.85 498.68,205.40 499.33,204.95 499.98,204.50 500.63,204.05 501.28,203.60 501.94,203.16 502.59,202.71 503.24,202.27 503.89,201.83 504.55,201.39 505.20,200.96 505.85,200.53 506.50,200.10 507.15,199.67 507.81,199.25 508.46,198.82 509.11,198.40 509.76,197.99 510.42,197.57 511.07,197.16 511.72,196.75 512.37,196.35 513.02,195.95 513.68,195.55 514.33,195.15 514.98,194.76 515.63,194.37 516.29,193.99 516.94,193.60 517.59,193.22 518.24,192.85 518.89,192.47 519.55,192.11 520.20,191.74 520.85,191.38 521.50,191.02 522.16,190.66 522.81,190.31 523.46,189.96 524.11,189.62 524.76,189.28 525.42,188.94 526.07,188.61 526.72,188.28 527.37,187.95 528.03,187.62 528.68,187.31 529.33,186.99 529.98,186.68 530.63,186.37 531.29,186.06 531.94,185.76 532.59,185.46 533.24,185.17 533.89,184.87 534.55,184.59 535.20,184.30 535.85,184.02 536.50,183.74 537.16,183.47 537.81,183.20 538.46,182.93 539.11,182.67 539.76,182.40 540.42,182.15 541.07,181.89 541.72,181.64 542.37,181.39 543.03,181.15 543.68,180.91 544.33,180.67 544.98,180.43 545.63,180.20 546.29,179.97 546.94,179.75 547.59,179.52 548.24,179.30 548.90,179.09 549.55,178.87 550.20,178.66 550.85,178.45 551.50,178.25 552.16,178.05 552.81,177.85 553.46,177.65 554.11,177.45 554.77,177.26 555.42,177.07 556.07,176.89 556.72,176.70 557.37,176.52 558.03,176.34 558.68,176.17 559.33,175.99 559.98,175.82 560.64,175.65 561.29,175.49 561.94,175.32 562.59,175.16 563.24,175.00 563.90,174.85 564.55,174.69 565.20,174.54 565.85,174.39 566.51,174.24 567.16,174.09 567.81,173.95 568.46,173.81 569.11,173.67 569.77,173.53 570.42,173.40 571.07,173.26 571.72,173.13 572.38,173.00 573.03,172.87 573.68,172.75 574.33,172.62 574.98,172.50 575.64,172.38 576.29,172.26 576.94,172.14 577.59,172.03 578.25,171.91 578.90,171.80 579.55,171.69 580.20,171.58 580.85,171.48 581.51,171.37 582.16,171.27 582.81,171.17 583.46,171.06 584.12,170.96 584.77,170.87 585.42,170.77 586.07,170.68 586.72,170.58 587.38,170.49 588.03,170.40 588.68,170.31 589.33,170.22 589.98,170.14 590.64,170.05 591.29,169.97 591.94,169.88 592.59,169.80 593.25,169.72 593.90,169.64 594.55,169.56 595.20,169.49 595.85,169.41 596.51,169.34 597.16,169.26 597.81,169.19 598.46,169.12 599.12,169.05 599.77,168.98 600.42,168.91 601.07,168.85 601.72,168.78 602.38,168.71 603.03,168.65 603.68,168.59 604.33,168.52 604.99,168.46 605.64,168.40 606.29,168.34 606.94,168.29 607.59,168.23 608.25,168.17 608.90,168.12 609.55,168.06 610.20,168.01 610.86,167.95 611.51,167.90 612.16,167.85 612.81,167.80 613.46,167.75 614.12,167.70 614.77,167.65 615.42,167.60 616.07,167.55 616.73,167.51 617.38,167.46 618.03,167.42 618.68,167.37 619.33,167.33 619.99,167.29 620.64,167.24 621.29,167.20 621.94,167.16 622.60,167.12 623.25,167.08 623.90,167.04 624.55,167.00 625.20,166.96 625.86,166.93 626.51,166.89 627.16,166.85 627.81,166.82 628.47,166.78 629.12,166.75 629.77,166.71 630.42,166.68 631.07,166.65 631.73,166.61 632.38,166.58 633.03,166.55 633.68,166.52 634.34,166.49 634.99,166.46 635.64,166.43 636.29,166.40 636.94,166.37 637.60,166.34 638.25,166.31 638.90,166.28 639.55,166.26 640.21,166.23 640.86,166.20 641.51,166.18 642.16,166.15 642.81,166.13 643.47,166.10 644.12,166.08 644.77,166.05 645.42,166.03 646.08,166.01 646.73,165.98 647.38,165.96 648.03,165.94 648.68,165.92 649.34,165.90 649.99,165.87 650.64,165.85 651.29,165.83 651.94,165.81 652.60,165.79 653.25,165.77 653.90,165.75 654.55,165.73 655.21,165.72 655.86,165.70 656.51,165.68 657.16,165.66 657.81,165.64 658.47,165.63 659.12,165.61 659.77,165.59 660.42,165.58 661.08,165.56 661.73,165.54 662.38,165.53 663.03,165.51 663.68,165.50 664.34,165.48 664.99,165.47 665.64,165.45 666.29,165.44 666.95,165.42 667.60,165.41 668.25,165.39 668.90,165.38 669.55,165.37 670.21,165.35 670.86,165.34 671.51,165.33 672.16,165.32 672.82,165.30 673.47,165.29 674.12,165.28 674.77,165.27 675.42,165.26 676.08,165.24 676.73,165.23 677.38,165.22 678.03,165.21 678.69,165.20 679.34,165.19 679.99,165.18 680.64,165.17 681.29,165.16 681.95,165.15 682.60,165.14 683.25,165.13 683.90,165.12 684.56,165.11 685.21,165.10 685.86,165.09 686.51,165.08 687.16,165.07 687.82,165.06 688.47,165.06 689.12,165.05 689.77,165.04 690.43,165.03 691.08,165.02 691.73,165.01 692.38,165.01 693.03,165.00 693.69,164.99 694.34,164.98 694.99,164.98 695.64,164.97 696.30,164.96 696.95,164.95 697.60,164.95 698.25,164.94 698.90,164.93 699.56,164.93 700.21,164.92 700.86,164.91 701.51,164.91 702.17,164.90 702.82,164.90 703.47,164.89 704.12,164.88 704.77,164.88 705.43,164.87 706.08,164.87 706.73,164.86 707.38,164.86 708.04,164.85 708.69,164.85 709.34,164.84 709.99,164.83 710.64,164.83 711.30,164.82 711.95,164.82 712.60,164.81 713.25,164.81 713.90,164.81 714.56,164.80 715.21,164.80 715.86,164.79 716.51,164.79 717.17,164.78 717.82,164.78 718.47,164.77 719.12,164.77 719.77,164.77 720.43,164.76 721.08,164.76 721.73,164.75 722.38,164.75 723.04,164.75 723.69,164.74 724.34,164.74 724.99,164.73 725.64,164.73 726.30,164.73 726.95,164.72 727.60,164.72 728.25,164.72 728.91,164.71 729.56,164.71 730.21,164.71 730.86,164.70 731.51,164.70 732.17,164.70 732.82,164.70 733.47,164.69 734.12,164.69 734.78,164.69 735.43,164.68 736.08,164.68 736.73,164.68 737.38,164.68 738.04,164.67 738.69,164.67 739.34,164.67 739.99,164.67 740.65,164.66 741.30,164.66 741.95,164.66 742.60,164.66 743.25,164.65 743.91,164.65 744.56,164.65 745.21,164.65 745.86,164.64 746.52,164.64 747.17,164.64 747.82,164.64 748.47,164.64 749.12,164.63 749.78,164.63 750.43,164.63 751.08,164.63 751.73,164.63 752.39,164.62 753.04,164.62 753.69,164.62 754.34,164.62 754.99,164.62 755.65,164.61 756.30,164.61 756.95,164.61 757.60,164.61 758.26,164.61 758.91,164.61 759.56,164.60 760.21,164.60 760.86,164.60 761.52,164.60 762.17,164.60 762.82,164.60 763.47,164.59 764.13,164.59 764.78,164.59 765.43,164.59 766.08,164.59 766.73,164.59 767.39,164.59 768.04,164.59 768.69,164.58 769.34,164.58 769.99,164.58 770.65,164.58 771.30,164.58 771.95,164.58 772.60,164.58 773.26,164.58 773.91,164.57 774.56,164.57 775.21,164.57 775.86,164.57 776.52,164.57 777.17,164.57 777.82,164.57 778.47,164.57 779.13,164.57 779.78,164.56 780.43,164.56 781.08,164.56 781.73,164.56 782.39,164.56 783.04,164.56 783.69,164.56 784.34,164.56 785.00,164.56 785.65,164.56 786.30,164.56 786.95,164.55 787.60,164.55 788.26,164.55 788.91,164.55 789.56,164.55 790.21,164.55 790.87,164.55 791.52,164.55 792.17,164.55 792.82,164.55 793.47,164.55 794.13,164.55 794.78,164.55 795.43,164.54 796.08,164.54 796.74,164.54 797.39,164.54 798.04,164.54 798.69,164.54 799.34,164.54 800.00,164.54 800.65,164.54 801.30,164.54 801.95,164.54 802.61,164.54 803.26,164.54 803.91,164.54 804.56,164.54 805.21,164.54 805.87,164.53 806.52,164.53 807.17,164.53 807.82,164.53 808.48,164.53 809.13,164.53 809.78,164.53 810.43,164.53 811.08,164.53 811.74,164.53 812.39,164.53 813.04,164.53 813.69,164.53 814.35,164.53 815.00,164.53 815.65,164.53 816.30,164.53 816.95,164.53 817.61,164.53 818.26,164.53 818.91,164.53 819.56,164.53 820.22,164.52 820.87,164.52 821.52,164.52 822.17,164.52 822.82,164.52 823.48,164.52 824.13,164.52 824.78,164.52 825.43,164.52 826.09,164.52 826.74,164.52 827.39,164.52 828.04,164.52 828.69,164.52 829.35,164.52 830.00,164.52 830.65,164.52 831.30,164.52 831.95,164.52 832.61,164.52 833.26,164.52 833.91,164.52 834.56,164.52 835.22,164.52 835.87,164.52 836.52,164.52 837.17,164.52 837.82,164.52 838.48,164.52 839.13,164.52 839.78,164.52 840.43,164.52 841.09,164.52 841.74,164.52 842.39,164.51 843.04,164.51 843.69,164.51 844.35,164.51 845.00,164.51 845.65,164.51 846.30,164.51 846.96,164.51 847.61,164.51 848.26,164.51 848.91,164.51 849.56,164.51 850.22,164.51 850.87,164.51 851.52,164.51 852.17,164.51 852.83,164.51 853.48,164.51 854.13,164.51 854.78,164.51 855.43,164.51 856.09,164.51 856.74,164.51 857.39,164.51 858.04,164.51 858.70,164.51 859.35,164.51 860.00,164.51" stroke="#10c0c0" stroke-width="1" fill="none" stroke-dasharray="3,3" shape-rendering="crispEdges"/>
<path d="M78.00,165.29 78.65,165.30 79.30,165.31 79.96,165.32 80.61,165.34 81.26,165.35 81.91,165.36 82.57,165.38 83.22,165.39 83.87,165.40 84.52,165.42 85.17,165.43 85.83,165.45 86.48,165.46 87.13,165.48 87.78,165.49 88.44,165.51 89.09,165.52 89.74,165.54 90.39,165.55 91.04,165.57 91.70,165.59 92.35,165.60 93.00,165.62 93.65,165.64 94.31,165.66 94.96,165.67 95.61,165.69 96.26,165.71 96.91,165.73 97.57,165.75 98.22,165.77 98.87,165.79 99.52,165.81 100.18,165.83 100.83,165.85 101.48,165.87 102.13,165.89 102.78,165.91 103.44,165.93 104.09,165.96 104.74,165.98 105.39,166.00 106.05,166.02 106.70,166.05 107.35,166.07 108.00,166.10 108.65,166.12 109.31,166.15 109.96,166.17 110.61,166.20 111.26,166.22 111.91,166.25 112.57,166.28 113.22,166.30 113.87,166.33 114.52,166.36 115.18,166.39 115.83,166.42 116.48,166.45 117.13,166.48 117.78,166.51 118.44,166.54 119.09,166.57 119.74,166.60 120.39,166.64 121.05,166.67 121.70,166.70 122.35,166.74 123.00,166.77 123.65,166.81 124.31,166.84 124.96,166.88 125.61,166.92 126.26,166.95 126.92,166.99 127.57,167.03 128.22,167.07 128.87,167.11 129.52,167.15 130.18,167.19 130.83,167.23 131.48,167.27 132.13,167.32 132.79,167.36 133.44,167.40 134.09,167.45 134.74,167.49 135.39,167.54 136.05,167.59 136.70,167.64 137.35,167.68 138.00,167.73 138.66,167.78 139.31,167.83 139.96,167.89 140.61,167.94 141.26,167.99 141.92,168.04 142.57,168.10 143.22,168.15 143.87,168.21 144.53,168.27 145.18,168.33 145.83,168.39 146.48,168.45 147.13,168.51 147.79,168.57 148.44,168.63 149.09,168.70 149.74,168.76 150.40,168.83 151.05,168.89 151.70,168.96 152.35,169.03 153.00,169.10 153.66,169.17 154.31,169.24 154.96,169.31 155.61,169.39 156.27,169.46 156.92,169.54 157.57,169.62 158.22,169.70 158.87,169.78 159.53,169.86 160.18,169.94 160.83,170.02 161.48,170.11 162.14,170.20 162.79,170.28 163.44,170.37 164.09,170.46 164.74,170.55 165.40,170.65 166.05,170.74 166.70,170.84 167.35,170.94 168.01,171.03 168.66,171.14 169.31,171.24 169.96,171.34 170.61,171.45 171.27,171.55 171.92,171.66 172.57,171.77 173.22,171.88 173.87,171.99 174.53,172.11 175.18,172.23 175.83,172.34 176.48,172.46 177.14,172.59 177.79,172.71 178.44,172.84 179.09,172.96 179.74,173.09 180.40,173.22 181.05,173.36 181.70,173.49 182.35,173.63 183.01,173.77 183.66,173.91 184.31,174.05 184.96,174.20 185.61,174.34 186.27,174.49 186.92,174.65 187.57,174.80 188.22,174.96 188.88,175.12 189.53,175.28 190.18,175.44 190.83,175.61 191.48,175.77 192.14,175.94 192.79,176.12 193.44,176.29 194.09,176.47 194.75,176.65 195.40,176.83 196.05,177.02 196.70,177.21 197.35,177.40 198.01,177.59 198.66,177.79 199.31,177.99 199.96,178.19 200.62,178.39 201.27,178.60 201.92,178.81 202.57,179.02 203.22,179.24 203.88,179.46 204.53,179.68 205.18,179.91 205.83,180.13 206.49,180.37 207.14,180.60 207.79,180.84 208.44,181.08 209.09,181.32 209.75,181.57 210.40,181.82 211.05,182.07 211.70,182.33 212.36,182.59 213.01,182.85 213.66,183.12 214.31,183.39 214.96,183.66 215.62,183.94 216.27,184.22 216.92,184.50 217.57,184.79 218.23,185.08 218.88,185.37 219.53,185.67 220.18,185.97 220.83,186.28 221.49,186.58 222.14,186.90 222.79,187.21 223.44,187.53 224.10,187.85 224.75,188.18 225.40,188.51 226.05,188.84 226.70,189.18 227.36,189.52 228.01,189.86 228.66,190.21 229.31,190.56 229.96,190.91 230.62,191.27 231.27,191.63 231.92,192.00 232.57,192.37 233.23,192.74 233.88,193.11 234.53,193.49 235.18,193.87 235.83,194.26 236.49,194.65 237.14,195.04 237.79,195.43 238.44,195.83 239.10,196.23 239.75,196.63 240.40,197.04 241.05,197.45 241.70,197.86 242.36,198.28 243.01,198.70 243.66,199.12 244.31,199.54 244.97,199.97 245.62,200.40 246.27,200.83 246.92,201.27 247.57,201.70 248.23,202.14 248.88,202.58 249.53,203.02 250.18,203.47 250.84,203.92 251.49,204.36 252.14,204.81 252.79,205.27 253.44,205.72 254.10,206.17 254.75,206.63 255.40,207.09 256.05,207.54 256.71,208.00 257.36,208.46 258.01,208.92 258.66,209.39 259.31,209.85 259.97,210.31 260.62,210.77 261.27,211.24 261.92,211.70 262.58,212.16 263.23,212.63 263.88,213.09 264.53,213.55 265.18,214.01 265.84,214.47 266.49,214.94 267.14,215.40 267.79,215.85 268.45,216.31 269.10,216.77 269.75,217.23 270.40,217.68 271.05,218.13 271.71,218.59 272.36,219.04 273.01,219.48 273.66,219.93 274.32,220.38 274.97,220.82 275.62,221.26 276.27,221.70 276.92,222.13 277.58,222.57 278.23,223.00 278.88,223.43 279.53,223.86 280.19,224.28 280.84,224.70 281.49,225.12 282.14,225.53 282.79,225.95 283.45,226.36 284.10,226.76 284.75,227.17 285.40,227.57 286.06,227.96 286.71,228.36 287.36,228.75 288.01,229.14 288.66,229.52 289.32,229.90 289.97,230.28 290.62,230.65 291.27,231.02 291.92,231.39 292.58,231.75 293.23,232.11 293.88,232.46 294.53,232.82 295.19,233.16 295.84,233.51 296.49,233.85 297.14,234.19 297.79,234.52 298.45,234.85 299.10,235.17 299.75,235.50 300.40,235.81 301.06,236.13 301.71,236.44 302.36,236.75 303.01,237.05 303.66,237.35 304.32,237.65 304.97,237.94 305.62,238.23 306.27,238.51 306.93,238.79 307.58,239.07 308.23,239.34 308.88,239.61 309.53,239.88 310.19,240.14 310.84,240.40 311.49,240.65 312.14,240.91 312.80,241.15 313.45,241.40 314.10,241.64 314.75,241.88 315.40,242.11 316.06,242.34 316.71,242.57 317.36,242.79 318.01,243.01 318.67,243.23 319.32,243.44 319.97,243.65 320.62,243.86 321.27,244.06 321.93,244.26 322.58,244.46 323.23,244.66 323.88,244.85 324.54,245.03 325.19,245.22 325.84,245.40 326.49,245.58 327.14,245.75 327.80,245.92 328.45,246.09 329.10,246.26 329.75,246.42 330.41,246.58 331.06,246.74 331.71,246.90 332.36,247.05 333.01,247.20 333.67,247.34 334.32,247.49 334.97,247.63 335.62,247.76 336.28,247.90 336.93,248.03 337.58,248.16 338.23,248.29 338.88,248.41 339.54,248.53 340.19,248.65 340.84,248.77 341.49,248.88 342.15,249.00 342.80,249.11 343.45,249.21 344.10,249.32 344.75,249.42 345.41,249.52 346.06,249.61 346.71,249.71 347.36,249.80 348.02,249.89 348.67,249.98 349.32,250.06 349.97,250.15 350.62,250.23 351.28,250.31 351.93,250.38 352.58,250.46 353.23,250.53 353.88,250.60 354.54,250.67 355.19,250.73 355.84,250.79 356.49,250.85 357.15,250.91 357.80,250.97 358.45,251.02 359.10,251.08 359.75,251.13 360.41,251.17 361.06,251.22 361.71,251.27 362.36,251.31 363.02,251.35 363.67,251.39 364.32,251.42 364.97,251.45 365.62,251.49 366.28,251.52 366.93,251.54 367.58,251.57 368.23,251.59 368.89,251.62 369.54,251.64 370.19,251.65 370.84,251.67 371.49,251.68 372.15,251.70 372.80,251.71 373.45,251.71 374.10,251.72 374.76,251.72 375.41,251.73 376.06,251.73 376.71,251.73 377.36,251.72 378.02,251.72 378.67,251.71 379.32,251.70 379.97,251.69 380.63,251.67 381.28,251.66 381.93,251.64 382.58,251.62 383.23,251.60 383.89,251.58 384.54,251.55 385.19,251.53 385.84,251.50 386.50,251.46 387.15,251.43 387.80,251.40 388.45,251.36 389.10,251.32 389.76,251.28 390.41,251.23 391.06,251.19 391.71,251.14 392.37,251.09 393.02,251.04 393.67,250.99 394.32,250.93 394.97,250.87 395.63,250.81 396.28,250.75 396.93,250.68 397.58,250.62 398.24,250.55 398.89,250.48 399.54,250.40 400.19,250.33 400.84,250.25 401.50,250.17 402.15,250.09 402.80,250.00 403.45,249.92 404.11,249.83 404.76,249.74 405.41,249.64 406.06,249.55 406.71,249.45 407.37,249.35 408.02,249.24 408.67,249.14 409.32,249.03 409.97,248.92 410.63,248.80 411.28,248.69 411.93,248.57 412.58,248.45 413.24,248.33 413.89,248.20 414.54,248.07 415.19,247.94 415.84,247.80 416.50,247.67 417.15,247.53 417.80,247.39 418.45,247.24 419.11,247.09 419.76,246.94 420.41,246.79 421.06,246.63 421.71,246.47 422.37,246.31 423.02,246.14 423.67,245.98 424.32,245.80 424.98,245.63 425.63,245.45 426.28,245.27 426.93,245.09 427.58,244.90 428.24,244.71 428.89,244.52 429.54,244.32 430.19,244.12 430.85,243.92 431.50,243.71 432.15,243.51 432.80,243.29 433.45,243.08 434.11,242.86 434.76,242.64 435.41,242.41 436.06,242.18 436.72,241.95 437.37,241.71 438.02,241.47 438.67,241.23 439.32,240.98 439.98,240.73 440.63,240.47 441.28,240.22 441.93,239.96 442.59,239.69 443.24,239.42 443.89,239.15 444.54,238.87 445.19,238.59 445.85,238.31 446.50,238.02 447.15,237.73 447.80,237.44 448.46,237.14 449.11,236.84 449.76,236.53 450.41,236.22 451.06,235.91 451.72,235.59 452.37,235.27 453.02,234.95 453.67,234.62 454.33,234.28 454.98,233.95 455.63,233.61 456.28,233.27 456.93,232.92 457.59,232.57 458.24,232.21 458.89,231.86 459.54,231.49 460.20,231.13 460.85,230.76 461.50,230.39 462.15,230.01 462.80,229.63 463.46,229.25 464.11,228.86 464.76,228.47 465.41,228.08 466.07,227.69 466.72,227.29 467.37,226.88 468.02,226.48 468.67,226.07 469.33,225.66 469.98,225.24 470.63,224.82 471.28,224.40 471.93,223.98 472.59,223.56 473.24,223.13 473.89,222.70 474.54,222.26 475.20,221.83 475.85,221.39 476.50,220.95 477.15,220.51 477.80,220.06 478.46,219.62 479.11,219.17 479.76,218.72 480.41,218.27 481.07,217.82 481.72,217.36 482.37,216.91 483.02,216.45 483.67,215.99 484.33,215.53 484.98,215.07 485.63,214.61 486.28,214.15 486.94,213.69 487.59,213.23 488.24,212.76 488.89,212.30 489.54,211.84 490.20,211.37 490.85,210.91 491.50,210.45 492.15,209.98 492.81,209.52 493.46,209.06 494.11,208.60 494.76,208.14 495.41,207.68 496.07,207.22 496.72,206.76 497.37,206.31 498.02,205.85 498.68,205.40 499.33,204.95 499.98,204.50 500.63,204.05 501.28,203.60 501.94,203.16 502.59,202.71 503.24,202.27 503.89,201.83 504.55,201.39 505.20,200.96 505.85,200.53 506.50,200.10 507.15,199.67 507.81,199.25 508.46,198.82 509.11,198.40 509.76,197.99 510.42,197.57 511.07,197.16 511.72,196.75 512.37,196.35 513.02,195.95 513.68,195.55 514.33,195.15 514.98,194.76 515.63,194.37 516.29,193.99 516.94,193.60 517.59,193.22 518.24,192.85 518.89,192.47 519.55,192.11 520.20,191.74 520.85,191.38 521.50,191.02 522.16,190.66 522.81,190.31 523.46,189.96 524.11,189.62 524.76,189.28 525.42,188.94 526.07,188.61 526.72,188.28 527.37,187.95 528.03,187.62 528.68,187.31 529.33,186.99 529.98,186.68 530.63,186.37 531.29,186.06 531.94,185.76 532.59,185.46 533.24,185.17 533.89,184.87 534.55,184.59 535.20,184.30 535.85,184.02 536.50,183.74 537.16,183.47 537.81,183.20 538.46,182.93 539.11,182.67 539.76,182.40 540.42,182.15 541.07,181.89 541.72,181.64 542.37,181.39 543.03,181.15 543.68,180.91 544.33,180.67 544.98,180.43 545.63,180.20 546.29,179.97 546.94,179.75 547.59,179.52 548.24,179.30 548.90,179.09 549.55,178.87 550.20,178.66 550.85,178.45 551.50,178.25 552.16,178.05 552.81,177.85 553.46,177.65 554.11,177.45 554.77,177.26 555.42,177.07 556.07,176.89 556.72,176.70 557.37,176.52 558.03,176.34 558.68,176.17 559.33,175.99 559.98,175.82 560.64,175.65 561.29,175.49 561.94,175.32 562.59,175.16 563.24,175.00 563.90,174.85 564.55,174.69 565.20,174.54 565.85,174.39 566.51,174.24 567.16,174.09 567.81,173.95 568.46,173.81 569.11,173.67 569.77,173.53 570.42,173.40 571.07,173.26 571.72,173.13 572.38,173.00 573.03,172.87 573.68,172.75 574.33,172.62 574.98,172.50 575.64,172.38 576.29,172.26 576.94,172.14 577.59,172.03 578.25,171.91 578.90,171.80 579.55,171.69 580.20,171.58 580.85,171.48 581.51,171.37 582.16,171.27 582.81,171.17 583.46,171.06 584.12,170.96 584.77,170.87 585.42,170.77 586.07,170.68 586.72,170.58 587.38,170.49 588.03,170.40 588.68,170.31 589.33,170.22 589.98,170.14 590.64,170.05 591.29,169.97 591.94,169.88 592.59,169.80 593.25,169.72 593.90,169.64 594.55,169.56 595.20,169.49 595.85,169.41 596.51,169.34 597.16,169.26 597.81,169.19 598.46,169.12 599.12,169.05 599.77,168.98 600.42,168.91 601.07,168.85 601.72,168.78 602.38,168.71 603.03,168.65 603.68,168.59 604.33,168.52 604.99,168.46 605.64,168.40 606.29,168.34 606.94,168.29 607.59,168.23 608.25,168.17 608.90,168.12 609.55,168.06 610.20,168.01 610.86,167.95 611.51,167.90 612.16,167.85 612.81,167.80 613.46,167.75 614.12,167.70 614.77,167.65 615.42,167.60 616.07,167.55 616.73,167.51 617.38,167.46 618.03,167.42 618.68,167.37 619.33,167.33 619.99,167.29 620.64,167.24 621.29,167.20 621.94,167.16 622.60,167.12 623.25,167.08 623.90,167.04 624.55,167.00 625.20,166.96 625.86,166.93 626.51,166.89 627.16,166.85 627.81,166.82 628.47,166.78 629.12,166.75 629.77,166.71 630.42,166.68 631.07,166.65 631.73,166.61 632.38,166.58 633.03,166.55 633.68,166.52 634.34,166.49 634.99,166.46 635.64,166.43 636.29,166.40 636.94,166.37 637.60,166.34 638.25,166.31 638.90,166.28 639.55,166.26 640.21,166.23 640.86,166.20 641.51,166.18 642.16,166.15 642.81,166.13 643.47,166.10 644.12,166.08 644.77,166.05 645.42,166.03 646.08,166.01 646.73,165.98 647.38,165.96 648.03,165.94 648.68,165.92 649.34,165.90 649.99,165.87 650.64,165.85 651.29,165.83 651.94,165.81 652.60,165.79 653.25,165.77 653.90,165.75 654.55,165.73 655.21,165.72 655.86,165.70 656.51,165.68 657.16,165.66 657.81,165.64 658.47,165.63 659.12,165.61 659.77,165.59 660.42,165.58 661.08,165.56 661.73,165.54 662.38,165.53 663.03,165.51 663.68,165.50 664.34,165.48 664.99,165.47 665.64,165.45 666.29,165.44 666.95,165.42 667.60,165.41 668.25,165.39 668.90,165.38 669.55,165.37 670.21,165.35 670.86,165.34 671.51,165.33 672.16,165.32 672.82,165.30 673.47,165.29 674.12,165.28 674.77,165.27 675.42,165.26 676.08,165.24 676.73,165.23 677.38,165.22 678.03,165.21 678.69,165.20 679.34,165.19 679.99,165.18 680.64,165.17 681.29,165.16 681.95,165.15 682.60,165.14 683.25,165.13 683.90,165.12 684.56,165.11 685.21,165.10 685.86,165.09 686.51,165.08 687.16,165.07 687.82,165.06 688.47,165.06 689.12,165.05 689.77,165.04 690.43,165.03 691.08,165.02 691.73,165.01 692.38,165.01 693.03,165.00 693.69,164.99 694.34,164.98 694.99,164.98 695.64,164.97 696.30,164.96 696.95,164.95 697.60,164.95 698.25,164.94 698.90,164.93 699.56,164.93 700.21,164.92 700.86,164.91 701.51,164.91 702.17,164.90 702.82,164.90 703.47,164.89 704.12,164.88 704.77,164.88 705.43,164.87 706.08,164.87 706.73,164.86 707.38,164.86 708.04,164.85 708.69,164.85 709.34,164.84 709.99,164.83 710.64,164.83 711.30,164.82 711.95,164.82 712.60,164.81 713.25,164.81 713.90,164.81 714.56,164.80 715.21,164.80 715.86,164.79 716.51,164.79 717.17,164.78 717.82,164.78 718.47,164.77 719.12,164.77 719.77,164.77 720.43,164.76 721.08,164.76 721.73,164.75 722.38,164.75 723.04,164.75 723.69,164.74 724.34,164.74 724.99,164.73 725.64,164.73 726.30,164.73 726.95,164.72 727.60,164.72 728.25,164.72 728.91,164.71 729.56,164.71 730.21,164.71 730.86,164.70 731.51,164.70 732.17,164.70 732.82,164.70 733.47,164.69 734.12,164.69 734.78,164.69 735.43,164.68 736.08,164.68 736.73,164.68 737.38,164.68 738.04,164.67 738.69,164.67 739.34,164.67 739.99,164.67 740.65,164.66 741.30,164.66 741.95,164.66 742.60,164.66 743.25,164.65 743.91,164.65 744.56,164.65 745.21,164.65 745.86,164.64 746.52,164.64 747.17,164.64 747.82,164.64 748.47,164.64 749.12,164.63 749.78,164.63 750.43,164.63 751.08,164.63 751.73,164.63 752.39,164.62 753.04,164.62 753.69,164.62 754.34,164.62 754.99,164.62 755.65,164.61 756.30,164.61 756.95,164.61 757.60,164.61 758.26,164.61 758.91,164.61 759.56,164.60 760.21,164.60 760.86,164.60 761.52,164.60 762.17,164.60 762.82,164.60 763.47,164.59 764.13,164.59 764.78,164.59 765.43,164.59 766.08,164.59 766.73,164.59 767.39,164.59 768.04,164.59 768.69,164.58 769.34,164.58 769.99,164.58 770.65,164.58 771.30,164.58 771.95,164.58 772.60,164.58 773.26,164.58 773.91,164.57 774.56,164.57 775.21,164.57 775.86,164.57 776.52,164.57 777.17,164.57 777.82,164.57 778.47,164.57 779.13,164.57 779.78,164.56 780.43,164.56 781.08,164.56 781.73,164.56 782.39,164.56 783.04,164.56 783.69,164.56 784.34,164.56 785.00,164.56 785.65,164.56 786.30,164.56 786.95,164.55 787.60,164.55 788.26,164.55 788.91,164.55 789.56,164.55 790.21,164.55 790.87,164.55 791.52,164.55 792.17,164.55 792.82,164.55 793.47,164.55 794.13,164.55 794.78,164.55 795.43,164.54 796.08,164.54 796.74,164.54 797.39,164.54 798.04,164.54 798.69,164.54 799.34,164.54 800.00,164.54 800.65,164.54 801.30,164.54 801.95,164.54 802.61,164.54 803.26,164.54 803.91,164.54 804.56,164.54 805.21,164.54 805.87,164.53 806.52,164.53 807.17,164.53 807.82,164.53 808.48,164.53 809.13,164.53 809.78,164.53 810.43,164.53 811.08,164.53 811.74,164.53 812.39,164.53 813.04,164.53 813.69,164.53 814.35,164.53 815.00,164.53 815.65,164.53 816.30,164.53 816.95,164.53 817.61,164.53 818.26,164.53 818.91,164.53 819.56,164.53 820.22,164.52 820.87,164.52 821.52,164.52 822.17,164.52 822.82,164.52 823.48,164.52 824.13,164.52 824.78,164.52 825.43,164.52 826.09,164.52 826.74,164.52 827.39,164.52 828.04,164.52 828.69,164.52 829.35,164.52 830.00,164.52 830.65,164.52 831.30,164.52 831.95,164.52 832.61,164.52 833.26,164.52 833.91,164.52 834.56,164.52 835.22,164.52 835.87,164.52 836.52,164.52 837.17,164.52 837.82,164.52 838.48,164.52 839.13,164.52 839.78,164.52 840.43,164.52 841.09,164.52 841.74,164.52 842.39,164.51 843.04,164.51 843.69,164.51 844.35,164.51 845.00,164.51 845.65,164.51 846.30,164.51 846.96,164.51 847.61,164.51 848.26,164.51 848.91,164.51 849.56,164.51 850.22,164.51 850.87,164.51 851.52,164.51 852.17,164.51 852.83,164.51 853.48,164.51 854.13,164.51 854.78,164.51 855.43,164.51 856.09,164.51 856.74,164.51 857.39,164.51 858.04,164.51 858.70,164.51 859.35,164.51 860.00,164.51" stroke="#10c0c0" stroke-width="1" fill="none" stroke-dasharray="3,3" shape-rendering="crispEdges" transform="translate(-1,0)"/>
<path d="M78.00,288.03 78.65,288.03 79.30,288.03 79.96,288.03 80.61,288.03 81.26,288.03 81.91,288.03 82.57,288.03 83.22,288.03 83.87,288.03 84.52,288.03 85.17,288.03 85.83,288.03 86.48,288.03 87.13,288.03 87.78,288.03 88.44,288.03 89.09,288.03 89.74,288.03 90.39,288.03 91.04,288.03 91.70,288.03 92.35,288.03 93.00,288.03 93.65,288.03 94.31,288.03 94.96,288.03 95.61,288.03 96.26,288.03 96.91,288.03 97.57,288.03 98.22,288.03 98.87,288.03 99.52,288.03 100.18,288.03 100.83,288.03 101.48,288.03 102.13,288.03 102.78,288.03 103.44,288.03 104.09,288.03 104.74,288.03 105.39,288.03 106.05,288.03 106.70,288.03 107.35,288.03 108.00,288.03 108.65,288.03 109.31,288.03 109.96,288.03 110.61,288.03 111.26,288.03 111.91,288.03 112.57,288.03 113.22,288.03 113.87,288.03 114.52,288.03 115.18,288.03 115.83,288.03 116.48,288.03 117.13,288.03 117.78,288.04 118.44,288.04 119.09,288.04 119.74,288.04 120.39,288.04 121.05,288.04 121.70,288.04 122.35,288.04 123.00,288.04 123.65,288.04 124.31,288.04 124.96,288.04 125.61,288.04 126.26,288.04 126.92,288.04 127.57,288.04 128.22,288.04 128.87,288.04 129.52,288.04 130.18,288.04 130.83,288.04 131.48,288.04 132.13,288.04 132.79,288.04 133.44,288.04 134.09,288.04 134.74,288.05 135.39,288.05 136.05,288.05 136.70,288.05 137.35,288.05 138.00,288.05 138.66,288.05 139.31,288.05 139.96,288.05 140.61,288.05 141.26,288.05 141.92,288.05 142.57,288.05 143.22,288.05 143.87,288.06 144.53,288.06 145.18,288.06 145.83,288.06 146.48,288.06 147.13,288.06 147.79,288.06 148.44,288.06 149.09,288.06 149.74,288.06 150.40,288.07 151.05,288.07 151.70,288.07 152.35,288.07 153.00,288.07 153.66,288.07 154.31,288.07 154.96,288.08 155.61,288.08 156.27,288.08 156.92,288.08 157.57,288.08 158.22,288.08 158.87,288.09 159.53,288.09 160.18,288.09 160.83,288.09 161.48,288.09 162.14,288.09 162.79,288.10 163.44,288.10 164.09,288.10 164.74,288.10 165.40,288.11 166.05,288.11 166.70,288.11 167.35,288.11 168.01,288.12 168.66,288.12 169.31,288.12 169.96,288.13 170.61,288.13 171.27,288.13 171.92,288.13 172.57,288.14 173.22,288.14 173.87,288.15 174.53,288.15 175.18,288.15 175.83,288.16 176.48,288.16 177.14,288.16 177.79,288.17 178.44,288.17 179.09,288.18 179.74,288.18 180.40,288.19 181.05,288.19 181.70,288.20 182.35,288.20 183.01,288.21 183.66,288.21 184.31,288.22 184.96,288.23 185.61,288.23 186.27,288.24 186.92,288.24 187.57,288.25 188.22,288.26 188.88,288.27 189.53,288.27 190.18,288.28 190.83,288.29 191.48,288.30 192.14,288.30 192.79,288.31 193.44,288.32 194.09,288.33 194.75,288.34 195.40,288.35 196.05,288.36 196.70,288.37 197.35,288.38 198.01,288.39 198.66,288.40 199.31,288.41 199.96,288.42 200.62,288.44 201.27,288.45 201.92,288.46 202.57,288.48 203.22,288.49 203.88,288.50 204.53,288.52 205.18,288.53 205.83,288.55 206.49,288.56 207.14,288.58 207.79,288.60 208.44,288.61 209.09,288.63 209.75,288.65 210.40,288.67 211.05,288.69 211.70,288.71 212.36,288.73 213.01,288.75 213.66,288.77 214.31,288.79 214.96,288.81 215.62,288.84 216.27,288.86 216.92,288.89 217.57,288.91 218.23,288.94 218.88,288.96 219.53,288.99 220.18,289.02 220.83,289.05 221.49,289.08 222.14,289.11 222.79,289.14 223.44,289.17 224.10,289.21 224.75,289.24 225.40,289.27 226.05,289.31 226.70,289.35 227.36,289.38 228.01,289.42 228.66,289.46 229.31,289.50 229.96,289.55 230.62,289.59 231.27,289.63 231.92,289.68 232.57,289.72 233.23,289.77 233.88,289.82 234.53,289.87 235.18,289.92 235.83,289.97 236.49,290.03 237.14,290.08 237.79,290.14 238.44,290.20 239.10,290.25 239.75,290.31 240.40,290.38 241.05,290.44 241.70,290.50 242.36,290.57 243.01,290.64 243.66,290.70 244.31,290.78 244.97,290.85 245.62,290.92 246.27,291.00 246.92,291.07 247.57,291.15 248.23,291.23 248.88,291.31 249.53,291.39 250.18,291.48 250.84,291.57 251.49,291.65 252.14,291.74 252.79,291.83 253.44,291.93 254.10,292.02 254.75,292.12 255.40,292.22 256.05,292.32 256.71,292.42 257.36,292.52 258.01,292.63 258.66,292.74 259.31,292.85 259.97,292.96 260.62,293.07 261.27,293.19 261.92,293.30 262.58,293.42 263.23,293.54 263.88,293.66 264.53,293.79 265.18,293.91 265.84,294.04 266.49,294.17 267.14,294.30 267.79,294.43 268.45,294.57 269.10,294.70 269.75,294.84 270.40,294.98 271.05,295.12 271.71,295.27 272.36,295.41 273.01,295.56 273.66,295.71 274.32,295.86 274.97,296.01 275.62,296.17 276.27,296.32 276.92,296.48 277.58,296.64 278.23,296.80 278.88,296.96 279.53,297.12 280.19,297.29 280.84,297.45 281.49,297.62 282.14,297.79 282.79,297.96 283.45,298.14 284.10,298.31 284.75,298.49 285.40,298.66 286.06,298.84 286.71,299.02 287.36,299.20 288.01,299.38 288.66,299.57 289.32,299.75 289.97,299.94 290.62,300.12 291.27,300.31 291.92,300.50 292.58,300.69 293.23,300.89 293.88,301.08 294.53,301.27 295.19,301.47 295.84,301.66 296.49,301.86 297.14,302.06 297.79,302.26 298.45,302.46 299.10,302.66 299.75,302.86 300.40,303.07 301.06,303.27 301.71,303.48 302.36,303.68 303.01,303.89 303.66,304.09 304.32,304.30 304.97,304.51 305.62,304.72 306.27,304.93 306.93,305.14 307.58,305.36 308.23,305.57 308.88,305.78 309.53,306.00 310.19,306.21 310.84,306.42 311.49,306.64 312.14,306.86 312.80,307.07 313.45,307.29 314.10,307.51 314.75,307.73 315.40,307.95 316.06,308.17 316.71,308.39 317.36,308.61 318.01,308.83 318.67,309.05 319.32,309.27 319.97,309.50 320.62,309.72 321.27,309.94 321.93,310.17 322.58,310.39 323.23,310.61 323.88,310.84 324.54,311.06 325.19,311.29 325.84,311.52 326.49,311.74 327.14,311.97 327.80,312.19 328.45,312.42 329.10,312.65 329.75,312.88 330.41,313.11 331.06,313.33 331.71,313.56 332.36,313.79 333.01,314.02 333.67,314.25 334.32,314.48 334.97,314.71 335.62,314.94 336.28,315.17 336.93,315.40 337.58,315.63 338.23,315.86 338.88,316.09 339.54,316.32 340.19,316.55 340.84,316.79 341.49,317.02 342.15,317.25 342.80,317.48 343.45,317.71 344.10,317.95 344.75,318.18 345.41,318.41 346.06,318.64 346.71,318.88 347.36,319.11 348.02,319.34 348.67,319.57 349.32,319.81 349.97,320.04 350.62,320.28 351.28,320.51 351.93,320.74 352.58,320.98 353.23,321.21 353.88,321.44 354.54,321.68 355.19,321.91 355.84,322.15 356.49,322.38 357.15,322.62 357.80,322.85 358.45,323.08 359.10,323.32 359.75,323.55 360.41,323.79 361.06,324.02 361.71,324.26 362.36,324.49 363.02,324.73 363.67,324.96 364.32,325.20 364.97,325.43 365.62,325.67 366.28,325.90 366.93,326.14 367.58,326.37 368.23,326.61 368.89,326.84 369.54,327.08 370.19,327.31 370.84,327.55 371.49,327.78 372.15,328.02 372.80,328.25 373.45,328.49 374.10,328.73 374.76,328.96 375.41,329.20 376.06,329.43 376.71,329.67 377.36,329.90 378.02,330.14 378.67,330.37 379.32,330.61 379.97,330.84 380.63,331.08 381.28,331.31 381.93,331.55 382.58,331.79 383.23,332.02 383.89,332.26 384.54,332.49 385.19,332.73 385.84,332.96 386.50,333.20 387.15,333.43 387.80,333.67 388.45,333.90 389.10,334.14 389.76,334.37 390.41,334.61 391.06,334.84 391.71,335.08 392.37,335.31 393.02,335.55 393.67,335.78 394.32,336.02 394.97,336.25 395.63,336.48 396.28,336.72 396.93,336.95 397.58,337.19 398.24,337.42 398.89,337.66 399.54,337.89 400.19,338.12 400.84,338.36 401.50,338.59 402.15,338.83 402.80,339.06 403.45,339.29 404.11,339.53 404.76,339.76 405.41,339.99 406.06,340.23 406.71,340.46 407.37,340.69 408.02,340.93 408.67,341.16 409.32,341.39 409.97,341.62 410.63,341.85 411.28,342.09 411.93,342.32 412.58,342.55 413.24,342.78 413.89,343.01 414.54,343.24 415.19,343.48 415.84,343.71 416.50,343.94 417.15,344.17 417.80,344.40 418.45,344.63 419.11,344.86 419.76,345.09 420.41,345.32 421.06,345.55 421.71,345.78 422.37,346.00 423.02,346.23 423.67,346.46 424.32,346.69 424.98,346.92 425.63,347.14 426.28,347.37 426.93,347.60 427.58,347.82 428.24,348.05 428.89,348.27 429.54,348.50 430.19,348.73 430.85,348.95 431.50,349.17 432.15,349.40 432.80,349.62 433.45,349.84 434.11,350.07 434.76,350.29 435.41,350.51 436.06,350.73 436.72,350.95 437.37,351.17 438.02,351.39 438.67,351.61 439.32,351.83 439.98,352.05 440.63,352.27 441.28,352.49 441.93,352.70 442.59,352.92 443.24,353.13 443.89,353.35 444.54,353.56 445.19,353.78 445.85,353.99 446.50,354.20 447.15,354.41 447.80,354.62 448.46,354.83 449.11,355.04 449.76,355.25 450.41,355.46 451.06,355.67 451.72,355.87 452.37,356.08 453.02,356.28 453.67,356.49 454.33,356.69 454.98,356.89 455.63,357.09 456.28,357.29 456.93,357.49 457.59,357.69 458.24,357.88 458.89,358.08 459.54,358.27 460.20,358.47 460.85,358.66 461.50,358.85 462.15,359.04 462.80,359.23 463.46,359.42 464.11,359.61 464.76,359.79 465.41,359.98 466.07,360.16 466.72,360.34 467.37,360.52 468.02,360.70 468.67,360.88 469.33,361.05 469.98,361.23 470.63,361.40 471.28,361.57 471.93,361.74 472.59,361.91 473.24,362.08 473.89,362.24 474.54,362.41 475.20,362.57 475.85,362.73 476.50,362.89 477.15,363.05 477.80,363.21 478.46,363.36 479.11,363.51 479.76,363.66 480.41,363.81 481.07,363.96 481.72,364.11 482.37,364.25 483.02,364.40 483.67,364.54 484.33,364.68 484.98,364.81 485.63,364.95 486.28,365.08 486.94,365.21 487.59,365.34 488.24,365.47 488.89,365.60 489.54,365.72 490.20,365.85 490.85,365.97 491.50,366.09 492.15,366.20 492.81,366.32 493.46,366.43 494.11,366.55 494.76,366.66 495.41,366.76 496.07,366.87 496.72,366.98 497.37,367.08 498.02,367.18 498.68,367.28 499.33,367.38 499.98,367.47 500.63,367.57 501.28,367.66 501.94,367.75 502.59,367.84 503.24,367.93 503.89,368.01 504.55,368.10 505.20,368.18 505.85,368.26 506.50,368.34 507.15,368.41 507.81,368.49 508.46,368.56 509.11,368.64 509.76,368.71 510.42,368.78 511.07,368.84 511.72,368.91 512.37,368.98 513.02,369.04 513.68,369.10 514.33,369.16 514.98,369.22 515.63,369.28 516.29,369.34 516.94,369.39 517.59,369.45 518.24,369.50 518.89,369.55 519.55,369.60 520.20,369.65 520.85,369.70 521.50,369.75 522.16,369.79 522.81,369.84 523.46,369.88 524.11,369.92 524.76,369.96 525.42,370.00 526.07,370.04 526.72,370.08 527.37,370.12 528.03,370.15 528.68,370.19 529.33,370.22 529.98,370.26 530.63,370.29 531.29,370.32 531.94,370.35 532.59,370.38 533.24,370.41 533.89,370.44 534.55,370.47 535.20,370.50 535.85,370.52 536.50,370.55 537.16,370.57 537.81,370.60 538.46,370.62 539.11,370.64 539.76,370.67 540.42,370.69 541.07,370.71 541.72,370.73 542.37,370.75 543.03,370.77 543.68,370.79 544.33,370.81 544.98,370.82 545.63,370.84 546.29,370.86 546.94,370.87 547.59,370.89 548.24,370.91 548.90,370.92 549.55,370.94 550.20,370.95 550.85,370.96 551.50,370.98 552.16,370.99 552.81,371.00 553.46,371.01 554.11,371.03 554.77,371.04 555.42,371.05 556.07,371.06 556.72,371.07 557.37,371.08 558.03,371.09 558.68,371.10 559.33,371.11 559.98,371.12 560.64,371.13 561.29,371.14 561.94,371.15 562.59,371.15 563.24,371.16 563.90,371.17 564.55,371.18 565.20,371.18 565.85,371.19 566.51,371.20 567.16,371.20 567.81,371.21 568.46,371.22 569.11,371.22 569.77,371.23 570.42,371.23 571.07,371.24 571.72,371.25 572.38,371.25 573.03,371.26 573.68,371.26 574.33,371.27 574.98,371.27 575.64,371.27 576.29,371.28 576.94,371.28 577.59,371.29 578.25,371.29 578.90,371.29 579.55,371.30 580.20,371.30 580.85,371.31 581.51,371.31 582.16,371.31 582.81,371.32 583.46,371.32 584.12,371.32 584.77,371.32 585.42,371.33 586.07,371.33 586.72,371.33 587.38,371.34 588.03,371.34 588.68,371.34 589.33,371.34 589.98,371.34 590.64,371.35 591.29,371.35 591.94,371.35 592.59,371.35 593.25,371.36 593.90,371.36 594.55,371.36 595.20,371.36 595.85,371.36 596.51,371.36 597.16,371.37 597.81,371.37 598.46,371.37 599.12,371.37 599.77,371.37 600.42,371.37 601.07,371.37 601.72,371.38 602.38,371.38 603.03,371.38 603.68,371.38 604.33,371.38 604.99,371.38 605.64,371.38 606.29,371.38 606.94,371.39 607.59,371.39 608.25,371.39 608.90,371.39 609.55,371.39 610.20,371.39 610.86,371.39 611.51,371.39 612.16,371.39 612.81,371.39 613.46,371.39 614.12,371.39 614.77,371.40 615.42,371.40 616.07,371.40 616.73,371.40 617.38,371.40 618.03,371.40 618.68,371.40 619.33,371.40 619.99,371.40 620.64,371.40 621.29,371.40 621.94,371.40 622.60,371.40 623.25,371.40 623.90,371.40 624.55,371.40 625.20,371.40 625.86,371.41 626.51,371.41 627.16,371.41 627.81,371.41 628.47,371.41 629.12,371.41 629.77,371.41 630.42,371.41 631.07,371.41 631.73,371.41 632.38,371.41 633.03,371.41 633.68,371.41 634.34,371.41 634.99,371.41 635.64,371.41 636.29,371.41 636.94,371.41 637.60,371.41 638.25,371.41 638.90,371.41 639.55,371.41 640.21,371.41 640.86,371.41 641.51,371.41 642.16,371.41 642.81,371.41 643.47,371.41 644.12,371.41 644.77,371.41 645.42,371.41 646.08,371.41 646.73,371.41 647.38,371.41 648.03,371.41 648.68,371.41 649.34,371.41 649.99,371.41 650.64,371.41 651.29,371.41 651.94,371.41 652.60,371.41 653.25,371.41 653.90,371.42 654.55,371.42 655.21,371.42 655.86,371.42 656.51,371.42 657.16,371.42 657.81,371.42 658.47,371.42 659.12,371.42 659.77,371.42 660.42,371.42 661.08,371.42 661.73,371.42 662.38,371.42 663.03,371.42 663.68,371.42 664.34,371.42 664.99,371.42 665.64,371.42 666.29,371.42 666.95,371.42 667.60,371.42 668.25,371.42 668.90,371.42 669.55,371.42 670.21,371.42 670.86,371.42 671.51,371.42 672.16,371.42 672.82,371.42 673.47,371.42 674.12,371.42 674.77,371.42 675.42,371.42 676.08,371.42 676.73,371.42 677.38,371.42 678.03,371.42 678.69,371.42 679.34,371.42 679.99,371.42 680.64,371.42 681.29,371.42 681.95,371.42 682.60,371.42 683.25,371.42 683.90,371.42 684.56,371.42 685.21,371.42 685.86,371.42 686.51,371.42 687.16,371.42 687.82,371.42 688.47,371.42 689.12,371.42 689.77,371.42 690.43,371.42 691.08,371.42 691.73,371.42 692.38,371.42 693.03,371.42 693.69,371.42 694.34,371.42 694.99,371.42 695.64,371.42 696.30,371.42 696.95,371.42 697.60,371.42 698.25,371.42 698.90,371.42 699.56,371.42 700.21,371.42 700.86,371.42 701.51,371.42 702.17,371.42 702.82,371.42 703.47,371.42 704.12,371.42 704.77,371.42 705.43,371.42 706.08,371.42 706.73,371.42 707.38,371.42 708.04,371.42 708.69,371.42 709.34,371.42 709.99,371.42 710.64,371.42 711.30,371.42 711.95,371.42 712.60,371.42 713.25,371.42 713.90,371.42 714.56,371.42 715.21,371.42 715.86,371.42 716.51,371.42 717.17,371.42 717.82,371.42 718.47,371.42 719.12,371.42 719.77,371.42 720.43,371.42 721.08,371.42 721.73,371.42 722.38,371.42 723.04,371.42 723.69,371.42 724.34,371.42 724.99,371.42 725.64,371.42 726.30,371.42 726.95,371.42 727.60,371.42 728.25,371.42 728.91,371.42 729.56,371.42 730.21,371.42 730.86,371.42 731.51,371.42 732.17,371.42 732.82,371.42 733.47,371.42 734.12,371.42 734.78,371.42 735.43,371.42 736.08,371.42 736.73,371.42 737.38,371.42 738.04,371.42 738.69,371.42 739.34,371.42 739.99,371.42 740.65,371.42 741.30,371.42 741.95,371.42 742.60,371.42 743.25,371.42 743.91,371.42 744.56,371.42 745.21,371.42 745.86,371.42 746.52,371.42 747.17,371.42 747.82,371.42 748.47,371.42 749.12,371.42 749.78,371.42 750.43,371.42 751.08,371.42 751.73,371.42 752.39,371.42 753.04,371.42 753.69,371.42 754.34,371.42 754.99,371.42 755.65,371.42 756.30,371.42 756.95,371.42 757.60,371.42 758.26,371.42 758.91,371.42 759.56,371.42 760.21,371.42 760.86,371.42 761.52,371.42 762.17,371.42 762.82,371.42 763.47,371.42 764.13,371.42 764.78,371.42 765.43,371.42 766.08,371.42 766.73,371.42 767.39,371.42 768.04,371.42 768.69,371.42 769.34,371.42 769.99,371.42 770.65,371.42 771.30,371.42 771.95,371.42 772.60,371.42 773.26,371.42 773.91,371.42 774.56,371.42 775.21,371.42 775.86,371.42 776.52,371.42 777.17,371.42 777.82,371.42 778.47,371.42 779.13,371.42 779.78,371.42 780.43,371.42 781.08,371.42 781.73,371.42 782.39,371.42 783.04,371.42 783.69,371.42 784.34,371.42 785.00,371.42 785.65,371.42 786.30,371.42 786.95,371.42 787.60,371.42 788.26,371.42 788.91,371.42 789.56,371.42 790.21,371.42 790.87,371.42 791.52,371.42 792.17,371.42 792.82,371.42 793.47,371.42 794.13,371.42 794.78,371.42 795.43,371.42 796.08,371.42 796.74,371.42 797.39,371.42 798.04,371.42 798.69,371.42 799.34,371.42 800.00,371.42 800.65,371.42 801.30,371.42 801.95,371.42 802.61,371.42 803.26,371.42 803.91,371.42 804.56,371.42 805.21,371.42 805.87,371.42 806.52,371.42 807.17,371.42 807.82,371.42 808.48,371.42 809.13,371.42 809.78,371.42 810.43,371.42 811.08,371.42 811.74,371.42 812.39,371.42 813.04,371.42 813.69,371.42 814.35,371.42 815.00,371.42 815.65,371.42 816.30,371.42 816.95,371.42 817.61,371.42 818.26,371.42 818.91,371.42 819.56,371.42 820.22,371.42 820.87,371.42 821.52,371.42 822.17,371.42 822.82,371.42 823.48,371.42 824.13,371.42 824.78,371.42 825.43,371.42 826.09,371.42 826.74,371.42 827.39,371.42 828.04,371.42 828.69,371.42 829.35,371.42 830.00,371.42 830.65,371.42 831.30,371.42 831.95,371.42 832.61,371.42 833.26,371.42 833.91,371.42 834.56,371.42 835.22,371.42 835.87,371.42 836.52,371.42 837.17,371.42 837.82,371.42 838.48,371.42 839.13,371.42 839.78,371.42 840.43,371.42 841.09,371.42 841.74,371.42 842.39,371.42 843.04,371.42 843.69,371.42 844.35,371.42 845.00,371.42 845.65,371.42 846.30,371.42 846.96,371.42 847.61,371.42 848.26,371.42 848.91,371.42 849.56,371.42 850.22,371.42 850.87,371.42 851.52,371.42 852.17,371.42 852.83,371.42 853.48,371.42 854.13,371.42 854.78,371.42 855.43,371.42 856.09,371.42 856.74,371.42 857.39,371.42 858.04,371.42 858.70,371.42 859.35,371.42 860.00,371.42" stroke="#ff00ff" stroke-width="1" fill="none" shape-rendering="crispEdges"/>
<path d="M78.00,288.03 78.65,288.03 79.30,288.03 79.96,288.03 80.61,288.03 81.26,288.03 81.91,288.03 82.57,288.03 83.22,288.03 83.87,288.03 84.52,288.03 85.17,288.03 85.83,288.03 86.48,288.03 87.13,288.03 87.78,288.03 88.44,288.03 89.09,288.03 89.74,288.03 90.39,288.03 91.04,288.03 91.70,288.03 92.35,288.03 93.00,288.03 93.65,288.03 94.31,288.03 94.96,288.03 95.61,288.03 96.26,288.03 96.91,288.03 97.57,288.03 98.22,288.03 98.87,288.03 99.52,288.03 100.18,288.03 100.83,288.03 101.48,288.03 102.13,288.03 102.78,288.03 103.44,288.03 104.09,288.03 104.74,288.03 105.39,288.03 106.05,288.03 106.70,288.03 107.35,288.03 108.00,288.03 108.65,288.03 109.31,288.03 109.96,288.03 110.61,288.03 111.26,288.03 111.91,288.03 112.57,288.03 113.22,288.03 113.87,288.03 114.52,288.03 115.18,288.03 115.83,288.03 116.48,288.03 117.13,288.03 117.78,288.04 118.44,288.04 119.09,288.04 119.74,288.04 120.39,288.04 121.05,288.04 121.70,288.04 122.35,288.04 123.00,288.04 123.65,288.04 124.31,288.04 124.96,288.04 125.61,288.04 126.26,288.04 126.92,288.04 127.57,288.04 128.22,288.04 128.87,288.04 129.52,288.04 130.18,288.04 130.83,288.04 131.48,288.04 132.13,288.04 132.79,288.04 133.44,288.04 134.09,288.04 134.74,288.05 135.39,288.05 136.05,288.05 136.70,288.05 137.35,288.05 138.00,288.05 138.66,288.05 139.31,288.05 139.96,288.05 140.61,288.05 141.26,288.05 141.92,288.05 142.57,288.05 143.22,288.05 143.87,288.06 144.53,288.06 145.18,288.06 145.83,288.06 146.48,288.06 147.13,288.06 147.79,288.06 148.44,288.06 149.09,288.06 149.74,288.06 150.40,288.07 151.05,288.07 151.70,288.07 152.35,288.07 153.00,288.07 153.66,288.07 154.31,288.07 154.96,288.08 155.61,288.08 156.27,288.08 156.92,288.08 157.57,288.08 158.22,288.08 158.87,288.09 159.53,288.09 160.18,288.09 160.83,288.09 161.48,288.09 162.14,288.09 162.79,288.10 163.44,288.10 164.09,288.10 164.74,288.10 165.40,288.11 166.05,288.11 166.70,288.11 167.35,288.11 168.01,288.12 168.66,288.12 169.31,288.12 169.96,288.13 170.61,288.13 171.27,288.13 171.92,288.13 172.57,288.14 173.22,288.14 173.87,288.15 174.53,288.15 175.18,288.15 175.83,288.16 176.48,288.16 177.14,288.16 177.79,288.17 178.44,288.17 179.09,288.18 179.74,288.18 180.40,288.19 181.05,288.19 181.70,288.20 182.35,288.20 183.01,288.21 183.66,288.21 184.31,288.22 184.96,288.23 185.61,288.23 186.27,288.24 186.92,288.24 187.57,288.25 188.22,288.26 188.88,288.27 189.53,288.27 190.18,288.28 190.83,288.29 191.48,288.30 192.14,288.30 192.79,288.31 193.44,288.32 194.09,288.33 194.75,288.34 195.40,288.35 196.05,288.36 196.70,288.37 197.35,288.38 198.01,288.39 198.66,288.40 199.31,288.41 199.96,288.42 200.62,288.44 201.27,288.45 201.92,288.46 202.57,288.48 203.22,288.49 203.88,288.50 204.53,288.52 205.18,288.53 205.83,288.55 206.49,288.56 207.14,288.58 207.79,288.60 208.44,288.61 209.09,288.63 209.75,288.65 210.40,288.67 211.05,288.69 211.70,288.71 212.36,288.73 213.01,288.75 213.66,288.77 214.31,288.79 214.96,288.81 215.62,288.84 216.27,288.86 216.92,288.89 217.57,288.91 218.23,288.94 218.88,288.96 219.53,288.99 220.18,289.02 220.83,289.05 221.49,289.08 222.14,289.11 222.79,289.14 223.44,289.17 224.10,289.21 224.75,289.24 225.40,289.27 226.05,289.31 226.70,289.35 227.36,289.38 228.01,289.42 228.66,289.46 229.31,289.50 229.96,289.55 230.62,289.59 231.27,289.63 231.92,289.68 232.57,289.72 233.23,289.77 233.88,289.82 234.53,289.87 235.18,289.92 235.83,289.97 236.49,290.03 237.14,290.08 237.79,290.14 238.44,290.20 239.10,290.25 239.75,290.31 240.40,290.38 241.05,290.44 241.70,290.50 242.36,290.57 243.01,290.64 243.66,290.70 244.31,290.78 244.97,290.85 245.62,290.92 246.27,291.00 246.92,291.07 247.57,291.15 248.23,291.23 248.88,291.31 249.53,291.39 250.18,291.48 250.84,291.57 251.49,291.65 252.14,291.74 252.79,291.83 253.44,291.93 254.10,292.02 254.75,292.12 255.40,292.22 256.05,292.32 256.71,292.42 257.36,292.52 258.01,292.63 258.66,292.74 259.31,292.85 259.97,292.96 260.62,293.07 261.27,293.19 261.92,293.30 262.58,293.42 263.23,293.54 263.88,293.66 264.53,293.79 265.18,293.91 265.84,294.04 266.49,294.17 267.14,294.30 267.79,294.43 268.45,294.57 269.10,294.70 269.75,294.84 270.40,294.98 271.05,295.12 271.71,295.27 272.36,295.41 273.01,295.56 273.66,295.71 274.32,295.86 274.97,296.01 275.62,296.17 276.27,296.32 276.92,296.48 277.58,296.64 278.23,296.80 278.88,296.96 279.53,297.12 280.19,297.29 280.84,297.45 281.49,297.62 282.14,297.79 282.79,297.96 283.45,298.14 284.10,298.31 284.75,298.49 285.40,298.66 286.06,298.84 286.71,299.02 287.36,299.20 288.01,299.38 288.66,299.57 289.32,299.75 289.97,299.94 290.62,300.12 291.27,300.31 291.92,300.50 292.58,300.69 293.23,300.89 293.88,301.08 294.53,301.27 295.19,301.47 295.84,301.66 296.49,301.86 297.14,302.06 297.79,302.26 298.45,302.46 299.10,302.66 299.75,302.86 300.40,303.07 301.06,303.27 301.71,303.48 302.36,303.68 303.01,303.89 303.66,304.09 304.32,304.30 304.97,304.51 305.62,304.72 306.27,304.93 306.93,305.14 307.58,305.36 308.23,305.57 308.88,305.78 309.53,306.00 310.19,306.21 310.84,306.42 311.49,306.64 312.14,306.86 312.80,307.07 313.45,307.29 314.10,307.51 314.75,307.73 315.40,307.95 316.06,308.17 316.71,308.39 317.36,308.61 318.01,308.83 318.67,309.05 319.32,309.27 319.97,309.50 320.62,309.72 321.27,309.94 321.93,310.17 322.58,310.39 323.23,310.61 323.88,310.84 324.54,311.06 325.19,311.29 325.84,311.52 326.49,311.74 327.14,311.97 327.80,312.19 328.45,312.42 329.10,312.65 329.75,312.88 330.41,313.11 331.06,313.33 331.71,313.56 332.36,313.79 333.01,314.02 333.67,314.25 334.32,314.48 334.97,314.71 335.62,314.94 336.28,315.17 336.93,315.40 337.58,315.63 338.23,315.86 338.88,316.09 339.54,316.32 340.19,316.55 340.84,316.79 341.49,317.02 342.15,317.25 342.80,317.48 343.45,317.71 344.10,317.95 344.75,318.18 345.41,318.41 346.06,318.64 346.71,318.88 347.36,319.11 348.02,319.34 348.67,319.57 349.32,319.81 349.97,320.04 350.62,320.28 351.28,320.51 351.93,320.74 352.58,320.98 353.23,321.21 353.88,321.44 354.54,321.68 355.19,321.91 355.84,322.15 356.49,322.38 357.15,322.62 357.80,322.85 358.45,323.08 359.10,323.32 359.75,323.55 360.41,323.79 361.06,324.02 361.71,324.26 362.36,324.49 363.02,324.73 363.67,324.96 364.32,325.20 364.97,325.43 365.62,325.67 366.28,325.90 366.93,326.14 367.58,326.37 368.23,326.61 368.89,326.84 369.54,327.08 370.19,327.31 370.84,327.55 371.49,327.78 372.15,328.02 372.80,328.25 373.45,328.49 374.10,328.73 374.76,328.96 375.41,329.20 376.06,329.43 376.71,329.67 377.36,329.90 378.02,330.14 378.67,330.37 379.32,330.61 379.97,330.84 380.63,331.08 381.28,331.31 381.93,331.55 382.58,331.79 383.23,332.02 383.89,332.26 384.54,332.49 385.19,332.73 385.84,332.96 386.50,333.20 387.15,333.43 387.80,333.67 388.45,333.90 389.10,334.14 389.76,334.37 390.41,334.61 391.06,334.84 391.71,335.08 392.37,335.31 393.02,335.55 393.67,335.78 394.32,336.02 394.97,336.25 395.63,336.48 396.28,336.72 396.93,336.95 397.58,337.19 398.24,337.42 398.89,337.66 399.54,337.89 400.19,338.12 400.84,338.36 401.50,338.59 402.15,338.83 402.80,339.06 403.45,339.29 404.11,339.53 404.76,339.76 405.41,339.99 406.06,340.23 406.71,340.46 407.37,340.69 408.02,340.93 408.67,341.16 409.32,341.39 409.97,341.62 410.63,341.85 411.28,342.09 411.93,342.32 412.58,342.55 413.24,342.78 413.89,343.01 414.54,343.24 415.19,343.48 415.84,343.71 416.50,343.94 417.15,344.17 417.80,344.40 418.45,344.63 419.11,344.86 419.76,345.09 420.41,345.32 421.06,345.55 421.71,345.78 422.37,346.00 423.02,346.23 423.67,346.46 424.32,346.69 424.98,346.92 425.63,347.14 426.28,347.37 426.93,347.60 427.58,347.82 428.24,348.05 428.89,348.27 429.54,348.50 430.19,348.73 430.85,348.95 431.50,349.17 432.15,349.40 432.80,349.62 433.45,349.84 434.11,350.07 434.76,350.29 435.41,350.51 436.06,350.73 436.72,350.95 437.37,351.17 438.02,351.39 438.67,351.61 439.32,351.83 439.98,352.05 440.63,352.27 441.28,352.49 441.93,352.70 442.59,352.92 443.24,353.13 443.89,353.35 444.54,353.56 445.19,353.78 445.85,353.99 446.50,354.20 447.15,354.41 447.80,354.62 448.46,354.83 449.11,355.04 449.76,355.25 450.41,355.46 451.06,355.67 451.72,355.87 452.37,356.08 453.02,356.28 453.67,356.49 454.33,356.69 454.98,356.89 455.63,357.09 456.28,357.29 456.93,357.49 457.59,357.69 458.24,357.88 458.89,358.08 459.54,358.27 460.20,358.47 460.85,358.66 461.50,358.85 462.15,359.04 462.80,359.23 463.46,359.42 464.11,359.61 464.76,359.79 465.41,359.98 466.07,360.16 466.72,360.34 467.37,360.52 468.02,360.70 468.67,360.88 469.33,361.05 469.98,361.23 470.63,361.40 471.28,361.57 471.93,361.74 472.59,361.91 473.24,362.08 473.89,362.24 474.54,362.41 475.20,362.57 475.85,362.73 476.50,362.89 477.15,363.05 477.80,363.21 478.46,363.36 479.11,363.51 479.76,363.66 480.41,363.81 481.07,363.96 481.72,364.11 482.37,364.25 483.02,364.40 483.67,364.54 484.33,364.68 484.98,364.81 485.63,364.95 486.28,365.08 486.94,365.21 487.59,365.34 488.24,365.47 488.89,365.60 489.54,365.72 490.20,365.85 490.85,365.97 491.50,366.09 492.15,366.20 492.81,366.32 493.46,366.43 494.11,366.55 494.76,366.66 495.41,366.76 496.07,366.87 496.72,366.98 497.37,367.08 498.02,367.18 498.68,367.28 499.33,367.38 499.98,367.47 500.63,367.57 501.28,367.66 501.94,367.75 502.59,367.84 503.24,367.93 503.89,368.01 504.55,368.10 505.20,368.18 505.85,368.26 506.50,368.34 507.15,368.41 507.81,368.49 508.46,368.56 509.11,368.64 509.76,368.71 510.42,368.78 511.07,368.84 511.72,368.91 512.37,368.98 513.02,369.04 513.68,369.10 514.33,369.16 514.98,369.22 515.63,369.28 516.29,369.34 516.94,369.39 517.59,369.45 518.24,369.50 518.89,369.55 519.55,369.60 520.20,369.65 520.85,369.70 521.50,369.75 522.16,369.79 522.81,369.84 523.46,369.88 524.11,369.92 524.76,369.96 525.42,370.00 526.07,370.04 526.72,370.08 527.37,370.12 528.03,370.15 528.68,370.19 529.33,370.22 529.98,370.26 530.63,370.29 531.29,370.32 531.94,370.35 532.59,370.38 533.24,370.41 533.89,370.44 534.55,370.47 535.20,370.50 535.85,370.52 536.50,370.55 537.16,370.57 537.81,370.60 538.46,370.62 539.11,370.64 539.76,370.67 540.42,370.69 541.07,370.71 541.72,370.73 542.37,370.75 543.03,370.77 543.68,370.79 544.33,370.81 544.98,370.82 545.63,370.84 546.29,370.86 546.94,370.87 547.59,370.89 548.24,370.91 548.90,370.92 549.55,370.94 550.20,370.95 550.85,370.96 551.50,370.98 552.16,370.99 552.81,371.00 553.46,371.01 554.11,371.03 554.77,371.04 555.42,371.05 556.07,371.06 556.72,371.07 557.37,371.08 558.03,371.09 558.68,371.10 559.33,371.11 559.98,371.12 560.64,371.13 561.29,371.14 561.94,371.15 562.59,371.15 563.24,371.16 563.90,371.17 564.55,371.18 565.20,371.18 565.85,371.19 566.51,371.20 567.16,371.20 567.81,371.21 568.46,371.22 569.11,371.22 569.77,371.23 570.42,371.23 571.07,371.24 571.72,371.25 572.38,371.25 573.03,371.26 573.68,371.26 574.33,371.27 574.98,371.27 575.64,371.27 576.29,371.28 576.94,371.28 577.59,371.29 578.25,371.29 578.90,371.29 579.55,371.30 580.20,371.30 580.85,371.31 581.51,371.31 582.16,371.31 582.81,371.32 583.46,371.32 584.12,371.32 584.77,371.32 585.42,371.33 586.07,371.33 586.72,371.33 587.38,371.34 588.03,371.34 588.68,371.34 589.33,371.34 589.98,371.34 590.64,371.35 591.29,371.35 591.94,371.35 592.59,371.35 593.25,371.36 593.90,371.36 594.55,371.36 595.20,371.36 595.85,371.36 596.51,371.36 597.16,371.37 597.81,371.37 598.46,371.37 599.12,371.37 599.77,371.37 600.42,371.37 601.07,371.37 601.72,371.38 602.38,371.38 603.03,371.38 603.68,371.38 604.33,371.38 604.99,371.38 605.64,371.38 606.29,371.38 606.94,371.39 607.59,371.39 608.25,371.39 608.90,371.39 609.55,371.39 610.20,371.39 610.86,371.39 611.51,371.39 612.16,371.39 612.81,371.39 613.46,371.39 614.12,371.39 614.77,371.40 615.42,371.40 616.07,371.40 616.73,371.40 617.38,371.40 618.03,371.40 618.68,371.40 619.33,371.40 619.99,371.40 620.64,371.40 621.29,371.40 621.94,371.40 622.60,371.40 623.25,371.40 623.90,371.40 624.55,371.40 625.20,371.40 625.86,371.41 626.51,371.41 627.16,371.41 627.81,371.41 628.47,371.41 629.12,371.41 629.77,371.41 630.42,371.41 631.07,371.41 631.73,371.41 632.38,371.41 633.03,371.41 633.68,371.41 634.34,371.41 634.99,371.41 635.64,371.41 636.29,371.41 636.94,371.41 637.60,371.41 638.25,371.41 638.90,371.41 639.55,371.41 640.21,371.41 640.86,371.41 641.51,371.41 642.16,371.41 642.81,371.41 643.47,371.41 644.12,371.41 644.77,371.41 645.42,371.41 646.08,371.41 646.73,371.41 647.38,371.41 648.03,371.41 648.68,371.41 649.34,371.41 649.99,371.41 650.64,371.41 651.29,371.41 651.94,371.41 652.60,371.41 653.25,371.41 653.90,371.42 654.55,371.42 655.21,371.42 655.86,371.42 656.51,371.42 657.16,371.42 657.81,371.42 658.47,371.42 659.12,371.42 659.77,371.42 660.42,371.42 661.08,371.42 661.73,371.42 662.38,371.42 663.03,371.42 663.68,371.42 664.34,371.42 664.99,371.42 665.64,371.42 666.29,371.42 666.95,371.42 667.60,371.42 668.25,371.42 668.90,371.42 669.55,371.42 670.21,371.42 670.86,371.42 671.51,371.42 672.16,371.42 672.82,371.42 673.47,371.42 674.12,371.42 674.77,371.42 675.42,371.42 676.08,371.42 676.73,371.42 677.38,371.42 678.03,371.42 678.69,371.42 679.34,371.42 679.99,371.42 680.64,371.42 681.29,371.42 681.95,371.42 682.60,371.42 683.25,371.42 683.90,371.42 684.56,371.42 685.21,371.42 685.86,371.42 686.51,371.42 687.16,371.42 687.82,371.42 688.47,371.42 689.12,371.42 689.77,371.42 690.43,371.42 691.08,371.42 691.73,371.42 692.38,371.42 693.03,371.42 693.69,371.42 694.34,371.42 694.99,371.42 695.64,371.42 696.30,371.42 696.95,371.42 697.60,371.42 698.25,371.42 698.90,371.42 699.56,371.42 700.21,371.42 700.86,371.42 701.51,371.42 702.17,371.42 702.82,371.42 703.47,371.42 704.12,371.42 704.77,371.42 705.43,371.42 706.08,371.42 706.73,371.42 707.38,371.42 708.04,371.42 708.69,371.42 709.34,371.42 709.99,371.42 710.64,371.42 711.30,371.42 711.95,371.42 712.60,371.42 713.25,371.42 713.90,371.42 714.56,371.42 715.21,371.42 715.86,371.42 716.51,371.42 717.17,371.42 717.82,371.42 718.47,371.42 719.12,371.42 719.77,371.42 720.43,371.42 721.08,371.42 721.73,371.42 722.38,371.42 723.04,371.42 723.69,371.42 724.34,371.42 724.99,371.42 725.64,371.42 726.30,371.42 726.95,371.42 727.60,371.42 728.25,371.42 728.91,371.42 729.56,371.42 730.21,371.42 730.86,371.42 731.51,371.42 732.17,371.42 732.82,371.42 733.47,371.42 734.12,371.42 734.78,371.42 735.43,371.42 736.08,371.42 736.73,371.42 737.38,371.42 738.04,371.42 738.69,371.42 739.34,371.42 739.99,371.42 740.65,371.42 741.30,371.42 741.95,371.42 742.60,371.42 743.25,371.42 743.91,371.42 744.56,371.42 745.21,371.42 745.86,371.42 746.52,371.42 747.17,371.42 747.82,371.42 748.47,371.42 749.12,371.42 749.78,371.42 750.43,371.42 751.08,371.42 751.73,371.42 752.39,371.42 753.04,371.42 753.69,371.42 754.34,371.42 754.99,371.42 755.65,371.42 756.30,371.42 756.95,371.42 757.60,371.42 758.26,371.42 758.91,371.42 759.56,371.42 760.21,371.42 760.86,371.42 761.52,371.42 762.17,371.42 762.82,371.42 763.47,371.42 764.13,371.42 764.78,371.42 765.43,371.42 766.08,371.42 766.73,371.42 767.39,371.42 768.04,371.42 768.69,371.42 769.34,371.42 769.99,371.42 770.65,371.42 771.30,371.42 771.95,371.42 772.60,371.42 773.26,371.42 773.91,371.42 774.56,371.42 775.21,371.42 775.86,371.42 776.52,371.42 777.17,371.42 777.82,371.42 778.47,371.42 779.13,371.42 779.78,371.42 780.43,371.42 781.08,371.42 781.73,371.42 782.39,371.42 783.04,371.42 783.69,371.42 784.34,371.42 785.00,371.42 785.65,371.42 786.30,371.42 786.95,371.42 787.60,371.42 788.26,371.42 788.91,371.42 789.56,371.42 790.21,371.42 790.87,371.42 791.52,371.42 792.17,371.42 792.82,371.42 793.47,371.42 794.13,371.42 794.78,371.42 795.43,371.42 796.08,371.42 796.74,371.42 797.39,371.42 798.04,371.42 798.69,371.42 799.34,371.42 800.00,371.42 800.65,371.42 801.30,371.42 801.95,371.42 802.61,371.42 803.26,371.42 803.91,371.42 804.56,371.42 805.21,371.42 805.87,371.42 806.52,371.42 807.17,371.42 807.82,371.42 808.48,371.42 809.13,371.42 809.78,371.42 810.43,371.42 811.08,371.42 811.74,371.42 812.39,371.42 813.04,371.42 813.69,371.42 814.35,371.42 815.00,371.42 815.65,371.42 816.30,371.42 816.95,371.42 817.61,371.42 818.26,371.42 818.91,371.42 819.56,371.42 820.22,371.42 820.87,371.42 821.52,371.42 822.17,371.42 822.82,371.42 823.48,371.42 824.13,371.42 824.78,371.42 825.43,371.42 826.09,371.42 826.74,371.42 827.39,371.42 828.04,371.42 828.69,371.42 829.35,371.42 830.00,371.42 830.65,371.42 831.30,371.42 831.95,371.42 832.61,371.42 833.26,371.42 833.91,371.42 834.56,371.42 835.22,371.42 835.87,371.42 836.52,371.42 837.17,371.42 837.82,371.42 838.48,371.42 839.13,371.42 839.78,371.42 840.43,371.42 841.09,371.42 841.74,371.42 842.39,371.42 843.04,371.42 843.69,371.42 844.35,371.42 845.00,371.42 845.65,371.42 846.30,371.42 846.96,371.42 847.61,371.42 848.26,371.42 848.91,371.42 849.56,371.42 850.22,371.42 850.87,371.42 851.52,371.42 852.17,371.42 852.83,371.42 853.48,371.42 854.13,371.42 854.78,371.42 855.43,371.42 856.09,371.42 856.74,371.42 857.39,371.42 858.04,371.42 858.70,371.42 859.35,371.42 860.00,371.42" stroke="#ff00ff" stroke-width="1" fill="none" shape-rendering="crispEdges" transform="translate(-1,0)"/>
<path d="M78,332.5H861" stroke="#ff00ff" stroke-width="1" fill="none" stroke-dasharray="3,3" shape-rendering="crispEdges"/>
<rect x="824.5" y="9.5" width="30" height="16" rx="2.5" fill="url(#btn)" stroke="#8390aa" stroke-width="1"/>
<rect x="834.5" y="17.5" width="10" height="4" rx="1.2" fill="#f4f6fa" stroke="#3a3a3a" stroke-width="1.3"/>
<rect x="857.5" y="9.5" width="30" height="16" rx="2.5" fill="url(#btn)" stroke="#8390aa" stroke-width="1"/>
<rect x="867.5" y="13.5" width="10" height="8" rx="1" fill="#f4f6fa" stroke="#3a3a3a" stroke-width="1.3"/>
<rect x="870.5" y="16.5" width="4" height="2" fill="#f4f6fa" stroke="#3a3a3a" stroke-width="1.2"/>
<rect x="890.5" y="9.5" width="30" height="16" rx="2.5" fill="url(#btn)" stroke="#8390aa" stroke-width="1"/>
<path d="M902.3,14.7 L908.7,20.7 M908.7,14.7 L902.3,20.7" stroke="#3a3a3a" stroke-width="4.6" stroke-linecap="round"/>
<path d="M902.3,14.7 L908.7,20.7 M908.7,14.7 L902.3,20.7" stroke="#f4f6fa" stroke-width="2.4" stroke-linecap="round"/>
<rect x="563.5" y="54.5" width="286" height="297" rx="3" fill="#121212" stroke="#9a9a9a" stroke-width="1"/>
<rect x="564" y="55" width="2" height="294" fill="#6e6e6e"/>
<linearGradient id="dtb" x1="0" y1="0" x2="1" y2="0"><stop offset="0" stop-color="#7c7c7c"/><stop offset="0.45" stop-color="#707070"/><stop offset="0.6" stop-color="#4a4a4a"/><stop offset="0.68" stop-color="#3c3c3c"/><stop offset="0.8" stop-color="#5c5c5c"/><stop offset="1" stop-color="#6a6a6a"/></linearGradient>
<rect x="564" y="55" width="285" height="22" fill="url(#dtb)"/>
<radialGradient id="dglow" cx="0.5" cy="0.5" r="0.5"><stop offset="0" stop-color="#b4b6bc"/><stop offset="0.75" stop-color="#a8aab2"/><stop offset="1" stop-color="#9a9ca4" stop-opacity="0"/></radialGradient>
<ellipse cx="640" cy="66" rx="66" ry="13" fill="url(#dglow)"/>
<rect x="566" y="76" width="281" height="1" fill="#c8c8c8"/>
<rect x="566" y="77" width="281" height="1" fill="#202020"/>
<rect x="566" y="78" width="281" height="271" fill="#f3f2f6"/>
<rect x="800.5" y="54.5" width="47" height="19" rx="3" fill="url(#redbtn)" stroke="#3a1a16" stroke-width="1"/>
<path d="M820.5,60.5 L827.5,67 M827.5,60.5 L820.5,67" stroke="#303030" stroke-width="4.4" stroke-linecap="round"/>
<path d="M820.5,60.5 L827.5,67 M827.5,60.5 L820.5,67" stroke="#ffffff" stroke-width="2.2" stroke-linecap="round"/>
<path d="M572.5,60 H575 L571,69.5 H574.5 L574,70.5 H566 Q569,67 572.5,60 Z M575.5,60 H582.5 L581.5,62 H579.5 L576.5,70.5 H574.5 L577,62 H575 Z" fill="#a00000"/>
<text x="587" y="70" font-size="11.6" fill="#0c0c0c">BTmodule_noise.asc</text>
<path d="M572,84.5 H567.5 V168.5 H846.5 V84.5 H620 M572,178.5 H567.5 V263.5 H846.5 V178.5 H620 M702,274.5 H567.5 M827.5,274.5 H825 M827.5,274.5 V345.5 H567.5" fill="none" stroke="#d3dce6" stroke-width="1" shape-rendering="crispEdges"/>
<rect x="598.5" y="107.5" width="91" height="18" rx="1" fill="#f4f3f7" stroke="#b2b2b4" stroke-width="1"/>
<rect x="733.5" y="107.5" width="90" height="18" rx="1" fill="#f4f3f7" stroke="#b2b2b4" stroke-width="1"/>
<path d="M733.5,125 V107.5 H823 M734.5,125 V108.5 H823" stroke="#6a6a6a" stroke-width="1" fill="none"/>
<rect x="733.5" y="128.5" width="90" height="18" rx="1" fill="#f4f3f7" stroke="#b2b2b4" stroke-width="1"/>
<path d="M733.5,146 V128.5 H823 M734.5,146 V129.5 H823" stroke="#6a6a6a" stroke-width="1" fill="none"/>
<rect x="733.5" y="150.5" width="90" height="17" rx="1" fill="#f4f3f7" stroke="#b2b2b4" stroke-width="1"/>
<rect x="598.5" y="202.5" width="91" height="18" rx="1" fill="#f4f3f7" stroke="#b2b2b4" stroke-width="1"/>
<rect x="734.5" y="202.5" width="90" height="18" rx="1" fill="#f4f3f7" stroke="#b2b2b4" stroke-width="1"/>
<path d="M734.5,220 V202.5 H824 M735.5,220 V203.5 H824" stroke="#6a6a6a" stroke-width="1" fill="none"/>
<rect x="734.5" y="223.5" width="90" height="17" rx="1" fill="#f4f3f7" stroke="#b2b2b4" stroke-width="1"/>
<path d="M734.5,240 V223.5 H824 M735.5,240 V224.5 H824" stroke="#6a6a6a" stroke-width="1" fill="none"/>
<rect x="734.5" y="244.5" width="91" height="18" rx="1" fill="#f4f3f7" stroke="#b2b2b4" stroke-width="1"/>
<rect x="598.5" y="284.5" width="91" height="18" rx="1" fill="#f4f3f7" stroke="#b2b2b4" stroke-width="1"/>
<rect x="734.5" y="284.5" width="91" height="18" rx="1" fill="#f4f3f7" stroke="#b2b2b4" stroke-width="1"/>
<rect x="734.5" y="306.5" width="91" height="18" rx="1" fill="#f4f3f7" stroke="#b2b2b4" stroke-width="1"/>
<rect x="734.5" y="327.5" width="91" height="18" rx="1" fill="#f4f3f7" stroke="#b2b2b4" stroke-width="1"/>
<g font-size="11" style="letter-spacing:-0.2px"><text x="575" y="89" fill="#000" text-anchor="start">Cursor 1</text><text x="697" y="100" fill="#000" text-anchor="middle">V(vbluetooth)</text><text x="571" y="121" fill="#000" text-anchor="start">Freq:</text><text x="603" y="121" fill="#000" text-anchor="start">10KHz</text><text x="727" y="121" fill="#000" text-anchor="end">Mag:</text><text x="738" y="121" fill="#000" text-anchor="start">-41.6603dB</text><text x="727" y="142" fill="#000" text-anchor="end">Phase:</text><text x="738" y="142" fill="#000" text-anchor="start">-57.7538°</text><text x="727" y="163" fill="#000" text-anchor="end">Group Delay:</text><text x="738" y="163" fill="#000" text-anchor="start">-7.00604µs</text><text x="575" y="183" fill="#000" text-anchor="start">Cursor 2</text><text x="571" y="216" fill="#a2a2a2" text-anchor="start">Freq:</text><text x="608" y="216" fill="#5a5a5a" text-anchor="start">-- N/A--</text><text x="727" y="216" fill="#a2a2a2" text-anchor="end">Mag:</text><text x="744" y="216" fill="#5a5a5a" text-anchor="start">-- N/A--</text><text x="727" y="237" fill="#a2a2a2" text-anchor="end">Phase:</text><text x="744" y="236" fill="#5a5a5a" text-anchor="start">-- N/A--</text><text x="727" y="258" fill="#a2a2a2" text-anchor="end">Group Delay:</text><text x="744" y="258" fill="#5a5a5a" text-anchor="start">-- N/A--</text><text x="823" y="279" fill="#000" text-anchor="end">Ratio (Cursor2 / Cursor1)</text><text x="571" y="298" fill="#a2a2a2" text-anchor="start">Freq:</text><text x="608" y="298" fill="#5a5a5a" text-anchor="start">-- N/A--</text><text x="727" y="298" fill="#a2a2a2" text-anchor="end">Mag:</text><text x="744" y="298" fill="#5a5a5a" text-anchor="start">-- N/A--</text><text x="727" y="320" fill="#a2a2a2" text-anchor="end">Phase:</text><text x="744" y="320" fill="#5a5a5a" text-anchor="start">-- N/A--</text><text x="727" y="341" fill="#a2a2a2" text-anchor="end">Group Delay:</text><text x="744" y="341" fill="#5a5a5a" text-anchor="start">-- N/A--</text></g>
<circle cx="835.5" cy="118.5" r="5" fill="#f0f0f0" stroke="#8a8a8a" stroke-width="1"/>
<circle cx="835.5" cy="118.5" r="2.8" fill="#1e5f9a"/>
<circle cx="835.5" cy="139.5" r="5" fill="#f0f0f0" stroke="#8a8a8a" stroke-width="1"/>
<circle cx="835.5" cy="160.5" r="5" fill="#f0f0f0" stroke="#c8c8c8" stroke-width="1"/>
<circle cx="835.5" cy="211.5" r="5" fill="#f0f0f0" stroke="#c8c8c8" stroke-width="1"/>
<circle cx="835.5" cy="232.5" r="5" fill="#f0f0f0" stroke="#c8c8c8" stroke-width="1"/>
<circle cx="835.5" cy="253.5" r="5" fill="#f0f0f0" stroke="#c8c8c8" stroke-width="1"/>
<text x="32" y="22" font-size="12.2" fill="#303848" textLength="107" lengthAdjust="spacingAndGlyphs">BTmodule_noise.asc</text>
<rect x="12" y="9" width="16" height="16" fill="#e8e8e8"/><rect x="15" y="9" width="13" height="13" fill="#c6c6c6"/>
<path d="M14.5,9V25 M12,22.5H28 M12,10.5h2 M12,13.5h2 M12,16.5h2 M12,19.5h2 M17.5,22v3 M20.5,22v3 M23.5,22v3 M26.5,22v3" stroke="#000" stroke-width="1" fill="none" shape-rendering="crispEdges"/>
<path d="M15.5,17 L18.5,13.5 H20.5 L23,16 H24.5 L27.5,12.5" stroke="#ff0000" stroke-width="1.6" fill="none"/>
<rect x="0" y="414" width="931" height="414" fill="#d4e3f1"/>
<rect x="0" y="414" width="931" height="1" fill="#eceaee"/>
<rect x="0" y="415" width="931" height="4" fill="#bacddc"/>
<rect x="0" y="419" width="931" height="13" fill="#c7d6e4"/>
<rect x="0" y="432" width="931" height="4" fill="#d5dfe9"/>
<rect x="0" y="414" width="1" height="414" fill="#a2a2a2"/>
<rect x="1" y="417" width="2" height="411" fill="#4e4e4e"/>
<rect x="3" y="418" width="1" height="408" fill="#eef3f8"/>
<rect x="929" y="418" width="1" height="408" fill="#e8f0f8"/>
<rect x="930" y="417" width="1" height="411" fill="#5a5a5a"/>
<rect x="4" y="825" width="925" height="1" fill="#f2f6fa"/>
<rect x="1" y="826" width="931" height="2" fill="#4e4e4e"/>
<path d="M1,418 Q1,414 5,414" stroke="#6a6a6a" stroke-width="1.5" fill="none"/>
<path d="M927,414 Q931,414 931,418" stroke="#6a6a6a" stroke-width="1.5" fill="none"/>
<rect x="10" y="443" width="913" height="376" fill="#f4f2f6"/>
<rect x="10" y="443" width="911" height="374" fill="#a0a0a0"/>
<rect x="11" y="444" width="910" height="373" fill="#696969"/>
<rect x="12" y="445" width="909" height="372" fill="#c5c5c7"/>
<rect x="12" y="445" width="909" height="372" fill="url(#dots)"/>
<rect x="824.5" y="423.5" width="30" height="16" rx="2.5" fill="url(#btn)" stroke="#8390aa" stroke-width="1"/>
<rect x="834.5" y="431.5" width="10" height="4" rx="1.2" fill="#f4f6fa" stroke="#3a3a3a" stroke-width="1.3"/>
<rect x="857.5" y="423.5" width="30" height="16" rx="2.5" fill="url(#btn)" stroke="#8390aa" stroke-width="1"/>
<rect x="867.5" y="427.5" width="10" height="8" rx="1" fill="#f4f6fa" stroke="#3a3a3a" stroke-width="1.3"/>
<rect x="870.5" y="430.5" width="4" height="2" fill="#f4f6fa" stroke="#3a3a3a" stroke-width="1.2"/>
<rect x="890.5" y="423.5" width="30" height="16" rx="2.5" fill="url(#btn)" stroke="#8390aa" stroke-width="1"/>
<path d="M902.3,428.7 L908.7,434.7 M908.7,428.7 L902.3,434.7" stroke="#3a3a3a" stroke-width="4.6" stroke-linecap="round"/>
<path d="M902.3,428.7 L908.7,434.7 M908.7,428.7 L902.3,434.7" stroke="#f4f6fa" stroke-width="2.4" stroke-linecap="round"/>
<path d="M153.5,545.5H318.5 M381.5,545.5H495.5 M558.5,545.5H685.5 M153.5,722.5H254.5 M318.5,722.5H495.5 M558.5,722.5H685.5 M153.5,545.5V583.5 M153.5,646.5V722.5 M406.5,545.5V583.5 M406.5,633.5V722.5 M609.5,545.5V633.5 M609.5,697.5V722.5 M685.5,545.5V633.5 M685.5,697.5V722.5 M153.5,722.5V735.5" stroke="#0000ff" stroke-width="1" fill="none" shape-rendering="crispEdges"/>
<path d="M139.5,735.5H167.5L153.5,749.5Z" stroke="#0000ff" stroke-width="1" fill="none"/>
<rect x="150.0" y="719.0" width="7" height="7" fill="#0000ff"/>
<rect x="403.0" y="542.0" width="7" height="7" fill="#0000ff"/>
<rect x="403.0" y="719.0" width="7" height="7" fill="#0000ff"/>
<rect x="606.0" y="542.0" width="7" height="7" fill="#0000ff"/>
<rect x="606.0" y="719.0" width="7" height="7" fill="#0000ff"/>
<path d="M318.50,545.50 L324.83,545.50 L331.17,532.83 L343.83,558.17 L356.50,532.83 L369.17,558.17 L375.50,545.50 L381.83,545.50 M495.50,545.50 L501.83,545.50 L508.17,532.83 L520.83,558.17 L533.50,532.83 L546.17,558.17 L552.50,545.50 L558.83,545.50 M254.50,722.50 L260.83,722.50 L267.17,709.83 L279.83,735.17 L292.50,709.83 L305.17,735.17 L311.50,722.50 L317.83,722.50 M495.50,722.50 L501.83,722.50 L508.17,709.83 L520.83,735.17 L533.50,709.83 L546.17,735.17 L552.50,722.50 L558.83,722.50 M609.50,633.50 L609.50,639.83 L622.17,646.17 L596.83,658.83 L622.17,671.50 L596.83,684.17 L609.50,690.50 L609.50,696.83 M406.5,583.5V605.5 M406.5,611.5V633.5 M394.0,605.5H420.0 M394.0,611.5H420.0 M153.5,583.5V599.5 M128.0,599.5H179.0 M128.0,618.5H179.0 M153.5,630.5V646.5 M140.5,605.5h26v6h-26Z M140.5,624.5h26v6h-26Z M136.5,589.5h7 M140.0,586.0v7 M685.5,633.5V640 M685.5,690V697.5 M685.5,679V660 M685.5,652.5L688.0,661H683.0Z" stroke="#000080" stroke-width="1" fill="none" shape-rendering="crispEdges"/>
<circle cx="685.5" cy="665" r="24.7" stroke="#000080" stroke-width="1" fill="none"/>
<path d="M470.5,494.5H914.0 M470.5,798.5H914.0" stroke="#000080" stroke-width="1" stroke-dasharray="3,3" stroke-dashoffset="3" fill="none" shape-rendering="crispEdges"/>
<path d="M470.5,494.0V798.5 M913.5,494.0V798.5" stroke="#000080" stroke-width="1" stroke-dasharray="3,3" fill="none" shape-rendering="crispEdges"/>
<g font-size="19" font-weight="bold" fill="#000"><text x="138" y="540.6">Vin</text><text x="171.8" y="589">V1</text><text x="337.6" y="527.8">R1</text><text x="331.2" y="574.3">4R7</text><text x="413.8" y="595.8">C1</text><text x="413.3" y="633.6">470µ</text><text x="274.5" y="704.5">R2</text><text x="273.6" y="753">1m</text><text x="515.2" y="527.2">R4</text><text x="507.6" y="574.5">10m</text><text x="634.8" y="540">Vbluetooth</text><text x="515.2" y="704.2">R3</text><text x="507.6" y="753">10m</text><text x="625.2" y="658.5">R5</text><text x="625.5" y="687.4">50</text><text x="714.8" y="680.6">B2</text><text x="708" y="719.2">I=(white(2e8*time)/2)</text><text x="20.2" y="605.8">Rser=100m</text><text x="20.6" y="627.8">AC 1</text><text x="106.3" y="627.8">5</text><text x="63.7" y="775.3">;tran 10m</text><text x="63.2" y="798.5" textLength="193.5" lengthAdjust="spacingAndGlyphs">.ac oct 100 1 100meg</text></g>
<text x="469.5" y="482" font-size="19" font-weight="bold" fill="#0000d0" textLength="165" lengthAdjust="spacingAndGlyphs">Bluetooth Module</text>
<text x="32" y="436" font-size="12.2" fill="#303848" textLength="107" lengthAdjust="spacingAndGlyphs">BTmodule_noise.asc</text>
<path d="M14,430.5H17.5 M23.5,423.5L19,428 M19,433L24.5,438.5" stroke="#0000ff" stroke-width="1.2" fill="none"/>
<rect x="17" y="426" width="2" height="9" fill="#0000ff"/><path d="M21,437 L24,434 L24.5,438.5Z" fill="#0000ff" stroke="#0000ff" stroke-width="1"/>
</svg></body></html>
